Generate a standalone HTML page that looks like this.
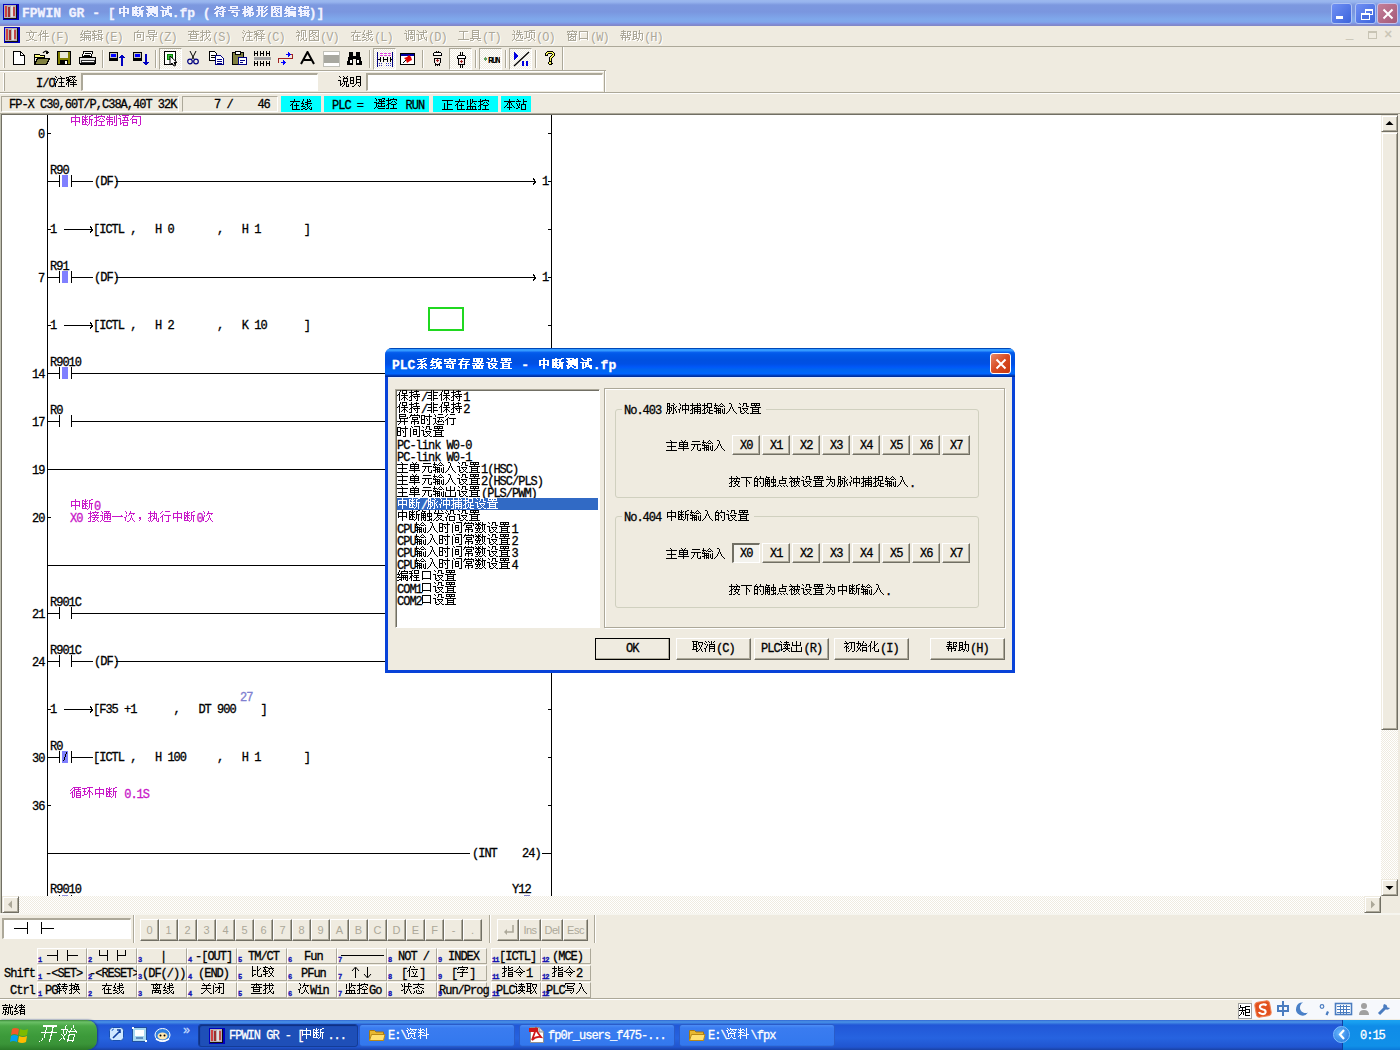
<!DOCTYPE html>
<html><head><meta charset="utf-8">
<style>
*{box-sizing:border-box;margin:0;padding:0}
html,body{width:1400px;height:1050px;overflow:hidden;background:#efebe0;color:#000}
.a{position:absolute}
.t{font-family:"Liberation Mono",monospace;font-size:12px;line-height:12px;white-space:pre;-webkit-text-stroke:0.3px currentColor}
.c{display:inline-block;overflow:hidden;white-space:pre;color:transparent;-webkit-text-stroke:0;vertical-align:top;height:12px}
.e{white-space:pre}
</style></head><body>

<div class="a" style="left:0px;top:0px;width:1400px;height:26px;background:linear-gradient(#9cb8ee 0,#97b4ee 2px,#7c98df 5px,#7a96df 12px,#7fa8eb 19px,#80a6ea 22px,#8090e0 24px,#8088c8 25px);"></div>
<svg class="a" style="left:3px;top:4px" width="16" height="16" viewBox="0 0 16 16">
<rect x="0" y="0" width="16" height="16" fill="#0000c0"/>
<rect x="1" y="1" width="13" height="14" fill="#101010"/>
<rect x="1" y="1" width="12" height="13" fill="#b8b0b0"/>
<rect x="2" y="2" width="2" height="11" fill="#d04040"/><rect x="5" y="3" width="2" height="10" fill="#a03030"/>
<rect x="8" y="2" width="2" height="11" fill="#e0e0e0"/><rect x="10" y="3" width="2" height="9" fill="#c04848"/>
</svg>
<div class="a t " style="left:22px;top:8px;color:#f0f2ff;font-size:13px;font-weight:bold;"><span class="e" style="letter-spacing:0.00px">FPWIN GR - [</span><span class="c" style="width:56px">中断测试</span><span class="e" style="letter-spacing:0.00px">.fp (</span><span class="c" style="width:98px">符号梯形图编辑</span><span class="e" style="letter-spacing:0.00px">)]</span><svg class="a" style="left:0;top:-2px;overflow:visible" width="306" height="16" fill="#f0f2ff" shape-rendering="crispEdges"><use href="#g0" x="96" y="0"/><use href="#g1" x="110" y="0"/><use href="#g2" x="124" y="0"/><use href="#g3" x="138" y="0"/><use href="#g4" x="192" y="0"/><use href="#g5" x="206" y="0"/><use href="#g6" x="220" y="0"/><use href="#g7" x="234" y="0"/><use href="#g8" x="248" y="0"/><use href="#g9" x="262" y="0"/><use href="#g10" x="276" y="0"/></svg></div>
<div class="a" style="left:1331px;top:3px;width:21px;height:21px;border:1px solid #b0c4f4;border-radius:3px;background:linear-gradient(135deg,#7090f4,#3c64dc)"></div>
<div class="a" style="left:1336px;top:16px;width:7px;height:3px;background:#fff;"></div>
<div class="a" style="left:1355px;top:3px;width:21px;height:21px;border:1px solid #b0c4f4;border-radius:3px;background:linear-gradient(135deg,#7090f4,#3c64dc)"></div>
<div class="a" style="left:1365px;top:9px;width:8px;height:6px;border:1px solid #fff;border-top-width:2px"></div>
<div class="a" style="left:1361px;top:13px;width:9px;height:7px;border:1px solid #fff;border-top-width:2px;background:#4a6ee0"></div>
<div class="a" style="left:1377px;top:3px;width:21px;height:21px;border:1px solid #c8c0e8;border-radius:3px;background:linear-gradient(135deg,#c47f98,#a45a78)"><svg class="a" style="left:4px;top:4px" width="12" height="12"><path d="M1.5 1.5L10.5 10.5M10.5 1.5L1.5 10.5" stroke="#fff" stroke-width="2"/></svg></div>
<div class="a" style="left:0px;top:26px;width:1400px;height:20px;background:#efebe0;"></div>
<svg class="a" style="left:4px;top:27px" width="16" height="16" viewBox="0 0 16 16">
<rect x="0" y="0" width="16" height="16" fill="#0000c0"/>
<rect x="1" y="1" width="13" height="14" fill="#101010"/>
<rect x="1" y="1" width="12" height="13" fill="#b8b0b0"/>
<rect x="2" y="2" width="2" height="11" fill="#d04040"/><rect x="5" y="3" width="2" height="10" fill="#a03030"/>
<rect x="8" y="2" width="2" height="11" fill="#e0e0e0"/><rect x="10" y="3" width="2" height="9" fill="#c04848"/>
</svg>
<div class="a t " style="left:27px;top:33px;color:#ffffff;font-size:12px;-webkit-text-stroke:0;"><span class="c" style="width:24px">文件</span><span class="e" style="letter-spacing:-1.00px">(F)</span><svg class="a" style="left:0;top:-2px;overflow:visible" width="42" height="16" fill="#ffffff" shape-rendering="crispEdges"><use href="#g11" x="0" y="0"/><use href="#g12" x="12" y="0"/></svg></div>
<div class="a t " style="left:26px;top:32px;color:#aca899;font-size:12px;-webkit-text-stroke:0;"><span class="c" style="width:24px">文件</span><span class="e" style="letter-spacing:-1.00px">(F)</span><svg class="a" style="left:0;top:-2px;overflow:visible" width="42" height="16" fill="#aca899" shape-rendering="crispEdges"><use href="#g11" x="0" y="0"/><use href="#g12" x="12" y="0"/></svg></div>
<div class="a t " style="left:81px;top:33px;color:#ffffff;font-size:12px;-webkit-text-stroke:0;"><span class="c" style="width:24px">编辑</span><span class="e" style="letter-spacing:-1.00px">(E)</span><svg class="a" style="left:0;top:-2px;overflow:visible" width="42" height="16" fill="#ffffff" shape-rendering="crispEdges"><use href="#g13" x="0" y="0"/><use href="#g14" x="12" y="0"/></svg></div>
<div class="a t " style="left:80px;top:32px;color:#aca899;font-size:12px;-webkit-text-stroke:0;"><span class="c" style="width:24px">编辑</span><span class="e" style="letter-spacing:-1.00px">(E)</span><svg class="a" style="left:0;top:-2px;overflow:visible" width="42" height="16" fill="#aca899" shape-rendering="crispEdges"><use href="#g13" x="0" y="0"/><use href="#g14" x="12" y="0"/></svg></div>
<div class="a t " style="left:135px;top:33px;color:#ffffff;font-size:12px;-webkit-text-stroke:0;"><span class="c" style="width:24px">向导</span><span class="e" style="letter-spacing:-1.00px">(Z)</span><svg class="a" style="left:0;top:-2px;overflow:visible" width="42" height="16" fill="#ffffff" shape-rendering="crispEdges"><use href="#g15" x="0" y="0"/><use href="#g16" x="12" y="0"/></svg></div>
<div class="a t " style="left:134px;top:32px;color:#aca899;font-size:12px;-webkit-text-stroke:0;"><span class="c" style="width:24px">向导</span><span class="e" style="letter-spacing:-1.00px">(Z)</span><svg class="a" style="left:0;top:-2px;overflow:visible" width="42" height="16" fill="#aca899" shape-rendering="crispEdges"><use href="#g15" x="0" y="0"/><use href="#g16" x="12" y="0"/></svg></div>
<div class="a t " style="left:189px;top:33px;color:#ffffff;font-size:12px;-webkit-text-stroke:0;"><span class="c" style="width:24px">查找</span><span class="e" style="letter-spacing:-1.00px">(S)</span><svg class="a" style="left:0;top:-2px;overflow:visible" width="42" height="16" fill="#ffffff" shape-rendering="crispEdges"><use href="#g17" x="0" y="0"/><use href="#g18" x="12" y="0"/></svg></div>
<div class="a t " style="left:188px;top:32px;color:#aca899;font-size:12px;-webkit-text-stroke:0;"><span class="c" style="width:24px">查找</span><span class="e" style="letter-spacing:-1.00px">(S)</span><svg class="a" style="left:0;top:-2px;overflow:visible" width="42" height="16" fill="#aca899" shape-rendering="crispEdges"><use href="#g17" x="0" y="0"/><use href="#g18" x="12" y="0"/></svg></div>
<div class="a t " style="left:243px;top:33px;color:#ffffff;font-size:12px;-webkit-text-stroke:0;"><span class="c" style="width:24px">注释</span><span class="e" style="letter-spacing:-1.00px">(C)</span><svg class="a" style="left:0;top:-2px;overflow:visible" width="42" height="16" fill="#ffffff" shape-rendering="crispEdges"><use href="#g19" x="0" y="0"/><use href="#g20" x="12" y="0"/></svg></div>
<div class="a t " style="left:242px;top:32px;color:#aca899;font-size:12px;-webkit-text-stroke:0;"><span class="c" style="width:24px">注释</span><span class="e" style="letter-spacing:-1.00px">(C)</span><svg class="a" style="left:0;top:-2px;overflow:visible" width="42" height="16" fill="#aca899" shape-rendering="crispEdges"><use href="#g19" x="0" y="0"/><use href="#g20" x="12" y="0"/></svg></div>
<div class="a t " style="left:297px;top:33px;color:#ffffff;font-size:12px;-webkit-text-stroke:0;"><span class="c" style="width:24px">视图</span><span class="e" style="letter-spacing:-1.00px">(V)</span><svg class="a" style="left:0;top:-2px;overflow:visible" width="42" height="16" fill="#ffffff" shape-rendering="crispEdges"><use href="#g21" x="0" y="0"/><use href="#g22" x="12" y="0"/></svg></div>
<div class="a t " style="left:296px;top:32px;color:#aca899;font-size:12px;-webkit-text-stroke:0;"><span class="c" style="width:24px">视图</span><span class="e" style="letter-spacing:-1.00px">(V)</span><svg class="a" style="left:0;top:-2px;overflow:visible" width="42" height="16" fill="#aca899" shape-rendering="crispEdges"><use href="#g21" x="0" y="0"/><use href="#g22" x="12" y="0"/></svg></div>
<div class="a t " style="left:351px;top:33px;color:#ffffff;font-size:12px;-webkit-text-stroke:0;"><span class="c" style="width:24px">在线</span><span class="e" style="letter-spacing:-1.00px">(L)</span><svg class="a" style="left:0;top:-2px;overflow:visible" width="42" height="16" fill="#ffffff" shape-rendering="crispEdges"><use href="#g23" x="0" y="0"/><use href="#g24" x="12" y="0"/></svg></div>
<div class="a t " style="left:350px;top:32px;color:#aca899;font-size:12px;-webkit-text-stroke:0;"><span class="c" style="width:24px">在线</span><span class="e" style="letter-spacing:-1.00px">(L)</span><svg class="a" style="left:0;top:-2px;overflow:visible" width="42" height="16" fill="#aca899" shape-rendering="crispEdges"><use href="#g23" x="0" y="0"/><use href="#g24" x="12" y="0"/></svg></div>
<div class="a t " style="left:405px;top:33px;color:#ffffff;font-size:12px;-webkit-text-stroke:0;"><span class="c" style="width:24px">调试</span><span class="e" style="letter-spacing:-1.00px">(D)</span><svg class="a" style="left:0;top:-2px;overflow:visible" width="42" height="16" fill="#ffffff" shape-rendering="crispEdges"><use href="#g25" x="0" y="0"/><use href="#g26" x="12" y="0"/></svg></div>
<div class="a t " style="left:404px;top:32px;color:#aca899;font-size:12px;-webkit-text-stroke:0;"><span class="c" style="width:24px">调试</span><span class="e" style="letter-spacing:-1.00px">(D)</span><svg class="a" style="left:0;top:-2px;overflow:visible" width="42" height="16" fill="#aca899" shape-rendering="crispEdges"><use href="#g25" x="0" y="0"/><use href="#g26" x="12" y="0"/></svg></div>
<div class="a t " style="left:459px;top:33px;color:#ffffff;font-size:12px;-webkit-text-stroke:0;"><span class="c" style="width:24px">工具</span><span class="e" style="letter-spacing:-1.00px">(T)</span><svg class="a" style="left:0;top:-2px;overflow:visible" width="42" height="16" fill="#ffffff" shape-rendering="crispEdges"><use href="#g27" x="0" y="0"/><use href="#g28" x="12" y="0"/></svg></div>
<div class="a t " style="left:458px;top:32px;color:#aca899;font-size:12px;-webkit-text-stroke:0;"><span class="c" style="width:24px">工具</span><span class="e" style="letter-spacing:-1.00px">(T)</span><svg class="a" style="left:0;top:-2px;overflow:visible" width="42" height="16" fill="#aca899" shape-rendering="crispEdges"><use href="#g27" x="0" y="0"/><use href="#g28" x="12" y="0"/></svg></div>
<div class="a t " style="left:513px;top:33px;color:#ffffff;font-size:12px;-webkit-text-stroke:0;"><span class="c" style="width:24px">选项</span><span class="e" style="letter-spacing:-1.00px">(O)</span><svg class="a" style="left:0;top:-2px;overflow:visible" width="42" height="16" fill="#ffffff" shape-rendering="crispEdges"><use href="#g29" x="0" y="0"/><use href="#g30" x="12" y="0"/></svg></div>
<div class="a t " style="left:512px;top:32px;color:#aca899;font-size:12px;-webkit-text-stroke:0;"><span class="c" style="width:24px">选项</span><span class="e" style="letter-spacing:-1.00px">(O)</span><svg class="a" style="left:0;top:-2px;overflow:visible" width="42" height="16" fill="#aca899" shape-rendering="crispEdges"><use href="#g29" x="0" y="0"/><use href="#g30" x="12" y="0"/></svg></div>
<div class="a t " style="left:567px;top:33px;color:#ffffff;font-size:12px;-webkit-text-stroke:0;"><span class="c" style="width:24px">窗口</span><span class="e" style="letter-spacing:-1.00px">(W)</span><svg class="a" style="left:0;top:-2px;overflow:visible" width="42" height="16" fill="#ffffff" shape-rendering="crispEdges"><use href="#g31" x="0" y="0"/><use href="#g32" x="12" y="0"/></svg></div>
<div class="a t " style="left:566px;top:32px;color:#aca899;font-size:12px;-webkit-text-stroke:0;"><span class="c" style="width:24px">窗口</span><span class="e" style="letter-spacing:-1.00px">(W)</span><svg class="a" style="left:0;top:-2px;overflow:visible" width="42" height="16" fill="#aca899" shape-rendering="crispEdges"><use href="#g31" x="0" y="0"/><use href="#g32" x="12" y="0"/></svg></div>
<div class="a t " style="left:621px;top:33px;color:#ffffff;font-size:12px;-webkit-text-stroke:0;"><span class="c" style="width:24px">帮助</span><span class="e" style="letter-spacing:-1.00px">(H)</span><svg class="a" style="left:0;top:-2px;overflow:visible" width="42" height="16" fill="#ffffff" shape-rendering="crispEdges"><use href="#g33" x="0" y="0"/><use href="#g34" x="12" y="0"/></svg></div>
<div class="a t " style="left:620px;top:32px;color:#aca899;font-size:12px;-webkit-text-stroke:0;"><span class="c" style="width:24px">帮助</span><span class="e" style="letter-spacing:-1.00px">(H)</span><svg class="a" style="left:0;top:-2px;overflow:visible" width="42" height="16" fill="#aca899" shape-rendering="crispEdges"><use href="#g33" x="0" y="0"/><use href="#g34" x="12" y="0"/></svg></div>
<div class="a t " style="left:1346px;top:29px;color:#c8c4b4;font-size:12px;"><span class="e" style="letter-spacing:-1.00px">_</span></div>
<div class="a" style="left:1368px;top:31px;width:9px;height:8px;border:1px solid #c8c4b4;border-top-width:2px"></div>
<div class="a t " style="left:1384px;top:29px;color:#c8c4b4;font-size:14px;"><span class="e" style="letter-spacing:0.00px">×</span></div>
<div class="a" style="left:0px;top:46px;width:1400px;height:1px;background:#aca899;"></div>
<div class="a" style="left:0px;top:47px;width:1400px;height:1px;background:#fcfcf8;"></div>
<div class="a" style="left:0px;top:47px;width:1400px;height:23px;background:#efebe0;"></div>
<div class="a" style="left:3px;top:49px;width:1px;height:19px;background:#fff;"></div>
<div class="a" style="left:4px;top:49px;width:1px;height:19px;background:#aca899;"></div>
<div class="a" style="left:102px;top:50px;width:1px;height:18px;background:#aca899;"></div>
<div class="a" style="left:103px;top:50px;width:1px;height:18px;background:#fff;"></div>
<div class="a" style="left:155px;top:50px;width:1px;height:18px;background:#aca899;"></div>
<div class="a" style="left:156px;top:50px;width:1px;height:18px;background:#fff;"></div>
<div class="a" style="left:369px;top:50px;width:1px;height:18px;background:#aca899;"></div>
<div class="a" style="left:370px;top:50px;width:1px;height:18px;background:#fff;"></div>
<div class="a" style="left:422px;top:50px;width:1px;height:18px;background:#aca899;"></div>
<div class="a" style="left:423px;top:50px;width:1px;height:18px;background:#fff;"></div>
<div class="a" style="left:475px;top:50px;width:1px;height:18px;background:#aca899;"></div>
<div class="a" style="left:476px;top:50px;width:1px;height:18px;background:#fff;"></div>
<div class="a" style="left:505px;top:50px;width:1px;height:18px;background:#aca899;"></div>
<div class="a" style="left:506px;top:50px;width:1px;height:18px;background:#fff;"></div>
<div class="a" style="left:535px;top:50px;width:1px;height:18px;background:#aca899;"></div>
<div class="a" style="left:536px;top:50px;width:1px;height:18px;background:#fff;"></div>
<div class="a" style="left:562px;top:47px;width:1px;height:23px;background:#aca899;"></div>
<div class="a" style="left:563px;top:47px;width:1px;height:23px;background:#fff;"></div>
<div class="a" style="left:159px;top:48px;width:23px;height:22px;background:repeating-conic-gradient(#fff 0 25%,#efebe0 0 50%) 0 0/2px 2px;border-top:1px solid #aca899;border-left:1px solid #aca899;border-right:1px solid #fff;border-bottom:1px solid #fff"></div>
<div class="a" style="left:373px;top:48px;width:23px;height:22px;background:repeating-conic-gradient(#fff 0 25%,#efebe0 0 50%) 0 0/2px 2px;border-top:1px solid #aca899;border-left:1px solid #aca899;border-right:1px solid #fff;border-bottom:1px solid #fff"></div>
<div class="a" style="left:449px;top:48px;width:23px;height:22px;background:repeating-conic-gradient(#fff 0 25%,#efebe0 0 50%) 0 0/2px 2px;border-top:1px solid #aca899;border-left:1px solid #aca899;border-right:1px solid #fff;border-bottom:1px solid #fff"></div>
<div class="a" style="left:479px;top:48px;width:23px;height:22px;background:repeating-conic-gradient(#fff 0 25%,#efebe0 0 50%) 0 0/2px 2px;border-top:1px solid #aca899;border-left:1px solid #aca899;border-right:1px solid #fff;border-bottom:1px solid #fff"></div>
<div class="a" style="left:509px;top:48px;width:23px;height:22px;background:repeating-conic-gradient(#fff 0 25%,#efebe0 0 50%) 0 0/2px 2px;border-top:1px solid #aca899;border-left:1px solid #aca899;border-right:1px solid #fff;border-bottom:1px solid #fff"></div>
<svg class="a" style="left:13px;top:51px" width="12" height="14" viewBox="0 0 12 14" shape-rendering="crispEdges"><path d="M0.5 0.5H7.5L11.5 4.5V13.5H0.5Z" fill="#fff" stroke="#000"/><path d="M7.5 0.5V4.5H11.5" fill="none" stroke="#000"/></svg>
<svg class="a" style="left:34px;top:50px" width="16" height="15" viewBox="0 0 16 15" shape-rendering="crispEdges"><path d="M9 3Q11 0 14 2" stroke="#000" fill="none" stroke-width="1.2" shape-rendering="auto"/><path d="M13 1L15 3L12 4Z" fill="#000"/><path d="M0.5 4.5H5.5L6.5 5.5H10.5V7.5H0.5Z" fill="#ffff80" stroke="#000"/><path d="M0.5 5V14.5H12.5L15.5 8.5H3.5L0.5 14.5" fill="#ffff80" stroke="#000"/><path d="M3.5 8.5H15.5L12.5 14.5H0.5Z" fill="#808040" stroke="#000"/></svg>
<svg class="a" style="left:57px;top:51px" width="14" height="14" viewBox="0 0 14 14" shape-rendering="crispEdges"><rect x="0.5" y="0.5" width="13" height="13" fill="#808000" stroke="#000"/><rect x="3" y="1" width="8" height="6" fill="#e8e8d8"/><rect x="3" y="9" width="8" height="5" fill="#000"/><rect x="8" y="10" width="2" height="3" fill="#fff"/></svg>
<svg class="a" style="left:79px;top:51px" width="17" height="15" viewBox="0 0 17 15" shape-rendering="crispEdges"><path d="M4.5 0.5H13.5L12.5 5.5H3.5Z" fill="#fff" stroke="#000"/><path d="M6 2H12M5 4H11" stroke="#000"/><path d="M0.5 6.5H16.5V12.5H0.5Z" fill="#e0e0e0" stroke="#000"/><rect x="2" y="9" width="13" height="2" fill="#fff" stroke="#000" stroke-width="0.8"/><rect x="1" y="13" width="15" height="1" fill="#000"/></svg>
<svg class="a" style="left:109px;top:52px" width="17" height="15" viewBox="0 0 17 15" shape-rendering="crispEdges"><rect x="0.5" y="0.5" width="8" height="6" fill="#c0c0c0" stroke="#000"/><rect x="2" y="2" width="5" height="3" fill="#0000ff"/><rect x="0" y="7" width="9" height="2" fill="#000"/><path d="M13 14V4" stroke="#0000c0" stroke-width="2"/><path d="M10 6L13 2L16 6Z" fill="#0000c0"/></svg>
<svg class="a" style="left:133px;top:52px" width="17" height="15" viewBox="0 0 17 15" shape-rendering="crispEdges"><rect x="0.5" y="0.5" width="8" height="6" fill="#c0c0c0" stroke="#000"/><rect x="2" y="2" width="5" height="3" fill="#0000ff"/><rect x="0" y="7" width="9" height="2" fill="#000"/><path d="M13 2V12" stroke="#0000c0" stroke-width="2"/><path d="M10 10L13 14L16 10Z" fill="#0000c0"/></svg>
<svg class="a" style="left:164px;top:51px" width="16" height="16" viewBox="0 0 16 16" shape-rendering="crispEdges"><rect x="0.5" y="0.5" width="11" height="13" fill="#fff" stroke="#000"/><rect x="3" y="3" width="5" height="5" fill="#40c040" stroke="#008000" stroke-width="1"/><path d="M6 5V14L8 12L10 15L11.5 14.5L10 11.5H13Z" fill="#fff" stroke="#000" shape-rendering="auto"/></svg>
<svg class="a" style="left:187px;top:50px" width="12" height="15" viewBox="0 0 12 15" shape-rendering="crispEdges"><path d="M3 1L7 9M9 1L5 9" stroke="#000" stroke-width="1" shape-rendering="auto"/><circle cx="3" cy="11.5" r="2.3" fill="none" stroke="#000080" stroke-width="1.2" shape-rendering="auto"/><circle cx="9" cy="11.5" r="2.3" fill="none" stroke="#000080" stroke-width="1.2" shape-rendering="auto"/></svg>
<svg class="a" style="left:209px;top:51px" width="16" height="14" viewBox="0 0 16 14" shape-rendering="crispEdges"><path d="M0.5 0.5H5.5L7.5 2.5V9.5H0.5Z" fill="#fff" stroke="#000"/><path d="M2 4H6M2 6H6" stroke="#000"/><path d="M6.5 4.5H11.5L14.5 7.5V13.5H6.5Z" fill="#fff" stroke="#000080"/><path d="M8 8H13M8 10H13M8 12H13" stroke="#000080"/></svg>
<svg class="a" style="left:232px;top:50px" width="16" height="16" viewBox="0 0 16 16" shape-rendering="crispEdges"><rect x="0.5" y="2.5" width="11" height="12" fill="#808040" stroke="#000"/><path d="M3.5 1.5H8.5V4.5H3.5Z" fill="#fff" stroke="#000"/><path d="M6.5 7.5H14.5V14.5H6.5Z" fill="#fff" stroke="#000080"/><path d="M8 10H13M8 12H11" stroke="#000080"/></svg>
<svg class="a" style="left:254px;top:51px" width="17" height="16" viewBox="0 0 17 16" shape-rendering="crispEdges"><g fill="#000"><rect x="0" y="0" width="1" height="5"/><rect x="0" y="2" width="3" height="1"/><rect x="3" y="0" width="1" height="5"/><rect x="6" y="0" width="1" height="5"/><rect x="6" y="2" width="4" height="1"/><rect x="9" y="0" width="1" height="5"/><rect x="12" y="0" width="1" height="5"/><rect x="12" y="2" width="3" height="1"/><rect x="15" y="0" width="1" height="5"/></g><rect x="0" y="6" width="17" height="3" fill="#a0a0a0"/><g fill="#000" transform="translate(0,10)"><rect x="0" y="0" width="1" height="5"/><rect x="0" y="2" width="3" height="1"/><rect x="3" y="0" width="1" height="5"/><rect x="6" y="0" width="1" height="5"/><rect x="6" y="2" width="4" height="1"/><rect x="9" y="0" width="1" height="5"/><rect x="12" y="0" width="1" height="5"/><rect x="12" y="2" width="3" height="1"/><rect x="15" y="0" width="1" height="5"/></g></svg>
<svg class="a" style="left:277px;top:51px" width="17" height="15" viewBox="0 0 17 15" shape-rendering="crispEdges"><path d="M1.5 12V7.5H15.5V3.5H12" stroke="#a02020" fill="none"/><path d="M9 3.5H13" stroke="#0000ff"/><path d="M11 1L14 3.5L11 6Z" fill="#0000ff"/><path d="M4 11.5H8" stroke="#0000ff"/><path d="M6 9L9 11.5L6 14Z" fill="#0000ff"/></svg>
<svg class="a" style="left:300px;top:51px" width="15" height="14" viewBox="0 0 15 14" shape-rendering="crispEdges"><path d="M1 13L7.5 1L14 13M4 9H11" stroke="#000" stroke-width="2" fill="none" shape-rendering="auto"/></svg>
<svg class="a" style="left:323px;top:51px" width="17" height="16" viewBox="0 0 17 16" shape-rendering="crispEdges"><rect x="0.5" y="0.5" width="16" height="15" fill="#fff" stroke="#c0c0b8"/><rect x="1" y="4" width="15" height="8" fill="#a8a8a0"/></svg>
<svg class="a" style="left:347px;top:51px" width="15" height="14" viewBox="0 0 15 14" shape-rendering="crispEdges"><path d="M2 1H6V5H9V1H13V4L15 12V14H9V8H6V14H0V12L2 4Z" fill="#000"/><rect x="3" y="9" width="2" height="3" fill="#fff"/><rect x="10" y="9" width="2" height="3" fill="#fff"/></svg>
<svg class="a" style="left:377px;top:51px" width="17" height="17" viewBox="0 0 17 17" shape-rendering="crispEdges"><rect x="0" y="1" width="1" height="15" fill="#000080"/><rect x="15" y="1" width="1" height="15" fill="#000080"/><g fill="#e040e0"><rect x="3" y="2" width="3" height="1"/><rect x="7" y="2" width="3" height="1"/><rect x="11" y="2" width="3" height="1"/><rect x="3" y="4" width="3" height="1"/><rect x="7" y="4" width="3" height="1"/><rect x="11" y="4" width="3" height="1"/></g><g fill="#000"><rect x="1" y="8" width="3" height="1"/><rect x="3" y="6" width="1" height="5"/><rect x="6" y="6" width="1" height="5"/><rect x="6" y="8" width="4" height="1"/><rect x="10" y="6" width="1" height="5"/><rect x="13" y="6" width="1" height="5"/><rect x="13" y="8" width="2" height="1"/></g><g fill="#4040c0"><rect x="2" y="12" width="1" height="1"/><rect x="4" y="12" width="1" height="1"/><rect x="9" y="12" width="1" height="1"/><rect x="11" y="12" width="1" height="1"/><rect x="13" y="12" width="1" height="1"/><rect x="2" y="14" width="1" height="1"/><rect x="4" y="14" width="1" height="1"/><rect x="9" y="14" width="1" height="1"/><rect x="11" y="14" width="1" height="1"/><rect x="13" y="14" width="1" height="1"/></g></svg>
<svg class="a" style="left:400px;top:53px" width="15" height="12" viewBox="0 0 15 12" shape-rendering="crispEdges"><rect x="0.5" y="0.5" width="14" height="11" fill="#fff" stroke="#000"/><rect x="1" y="1" width="13" height="2" fill="#0000a0"/><path d="M3 10L6 7" stroke="#000"/><path d="M4 5L7 4L9 2L11 4L12 7L10 8L7 10L6 7Z" fill="#e00000" shape-rendering="auto"/></svg>
<svg class="a" style="left:433px;top:51px" width="9" height="15" viewBox="0 0 9 15" shape-rendering="crispEdges"><rect x="3" y="0" width="1" height="1" fill="#000"/><rect x="5" y="0" width="1" height="1" fill="#000"/><rect x="1" y="1" width="1" height="1" fill="#000"/><rect x="2" y="1" width="1" height="1" fill="#000"/><rect x="3" y="1" width="1" height="1" fill="#000"/><rect x="4" y="1" width="1" height="1" fill="#000"/><rect x="5" y="1" width="1" height="1" fill="#000"/><rect x="6" y="1" width="1" height="1" fill="#000"/><rect x="7" y="1" width="1" height="1" fill="#000"/><rect x="0" y="2" width="1" height="1" fill="#000"/><rect x="1" y="2" width="1" height="1" fill="#fff"/><rect x="2" y="2" width="1" height="1" fill="#fff"/><rect x="3" y="2" width="1" height="1" fill="#fff"/><rect x="4" y="2" width="1" height="1" fill="#fff"/><rect x="5" y="2" width="1" height="1" fill="#fff"/><rect x="6" y="2" width="1" height="1" fill="#fff"/><rect x="7" y="2" width="1" height="1" fill="#fff"/><rect x="8" y="2" width="1" height="1" fill="#000"/><rect x="0" y="3" width="1" height="1" fill="#000"/><rect x="1" y="3" width="1" height="1" fill="#fff"/><rect x="2" y="3" width="1" height="1" fill="#fff"/><rect x="3" y="3" width="1" height="1" fill="#fff"/><rect x="4" y="3" width="1" height="1" fill="#fff"/><rect x="5" y="3" width="1" height="1" fill="#fff"/><rect x="6" y="3" width="1" height="1" fill="#fff"/><rect x="7" y="3" width="1" height="1" fill="#fff"/><rect x="8" y="3" width="1" height="1" fill="#000"/><rect x="0" y="4" width="1" height="1" fill="#000"/><rect x="1" y="4" width="1" height="1" fill="#000"/><rect x="2" y="4" width="1" height="1" fill="#000"/><rect x="3" y="4" width="1" height="1" fill="#000"/><rect x="4" y="4" width="1" height="1" fill="#000"/><rect x="5" y="4" width="1" height="1" fill="#000"/><rect x="6" y="4" width="1" height="1" fill="#000"/><rect x="7" y="4" width="1" height="1" fill="#000"/><rect x="8" y="4" width="1" height="1" fill="#000"/><rect x="1" y="7" width="1" height="1" fill="#000"/><rect x="2" y="7" width="1" height="1" fill="#000"/><rect x="3" y="7" width="1" height="1" fill="#000"/><rect x="4" y="7" width="1" height="1" fill="#000"/><rect x="5" y="7" width="1" height="1" fill="#000"/><rect x="6" y="7" width="1" height="1" fill="#000"/><rect x="7" y="7" width="1" height="1" fill="#000"/><rect x="1" y="8" width="1" height="1" fill="#000"/><rect x="2" y="8" width="1" height="1" fill="#f4e8e8"/><rect x="3" y="8" width="1" height="1" fill="#f4e8e8"/><rect x="4" y="8" width="1" height="1" fill="#a02020"/><rect x="5" y="8" width="1" height="1" fill="#f4e8e8"/><rect x="6" y="8" width="1" height="1" fill="#f4e8e8"/><rect x="7" y="8" width="1" height="1" fill="#000"/><rect x="1" y="9" width="1" height="1" fill="#000"/><rect x="2" y="9" width="1" height="1" fill="#f4e8e8"/><rect x="3" y="9" width="1" height="1" fill="#a02020"/><rect x="4" y="9" width="1" height="1" fill="#a02020"/><rect x="5" y="9" width="1" height="1" fill="#a02020"/><rect x="6" y="9" width="1" height="1" fill="#f4e8e8"/><rect x="7" y="9" width="1" height="1" fill="#000"/><rect x="1" y="10" width="1" height="1" fill="#000"/><rect x="2" y="10" width="1" height="1" fill="#f4e8e8"/><rect x="3" y="10" width="1" height="1" fill="#f4e8e8"/><rect x="4" y="10" width="1" height="1" fill="#a02020"/><rect x="5" y="10" width="1" height="1" fill="#f4e8e8"/><rect x="6" y="10" width="1" height="1" fill="#f4e8e8"/><rect x="7" y="10" width="1" height="1" fill="#000"/><rect x="1" y="11" width="1" height="1" fill="#000"/><rect x="2" y="11" width="1" height="1" fill="#f4e8e8"/><rect x="3" y="11" width="1" height="1" fill="#f4e8e8"/><rect x="4" y="11" width="1" height="1" fill="#f4e8e8"/><rect x="5" y="11" width="1" height="1" fill="#f4e8e8"/><rect x="6" y="11" width="1" height="1" fill="#f4e8e8"/><rect x="7" y="11" width="1" height="1" fill="#000"/><rect x="2" y="12" width="1" height="1" fill="#000"/><rect x="3" y="12" width="1" height="1" fill="#f4e8e8"/><rect x="4" y="12" width="1" height="1" fill="#f4e8e8"/><rect x="5" y="12" width="1" height="1" fill="#f4e8e8"/><rect x="6" y="12" width="1" height="1" fill="#000"/><rect x="2" y="13" width="1" height="1" fill="#000"/><rect x="3" y="13" width="1" height="1" fill="#000"/><rect x="4" y="13" width="1" height="1" fill="#000"/><rect x="5" y="13" width="1" height="1" fill="#000"/><rect x="6" y="13" width="1" height="1" fill="#000"/><rect x="2" y="14" width="1" height="1" fill="#000"/><rect x="4" y="14" width="1" height="1" fill="#000"/><rect x="6" y="14" width="1" height="1" fill="#000"/></svg>
<svg class="a" style="left:457px;top:52px" width="9" height="16" viewBox="0 0 9 16" shape-rendering="crispEdges"><rect x="3" y="0" width="1" height="1" fill="#000"/><rect x="5" y="0" width="1" height="1" fill="#000"/><rect x="3" y="1" width="1" height="1" fill="#000"/><rect x="5" y="1" width="1" height="1" fill="#000"/><rect x="3" y="2" width="1" height="1" fill="#000"/><rect x="5" y="2" width="1" height="1" fill="#000"/><rect x="1" y="3" width="1" height="1" fill="#000"/><rect x="2" y="3" width="1" height="1" fill="#000"/><rect x="3" y="3" width="1" height="1" fill="#000"/><rect x="4" y="3" width="1" height="1" fill="#000"/><rect x="5" y="3" width="1" height="1" fill="#000"/><rect x="6" y="3" width="1" height="1" fill="#000"/><rect x="7" y="3" width="1" height="1" fill="#000"/><rect x="0" y="4" width="1" height="1" fill="#000"/><rect x="1" y="4" width="1" height="1" fill="#fff"/><rect x="2" y="4" width="1" height="1" fill="#fff"/><rect x="3" y="4" width="1" height="1" fill="#fff"/><rect x="4" y="4" width="1" height="1" fill="#fff"/><rect x="5" y="4" width="1" height="1" fill="#fff"/><rect x="6" y="4" width="1" height="1" fill="#fff"/><rect x="7" y="4" width="1" height="1" fill="#fff"/><rect x="8" y="4" width="1" height="1" fill="#000"/><rect x="0" y="5" width="1" height="1" fill="#000"/><rect x="1" y="5" width="1" height="1" fill="#fff"/><rect x="2" y="5" width="1" height="1" fill="#fff"/><rect x="3" y="5" width="1" height="1" fill="#fff"/><rect x="4" y="5" width="1" height="1" fill="#fff"/><rect x="5" y="5" width="1" height="1" fill="#fff"/><rect x="6" y="5" width="1" height="1" fill="#fff"/><rect x="7" y="5" width="1" height="1" fill="#fff"/><rect x="8" y="5" width="1" height="1" fill="#000"/><rect x="0" y="6" width="1" height="1" fill="#000"/><rect x="1" y="6" width="1" height="1" fill="#000"/><rect x="2" y="6" width="1" height="1" fill="#000"/><rect x="3" y="6" width="1" height="1" fill="#000"/><rect x="4" y="6" width="1" height="1" fill="#000"/><rect x="5" y="6" width="1" height="1" fill="#000"/><rect x="6" y="6" width="1" height="1" fill="#000"/><rect x="7" y="6" width="1" height="1" fill="#000"/><rect x="8" y="6" width="1" height="1" fill="#000"/><rect x="1" y="7" width="1" height="1" fill="#000"/><rect x="2" y="7" width="1" height="1" fill="#f4e8e8"/><rect x="3" y="7" width="1" height="1" fill="#f4e8e8"/><rect x="4" y="7" width="1" height="1" fill="#f4e8e8"/><rect x="5" y="7" width="1" height="1" fill="#f4e8e8"/><rect x="6" y="7" width="1" height="1" fill="#f4e8e8"/><rect x="7" y="7" width="1" height="1" fill="#000"/><rect x="1" y="8" width="1" height="1" fill="#000"/><rect x="2" y="8" width="1" height="1" fill="#f4e8e8"/><rect x="3" y="8" width="1" height="1" fill="#f4e8e8"/><rect x="4" y="8" width="1" height="1" fill="#a02020"/><rect x="5" y="8" width="1" height="1" fill="#f4e8e8"/><rect x="6" y="8" width="1" height="1" fill="#f4e8e8"/><rect x="7" y="8" width="1" height="1" fill="#000"/><rect x="1" y="9" width="1" height="1" fill="#000"/><rect x="2" y="9" width="1" height="1" fill="#f4e8e8"/><rect x="3" y="9" width="1" height="1" fill="#a02020"/><rect x="4" y="9" width="1" height="1" fill="#a02020"/><rect x="5" y="9" width="1" height="1" fill="#a02020"/><rect x="6" y="9" width="1" height="1" fill="#f4e8e8"/><rect x="7" y="9" width="1" height="1" fill="#000"/><rect x="1" y="10" width="1" height="1" fill="#000"/><rect x="2" y="10" width="1" height="1" fill="#f4e8e8"/><rect x="3" y="10" width="1" height="1" fill="#f4e8e8"/><rect x="4" y="10" width="1" height="1" fill="#a02020"/><rect x="5" y="10" width="1" height="1" fill="#f4e8e8"/><rect x="6" y="10" width="1" height="1" fill="#f4e8e8"/><rect x="7" y="10" width="1" height="1" fill="#000"/><rect x="1" y="11" width="1" height="1" fill="#000"/><rect x="2" y="11" width="1" height="1" fill="#f4e8e8"/><rect x="3" y="11" width="1" height="1" fill="#f4e8e8"/><rect x="4" y="11" width="1" height="1" fill="#f4e8e8"/><rect x="5" y="11" width="1" height="1" fill="#f4e8e8"/><rect x="6" y="11" width="1" height="1" fill="#f4e8e8"/><rect x="7" y="11" width="1" height="1" fill="#000"/><rect x="1" y="12" width="1" height="1" fill="#000"/><rect x="2" y="12" width="1" height="1" fill="#000"/><rect x="3" y="12" width="1" height="1" fill="#000"/><rect x="4" y="12" width="1" height="1" fill="#000"/><rect x="5" y="12" width="1" height="1" fill="#000"/><rect x="6" y="12" width="1" height="1" fill="#000"/><rect x="7" y="12" width="1" height="1" fill="#000"/><rect x="3" y="13" width="1" height="1" fill="#000"/><rect x="5" y="13" width="1" height="1" fill="#000"/><rect x="3" y="14" width="1" height="1" fill="#000"/><rect x="5" y="14" width="1" height="1" fill="#000"/><rect x="3" y="15" width="1" height="1" fill="#000"/><rect x="5" y="15" width="1" height="1" fill="#000"/></svg>
<svg class="a" style="left:482px;top:55px" width="18" height="10" viewBox="0 0 18 10" shape-rendering="crispEdges"><path d="M3 2L5 4L3 6L1 4Z" fill="#60a060"/><text x="6" y="8" font-family="Liberation Mono" font-size="9" font-weight="bold" fill="#000" letter-spacing="-1.6">RUN</text></svg>
<svg class="a" style="left:513px;top:51px" width="17" height="16" viewBox="0 0 17 16" shape-rendering="crispEdges"><path d="M1 1L6 5L1 9Z" fill="#0000e0"/><path d="M1 15L16 1" stroke="#000" stroke-width="1.3" shape-rendering="auto"/><rect x="9" y="10" width="2" height="5" fill="#0000e0"/><rect x="13" y="10" width="2" height="5" fill="#0000e0"/></svg>
<svg class="a" style="left:545px;top:51px" width="11" height="14" viewBox="0 0 11 14" shape-rendering="crispEdges"><rect x="2" y="0" width="1" height="1" fill="#000"/><rect x="3" y="0" width="1" height="1" fill="#000"/><rect x="4" y="0" width="1" height="1" fill="#000"/><rect x="5" y="0" width="1" height="1" fill="#000"/><rect x="6" y="0" width="1" height="1" fill="#000"/><rect x="7" y="0" width="1" height="1" fill="#000"/><rect x="1" y="1" width="1" height="1" fill="#000"/><rect x="2" y="1" width="1" height="1" fill="#f8f860"/><rect x="3" y="1" width="1" height="1" fill="#f8f860"/><rect x="4" y="1" width="1" height="1" fill="#f8f860"/><rect x="5" y="1" width="1" height="1" fill="#f8f860"/><rect x="6" y="1" width="1" height="1" fill="#f8f860"/><rect x="7" y="1" width="1" height="1" fill="#f8f860"/><rect x="8" y="1" width="1" height="1" fill="#000"/><rect x="0" y="2" width="1" height="1" fill="#000"/><rect x="1" y="2" width="1" height="1" fill="#f8f860"/><rect x="2" y="2" width="1" height="1" fill="#f8f860"/><rect x="3" y="2" width="1" height="1" fill="#000"/><rect x="4" y="2" width="1" height="1" fill="#000"/><rect x="5" y="2" width="1" height="1" fill="#000"/><rect x="6" y="2" width="1" height="1" fill="#000"/><rect x="7" y="2" width="1" height="1" fill="#f8f860"/><rect x="8" y="2" width="1" height="1" fill="#f8f860"/><rect x="9" y="2" width="1" height="1" fill="#000"/><rect x="0" y="3" width="1" height="1" fill="#000"/><rect x="1" y="3" width="1" height="1" fill="#f8f860"/><rect x="2" y="3" width="1" height="1" fill="#000"/><rect x="7" y="3" width="1" height="1" fill="#000"/><rect x="8" y="3" width="1" height="1" fill="#f8f860"/><rect x="9" y="3" width="1" height="1" fill="#000"/><rect x="0" y="4" width="1" height="1" fill="#000"/><rect x="1" y="4" width="1" height="1" fill="#000"/><rect x="2" y="4" width="1" height="1" fill="#000"/><rect x="6" y="4" width="1" height="1" fill="#000"/><rect x="7" y="4" width="1" height="1" fill="#f8f860"/><rect x="8" y="4" width="1" height="1" fill="#f8f860"/><rect x="9" y="4" width="1" height="1" fill="#000"/><rect x="5" y="5" width="1" height="1" fill="#000"/><rect x="6" y="5" width="1" height="1" fill="#f8f860"/><rect x="7" y="5" width="1" height="1" fill="#f8f860"/><rect x="8" y="5" width="1" height="1" fill="#000"/><rect x="4" y="6" width="1" height="1" fill="#000"/><rect x="5" y="6" width="1" height="1" fill="#f8f860"/><rect x="6" y="6" width="1" height="1" fill="#f8f860"/><rect x="7" y="6" width="1" height="1" fill="#000"/><rect x="4" y="7" width="1" height="1" fill="#000"/><rect x="5" y="7" width="1" height="1" fill="#f8f860"/><rect x="6" y="7" width="1" height="1" fill="#000"/><rect x="4" y="8" width="1" height="1" fill="#000"/><rect x="5" y="8" width="1" height="1" fill="#f8f860"/><rect x="6" y="8" width="1" height="1" fill="#000"/><rect x="4" y="9" width="1" height="1" fill="#000"/><rect x="5" y="9" width="1" height="1" fill="#f8f860"/><rect x="6" y="9" width="1" height="1" fill="#000"/><rect x="4" y="10" width="1" height="1" fill="#000"/><rect x="5" y="10" width="1" height="1" fill="#000"/><rect x="6" y="10" width="1" height="1" fill="#000"/><rect x="3" y="11" width="1" height="1" fill="#000"/><rect x="4" y="11" width="1" height="1" fill="#f8f860"/><rect x="5" y="11" width="1" height="1" fill="#f8f860"/><rect x="6" y="11" width="1" height="1" fill="#000"/><rect x="3" y="12" width="1" height="1" fill="#000"/><rect x="4" y="12" width="1" height="1" fill="#f8f860"/><rect x="5" y="12" width="1" height="1" fill="#f8f860"/><rect x="6" y="12" width="1" height="1" fill="#000"/><rect x="7" y="12" width="1" height="1" fill="#000"/><rect x="4" y="13" width="1" height="1" fill="#000"/><rect x="5" y="13" width="1" height="1" fill="#000"/><rect x="6" y="13" width="1" height="1" fill="#000"/></svg>
<div class="a" style="left:0px;top:70px;width:606px;height:1px;background:#aca899;"></div>
<div class="a" style="left:0px;top:71px;width:606px;height:1px;background:#fff;"></div>
<div class="a" style="left:604px;top:71px;width:1px;height:22px;background:#aca899;"></div>
<div class="a" style="left:605px;top:71px;width:1px;height:22px;background:#fff;"></div>
<div class="a" style="left:3px;top:73px;width:1px;height:18px;background:#fff;"></div>
<div class="a" style="left:4px;top:73px;width:1px;height:18px;background:#aca899;"></div>
<div class="a t " style="left:36px;top:78px;color:#000;font-size:12px;"><span class="e" style="letter-spacing:-1.00px">I/O</span><span class="c" style="width:24px">注释</span><svg class="a" style="left:0;top:-2px;overflow:visible" width="42" height="16" fill="#000" shape-rendering="crispEdges"><use href="#g19" x="18" y="0"/><use href="#g20" x="30" y="0"/></svg></div>
<div class="a" style="left:81px;top:73px;width:237px;height:18px;background:#fff;border-top:2px solid #aca899;border-left:2px solid #aca899;border-right:1px solid #fff;border-bottom:1px solid #fff"></div>
<div class="a t " style="left:338px;top:78px;color:#000;font-size:12px;"><span class="c" style="width:24px">说明</span><svg class="a" style="left:0;top:-2px;overflow:visible" width="24" height="16" fill="#000" shape-rendering="crispEdges"><use href="#g35" x="0" y="0"/><use href="#g36" x="12" y="0"/></svg></div>
<div class="a" style="left:366px;top:73px;width:237px;height:18px;background:#fff;border-top:2px solid #aca899;border-left:2px solid #aca899;border-right:1px solid #fff;border-bottom:1px solid #fff"></div>
<div class="a" style="left:0px;top:92px;width:1400px;height:1px;background:#aca899;"></div>
<div class="a" style="left:0px;top:93px;width:1400px;height:1px;background:#fff;"></div>
<div class="a" style="left:1px;top:96px;width:178px;height:16px;background:#efebe0;border-top:1px solid #aca899;border-left:1px solid #aca899;border-right:1px solid #fff;border-bottom:1px solid #fff;"></div>
<div class="a t " style="left:9px;top:99px;color:#000;font-size:12px;"><span class="e" style="letter-spacing:-1.00px">FP-X C30,60T/P,C38A,40T 32K</span></div>
<div class="a" style="left:182px;top:96px;width:96px;height:16px;background:#efebe0;border-top:1px solid #aca899;border-left:1px solid #aca899;border-right:1px solid #fff;border-bottom:1px solid #fff;"></div>
<div class="a t " style="left:214px;top:99px;color:#000;font-size:12px;"><span class="e" style="letter-spacing:-1.00px">7 /    46</span></div>
<div class="a" style="left:281px;top:96px;width:40px;height:16px;background:#00ffff;"></div>
<div class="a t " style="left:289px;top:101px;color:#000;font-size:12px;"><span class="c" style="width:24px">在线</span><svg class="a" style="left:0;top:-2px;overflow:visible" width="24" height="16" fill="#000" shape-rendering="crispEdges"><use href="#g23" x="0" y="0"/><use href="#g24" x="12" y="0"/></svg></div>
<div class="a" style="left:324px;top:96px;width:105px;height:16px;background:#00ffff;"></div>
<div class="a t " style="left:332px;top:100px;color:#000;font-size:12px;"><span class="e" style="letter-spacing:-1.00px">PLC =  </span><span class="c" style="width:24px">遥控</span><span class="e" style="letter-spacing:-1.00px"> RUN</span><svg class="a" style="left:0;top:-2px;overflow:visible" width="90" height="16" fill="#000" shape-rendering="crispEdges"><use href="#g37" x="42" y="0"/><use href="#g38" x="54" y="0"/></svg></div>
<div class="a" style="left:433px;top:96px;width:65px;height:16px;background:#00ffff;"></div>
<div class="a t " style="left:442px;top:101px;color:#000;font-size:12px;"><span class="c" style="width:48px">正在监控</span><svg class="a" style="left:0;top:-2px;overflow:visible" width="48" height="16" fill="#000" shape-rendering="crispEdges"><use href="#g39" x="0" y="0"/><use href="#g23" x="12" y="0"/><use href="#g40" x="24" y="0"/><use href="#g38" x="36" y="0"/></svg></div>
<div class="a" style="left:501px;top:96px;width:30px;height:16px;background:#00ffff;"></div>
<div class="a t " style="left:504px;top:101px;color:#000;font-size:12px;"><span class="c" style="width:24px">本站</span><svg class="a" style="left:0;top:-2px;overflow:visible" width="24" height="16" fill="#000" shape-rendering="crispEdges"><use href="#g41" x="0" y="0"/><use href="#g42" x="12" y="0"/></svg></div>
<div class="a" style="left:0px;top:113px;width:1400px;height:1px;background:#aca899;"></div>
<div class="a" style="left:0px;top:114px;width:1398px;height:1px;background:#716f64;"></div>
<div class="a" style="left:0px;top:114px;width:1px;height:800px;background:#c0c0b0;"></div>
<div class="a" style="left:1px;top:114px;width:1px;height:800px;background:#716f64;"></div>
<div class="a" style="left:2px;top:115px;width:1379px;height:781px;background:#fff;"></div>
<svg class="a" style="left:0;top:0" width="1400" height="1050" shape-rendering="crispEdges"><rect x="47" y="115" width="1" height="781" fill="#000"/><rect x="551" y="115" width="1" height="781" fill="#000"/><rect x="48" y="133" width="3" height="1" fill="#000"/><rect x="548" y="133" width="3" height="1" fill="#000"/><rect x="48" y="181" width="11" height="1" fill="#000"/><rect x="59" y="175" width="1" height="12" fill="#000"/><rect x="71" y="175" width="1" height="12" fill="#000"/><rect x="62" y="175" width="6" height="12" fill="#8080ff"/><rect x="72" y="181" width="21" height="1" fill="#000"/><rect x="116" y="181" width="420" height="1" fill="#000"/><path d="M533 178.5L535.5 181.5L533 184.5" stroke="#000" stroke-width="1.3" fill="none"/><rect x="548" y="181" width="3" height="1" fill="#000"/><rect x="48" y="229" width="3" height="1" fill="#000"/><rect x="64" y="229" width="29" height="1" fill="#000"/><path d="M90 226.5L92.5 229.5L90 232.5" stroke="#000" stroke-width="1.3" fill="none"/><rect x="548" y="229" width="3" height="1" fill="#000"/><rect x="48" y="277" width="11" height="1" fill="#000"/><rect x="59" y="271" width="1" height="12" fill="#000"/><rect x="71" y="271" width="1" height="12" fill="#000"/><rect x="62" y="271" width="6" height="12" fill="#8080ff"/><rect x="72" y="277" width="21" height="1" fill="#000"/><rect x="116" y="277" width="420" height="1" fill="#000"/><path d="M533 274.5L535.5 277.5L533 280.5" stroke="#000" stroke-width="1.3" fill="none"/><rect x="548" y="277" width="3" height="1" fill="#000"/><rect x="48" y="325" width="3" height="1" fill="#000"/><rect x="64" y="325" width="29" height="1" fill="#000"/><path d="M90 322.5L92.5 325.5L90 328.5" stroke="#000" stroke-width="1.3" fill="none"/><rect x="548" y="325" width="3" height="1" fill="#000"/><rect x="48" y="373" width="11" height="1" fill="#000"/><rect x="59" y="367" width="1" height="12" fill="#000"/><rect x="71" y="367" width="1" height="12" fill="#000"/><rect x="62" y="367" width="6" height="12" fill="#8080ff"/><rect x="72" y="373" width="479" height="1" fill="#000"/><rect x="48" y="421" width="11" height="1" fill="#000"/><rect x="59" y="415" width="1" height="12" fill="#000"/><rect x="71" y="415" width="1" height="12" fill="#000"/><rect x="72" y="421" width="479" height="1" fill="#000"/><rect x="48" y="469" width="503" height="1" fill="#000"/><rect x="48" y="517" width="3" height="1" fill="#000"/><rect x="548" y="517" width="3" height="1" fill="#000"/><rect x="48" y="565" width="503" height="1" fill="#000"/><rect x="48" y="613" width="11" height="1" fill="#000"/><rect x="59" y="607" width="1" height="12" fill="#000"/><rect x="71" y="607" width="1" height="12" fill="#000"/><rect x="72" y="613" width="479" height="1" fill="#000"/><rect x="48" y="661" width="11" height="1" fill="#000"/><rect x="59" y="655" width="1" height="12" fill="#000"/><rect x="71" y="655" width="1" height="12" fill="#000"/><rect x="72" y="661" width="21" height="1" fill="#000"/><rect x="116" y="661" width="435" height="1" fill="#000"/><rect x="48" y="709" width="3" height="1" fill="#000"/><rect x="64" y="709" width="29" height="1" fill="#000"/><path d="M90 706.5L92.5 709.5L90 712.5" stroke="#000" stroke-width="1.3" fill="none"/><rect x="548" y="709" width="3" height="1" fill="#000"/><rect x="48" y="757" width="11" height="1" fill="#000"/><rect x="59" y="751" width="1" height="12" fill="#000"/><rect x="71" y="751" width="1" height="12" fill="#000"/><rect x="62" y="751" width="6" height="12" fill="#8080ff"/><path d="M63.5 761.5L66.5 752.5" stroke="#000" stroke-width="1.2"/><rect x="72" y="757" width="21" height="1" fill="#000"/><rect x="548" y="757" width="3" height="1" fill="#000"/><rect x="48" y="805" width="3" height="1" fill="#000"/><rect x="548" y="805" width="3" height="1" fill="#000"/><rect x="48" y="853" width="422" height="1" fill="#000"/><rect x="542" y="853" width="9" height="1" fill="#000"/><rect x="59" y="895" width="1" height="1" fill="#000"/><rect x="71" y="895" width="1" height="1" fill="#000"/><rect x="62" y="895" width="6" height="1" fill="#9090e0"/><rect x="524" y="895" width="6" height="1" fill="#8080c8"/><rect x="429" y="308" width="34" height="22" fill="none" stroke="#20d820" stroke-width="2"/></svg>
<div class="a t " style="left:38px;top:129px;color:#000;font-size:12px;"><span class="e" style="letter-spacing:-1.00px">0</span></div>
<div class="a t " style="left:38px;top:273px;color:#000;font-size:12px;"><span class="e" style="letter-spacing:-1.00px">7</span></div>
<div class="a t " style="left:32px;top:369px;color:#000;font-size:12px;"><span class="e" style="letter-spacing:-1.00px">14</span></div>
<div class="a t " style="left:32px;top:417px;color:#000;font-size:12px;"><span class="e" style="letter-spacing:-1.00px">17</span></div>
<div class="a t " style="left:32px;top:465px;color:#000;font-size:12px;"><span class="e" style="letter-spacing:-1.00px">19</span></div>
<div class="a t " style="left:32px;top:513px;color:#000;font-size:12px;"><span class="e" style="letter-spacing:-1.00px">20</span></div>
<div class="a t " style="left:32px;top:609px;color:#000;font-size:12px;"><span class="e" style="letter-spacing:-1.00px">21</span></div>
<div class="a t " style="left:32px;top:657px;color:#000;font-size:12px;"><span class="e" style="letter-spacing:-1.00px">24</span></div>
<div class="a t " style="left:32px;top:753px;color:#000;font-size:12px;"><span class="e" style="letter-spacing:-1.00px">30</span></div>
<div class="a t " style="left:32px;top:801px;color:#000;font-size:12px;"><span class="e" style="letter-spacing:-1.00px">36</span></div>
<div class="a t " style="left:70px;top:117px;color:#c818c8;font-size:12px;"><span class="c" style="width:72px">中断控制语句</span><svg class="a" style="left:0;top:-2px;overflow:visible" width="72" height="16" fill="#c818c8" shape-rendering="crispEdges"><use href="#g43" x="0" y="0"/><use href="#g44" x="12" y="0"/><use href="#g38" x="24" y="0"/><use href="#g45" x="36" y="0"/><use href="#g46" x="48" y="0"/><use href="#g47" x="60" y="0"/></svg></div>
<div class="a t " style="left:50px;top:165px;color:#000;font-size:12px;"><span class="e" style="letter-spacing:-1.00px">R90</span></div>
<div class="a t " style="left:94px;top:176px;color:#000;font-size:12px;"><span class="e" style="letter-spacing:-1.00px">(DF)</span></div>
<div class="a t " style="left:542px;top:176px;color:#000;font-size:12px;"><span class="e" style="letter-spacing:-1.00px">1</span></div>
<div class="a t " style="left:50px;top:224px;color:#000;font-size:12px;"><span class="e" style="letter-spacing:-1.00px">1</span></div>
<div class="a t " style="left:93px;top:224px;color:#000;font-size:12px;"><span class="e" style="letter-spacing:-1.00px">[ICTL ,   H 0       ,   H 1       ]</span></div>
<div class="a t " style="left:50px;top:261px;color:#000;font-size:12px;"><span class="e" style="letter-spacing:-1.00px">R91</span></div>
<div class="a t " style="left:94px;top:272px;color:#000;font-size:12px;"><span class="e" style="letter-spacing:-1.00px">(DF)</span></div>
<div class="a t " style="left:542px;top:272px;color:#000;font-size:12px;"><span class="e" style="letter-spacing:-1.00px">1</span></div>
<div class="a t " style="left:50px;top:320px;color:#000;font-size:12px;"><span class="e" style="letter-spacing:-1.00px">1</span></div>
<div class="a t " style="left:93px;top:320px;color:#000;font-size:12px;"><span class="e" style="letter-spacing:-1.00px">[ICTL ,   H 2       ,   K 10      ]</span></div>
<div class="a t " style="left:50px;top:357px;color:#000;font-size:12px;"><span class="e" style="letter-spacing:-1.00px">R9010</span></div>
<div class="a t " style="left:50px;top:405px;color:#000;font-size:12px;"><span class="e" style="letter-spacing:-1.00px">R0</span></div>
<div class="a t " style="left:70px;top:501px;color:#c818c8;font-size:12px;"><span class="c" style="width:24px">中断</span><span class="e" style="letter-spacing:-1.00px">0</span><svg class="a" style="left:0;top:-2px;overflow:visible" width="30" height="16" fill="#c818c8" shape-rendering="crispEdges"><use href="#g43" x="0" y="0"/><use href="#g44" x="12" y="0"/></svg></div>
<div class="a t " style="left:70px;top:513px;color:#c818c8;font-size:12px;"><span class="e" style="letter-spacing:-1.00px">X0 </span><span class="c" style="width:108px">接通一次，执行中断</span><span class="e" style="letter-spacing:-1.00px">0</span><span class="c" style="width:12px">次</span><svg class="a" style="left:0;top:-2px;overflow:visible" width="144" height="16" fill="#c818c8" shape-rendering="crispEdges"><use href="#g48" x="18" y="0"/><use href="#g49" x="30" y="0"/><use href="#g50" x="42" y="0"/><use href="#g51" x="54" y="0"/><use href="#g52" x="66" y="0"/><use href="#g53" x="78" y="0"/><use href="#g54" x="90" y="0"/><use href="#g43" x="102" y="0"/><use href="#g44" x="114" y="0"/><use href="#g51" x="132" y="0"/></svg></div>
<div class="a t " style="left:50px;top:597px;color:#000;font-size:12px;"><span class="e" style="letter-spacing:-1.00px">R901C</span></div>
<div class="a t " style="left:50px;top:645px;color:#000;font-size:12px;"><span class="e" style="letter-spacing:-1.00px">R901C</span></div>
<div class="a t " style="left:94px;top:656px;color:#000;font-size:12px;"><span class="e" style="letter-spacing:-1.00px">(DF)</span></div>
<div class="a t " style="left:50px;top:704px;color:#000;font-size:12px;"><span class="e" style="letter-spacing:-1.00px">1</span></div>
<div class="a t " style="left:93px;top:704px;color:#000;font-size:12px;"><span class="e" style="letter-spacing:-1.00px">[F35 +1      ,   DT 900    ]</span></div>
<div class="a t " style="left:240px;top:692px;color:#8080d0;font-size:12px;"><span class="e" style="letter-spacing:-1.00px">27</span></div>
<div class="a t " style="left:50px;top:741px;color:#000;font-size:12px;"><span class="e" style="letter-spacing:-1.00px">R0</span></div>
<div class="a t " style="left:93px;top:752px;color:#000;font-size:12px;"><span class="e" style="letter-spacing:-1.00px">[ICTL ,   H 100     ,   H 1       ]</span></div>
<div class="a t " style="left:70px;top:789px;color:#c818c8;font-size:12px;"><span class="c" style="width:48px">循环中断</span><span class="e" style="letter-spacing:-1.00px"> 0.1S</span><svg class="a" style="left:0;top:-2px;overflow:visible" width="78" height="16" fill="#c818c8" shape-rendering="crispEdges"><use href="#g55" x="0" y="0"/><use href="#g56" x="12" y="0"/><use href="#g43" x="24" y="0"/><use href="#g44" x="36" y="0"/></svg></div>
<div class="a t " style="left:472px;top:848px;color:#000;font-size:12px;"><span class="e" style="letter-spacing:-1.00px">(INT</span></div>
<div class="a t " style="left:522px;top:848px;color:#000;font-size:12px;"><span class="e" style="letter-spacing:-1.00px">24)</span></div>
<div class="a t " style="left:50px;top:884px;color:#000;font-size:12px;"><span class="e" style="letter-spacing:-1.00px">R9010</span></div>
<div class="a t " style="left:512px;top:884px;color:#000;font-size:12px;"><span class="e" style="letter-spacing:-1.00px">Y12</span></div>
<div class="a" style="left:1381px;top:115px;width:17px;height:781px;background:repeating-conic-gradient(#fff 0 25%,#efebe0 0 50%) 0 0/2px 2px;"></div>
<div class="a" style="left:1381px;top:115px;width:17px;height:17px;background:#efebe0;border-top:1px solid #efebe0;border-left:1px solid #efebe0;border-right:1px solid #716f64;border-bottom:1px solid #716f64;box-shadow:inset 1px 1px 0 #fff,inset -1px -1px 0 #aca899"></div>
<svg class="a" style="left:1385px;top:120px" width="9" height="6"><path d="M0.5 5L4.5 1L8.5 5Z" fill="#000"/></svg>
<div class="a" style="left:1381px;top:132px;width:17px;height:598px;background:#efebe0;border-top:1px solid #efebe0;border-left:1px solid #efebe0;border-right:1px solid #716f64;border-bottom:1px solid #716f64;box-shadow:inset 1px 1px 0 #fff,inset -1px -1px 0 #aca899"></div>
<div class="a" style="left:1381px;top:879px;width:17px;height:17px;background:#efebe0;border-top:1px solid #efebe0;border-left:1px solid #efebe0;border-right:1px solid #716f64;border-bottom:1px solid #716f64;box-shadow:inset 1px 1px 0 #fff,inset -1px -1px 0 #aca899"></div>
<svg class="a" style="left:1385px;top:885px" width="9" height="6"><path d="M0.5 1L4.5 5L8.5 1Z" fill="#000"/></svg>
<div class="a" style="left:2px;top:896px;width:1379px;height:17px;background:repeating-conic-gradient(#fff 0 25%,#efebe0 0 50%) 0 0/2px 2px;"></div>
<div class="a" style="left:2px;top:896px;width:17px;height:17px;background:#efebe0;border-top:1px solid #efebe0;border-left:1px solid #efebe0;border-right:1px solid #716f64;border-bottom:1px solid #716f64;box-shadow:inset 1px 1px 0 #fff,inset -1px -1px 0 #aca899"></div>
<svg class="a" style="left:7px;top:900px" width="6" height="9"><path d="M5 0.5L1 4.5L5 8.5Z" fill="#aca899"/></svg>
<div class="a" style="left:1364px;top:896px;width:17px;height:17px;background:#efebe0;border-top:1px solid #efebe0;border-left:1px solid #efebe0;border-right:1px solid #716f64;border-bottom:1px solid #716f64;box-shadow:inset 1px 1px 0 #fff,inset -1px -1px 0 #aca899"></div>
<svg class="a" style="left:1370px;top:900px" width="6" height="9"><path d="M1 0.5L5 4.5L1 8.5Z" fill="#aca899"/></svg>
<div class="a" style="left:1381px;top:896px;width:17px;height:17px;background:#efebe0;"></div>
<div class="a" style="left:0px;top:913px;width:1400px;height:2px;background:#f6f5ef;"></div>
<div class="a" style="left:2px;top:918px;width:129px;height:21px;background:#fff;border-top:2px solid #aca899;border-left:2px solid #aca899;border-right:1px solid #fff;border-bottom:1px solid #fff"></div>
<svg class="a" style="left:0;top:915px" width="140" height="30" shape-rendering="crispEdges"><rect x="14" y="13" width="14" height="1" fill="#000"/><rect x="27" y="7" width="1" height="12" fill="#000"/><rect x="41" y="7" width="1" height="12" fill="#000"/><rect x="41" y="13" width="13" height="1" fill="#000"/></svg>
<div class="a" style="left:133px;top:915px;width:1px;height:28px;background:#aca899;"></div>
<div class="a" style="left:134px;top:915px;width:1px;height:28px;background:#fff;"></div>
<div class="a" style="left:140px;top:919px;width:19px;height:22px;background:#efebe0;border-top:1px solid #fff;border-left:1px solid #fff;border-right:1px solid #716f64;border-bottom:1px solid #716f64;box-shadow:inset -1px -1px 0 #aca899"></div>
<div class="a" style="left:140px;top:923px;width:19px;text-align:center;font:11px/14px Liberation Sans,sans-serif;color:#aca899">0</div>
<div class="a" style="left:159px;top:919px;width:19px;height:22px;background:#efebe0;border-top:1px solid #fff;border-left:1px solid #fff;border-right:1px solid #716f64;border-bottom:1px solid #716f64;box-shadow:inset -1px -1px 0 #aca899"></div>
<div class="a" style="left:159px;top:923px;width:19px;text-align:center;font:11px/14px Liberation Sans,sans-serif;color:#aca899">1</div>
<div class="a" style="left:178px;top:919px;width:19px;height:22px;background:#efebe0;border-top:1px solid #fff;border-left:1px solid #fff;border-right:1px solid #716f64;border-bottom:1px solid #716f64;box-shadow:inset -1px -1px 0 #aca899"></div>
<div class="a" style="left:178px;top:923px;width:19px;text-align:center;font:11px/14px Liberation Sans,sans-serif;color:#aca899">2</div>
<div class="a" style="left:197px;top:919px;width:19px;height:22px;background:#efebe0;border-top:1px solid #fff;border-left:1px solid #fff;border-right:1px solid #716f64;border-bottom:1px solid #716f64;box-shadow:inset -1px -1px 0 #aca899"></div>
<div class="a" style="left:197px;top:923px;width:19px;text-align:center;font:11px/14px Liberation Sans,sans-serif;color:#aca899">3</div>
<div class="a" style="left:216px;top:919px;width:19px;height:22px;background:#efebe0;border-top:1px solid #fff;border-left:1px solid #fff;border-right:1px solid #716f64;border-bottom:1px solid #716f64;box-shadow:inset -1px -1px 0 #aca899"></div>
<div class="a" style="left:216px;top:923px;width:19px;text-align:center;font:11px/14px Liberation Sans,sans-serif;color:#aca899">4</div>
<div class="a" style="left:235px;top:919px;width:19px;height:22px;background:#efebe0;border-top:1px solid #fff;border-left:1px solid #fff;border-right:1px solid #716f64;border-bottom:1px solid #716f64;box-shadow:inset -1px -1px 0 #aca899"></div>
<div class="a" style="left:235px;top:923px;width:19px;text-align:center;font:11px/14px Liberation Sans,sans-serif;color:#aca899">5</div>
<div class="a" style="left:254px;top:919px;width:19px;height:22px;background:#efebe0;border-top:1px solid #fff;border-left:1px solid #fff;border-right:1px solid #716f64;border-bottom:1px solid #716f64;box-shadow:inset -1px -1px 0 #aca899"></div>
<div class="a" style="left:254px;top:923px;width:19px;text-align:center;font:11px/14px Liberation Sans,sans-serif;color:#aca899">6</div>
<div class="a" style="left:273px;top:919px;width:19px;height:22px;background:#efebe0;border-top:1px solid #fff;border-left:1px solid #fff;border-right:1px solid #716f64;border-bottom:1px solid #716f64;box-shadow:inset -1px -1px 0 #aca899"></div>
<div class="a" style="left:273px;top:923px;width:19px;text-align:center;font:11px/14px Liberation Sans,sans-serif;color:#aca899">7</div>
<div class="a" style="left:292px;top:919px;width:19px;height:22px;background:#efebe0;border-top:1px solid #fff;border-left:1px solid #fff;border-right:1px solid #716f64;border-bottom:1px solid #716f64;box-shadow:inset -1px -1px 0 #aca899"></div>
<div class="a" style="left:292px;top:923px;width:19px;text-align:center;font:11px/14px Liberation Sans,sans-serif;color:#aca899">8</div>
<div class="a" style="left:311px;top:919px;width:19px;height:22px;background:#efebe0;border-top:1px solid #fff;border-left:1px solid #fff;border-right:1px solid #716f64;border-bottom:1px solid #716f64;box-shadow:inset -1px -1px 0 #aca899"></div>
<div class="a" style="left:311px;top:923px;width:19px;text-align:center;font:11px/14px Liberation Sans,sans-serif;color:#aca899">9</div>
<div class="a" style="left:330px;top:919px;width:19px;height:22px;background:#efebe0;border-top:1px solid #fff;border-left:1px solid #fff;border-right:1px solid #716f64;border-bottom:1px solid #716f64;box-shadow:inset -1px -1px 0 #aca899"></div>
<div class="a" style="left:330px;top:923px;width:19px;text-align:center;font:11px/14px Liberation Sans,sans-serif;color:#aca899">A</div>
<div class="a" style="left:349px;top:919px;width:19px;height:22px;background:#efebe0;border-top:1px solid #fff;border-left:1px solid #fff;border-right:1px solid #716f64;border-bottom:1px solid #716f64;box-shadow:inset -1px -1px 0 #aca899"></div>
<div class="a" style="left:349px;top:923px;width:19px;text-align:center;font:11px/14px Liberation Sans,sans-serif;color:#aca899">B</div>
<div class="a" style="left:368px;top:919px;width:19px;height:22px;background:#efebe0;border-top:1px solid #fff;border-left:1px solid #fff;border-right:1px solid #716f64;border-bottom:1px solid #716f64;box-shadow:inset -1px -1px 0 #aca899"></div>
<div class="a" style="left:368px;top:923px;width:19px;text-align:center;font:11px/14px Liberation Sans,sans-serif;color:#aca899">C</div>
<div class="a" style="left:387px;top:919px;width:19px;height:22px;background:#efebe0;border-top:1px solid #fff;border-left:1px solid #fff;border-right:1px solid #716f64;border-bottom:1px solid #716f64;box-shadow:inset -1px -1px 0 #aca899"></div>
<div class="a" style="left:387px;top:923px;width:19px;text-align:center;font:11px/14px Liberation Sans,sans-serif;color:#aca899">D</div>
<div class="a" style="left:406px;top:919px;width:19px;height:22px;background:#efebe0;border-top:1px solid #fff;border-left:1px solid #fff;border-right:1px solid #716f64;border-bottom:1px solid #716f64;box-shadow:inset -1px -1px 0 #aca899"></div>
<div class="a" style="left:406px;top:923px;width:19px;text-align:center;font:11px/14px Liberation Sans,sans-serif;color:#aca899">E</div>
<div class="a" style="left:425px;top:919px;width:19px;height:22px;background:#efebe0;border-top:1px solid #fff;border-left:1px solid #fff;border-right:1px solid #716f64;border-bottom:1px solid #716f64;box-shadow:inset -1px -1px 0 #aca899"></div>
<div class="a" style="left:425px;top:923px;width:19px;text-align:center;font:11px/14px Liberation Sans,sans-serif;color:#aca899">F</div>
<div class="a" style="left:444px;top:919px;width:19px;height:22px;background:#efebe0;border-top:1px solid #fff;border-left:1px solid #fff;border-right:1px solid #716f64;border-bottom:1px solid #716f64;box-shadow:inset -1px -1px 0 #aca899"></div>
<div class="a" style="left:444px;top:923px;width:19px;text-align:center;font:11px/14px Liberation Sans,sans-serif;color:#aca899">-</div>
<div class="a" style="left:463px;top:919px;width:19px;height:22px;background:#efebe0;border-top:1px solid #fff;border-left:1px solid #fff;border-right:1px solid #716f64;border-bottom:1px solid #716f64;box-shadow:inset -1px -1px 0 #aca899"></div>
<div class="a" style="left:463px;top:923px;width:19px;text-align:center;font:11px/14px Liberation Sans,sans-serif;color:#aca899">.</div>
<div class="a" style="left:489px;top:915px;width:1px;height:28px;background:#aca899;"></div>
<div class="a" style="left:490px;top:915px;width:1px;height:28px;background:#fff;"></div>
<div class="a" style="left:497px;top:919px;width:22px;height:22px;background:#efebe0;border-top:1px solid #fff;border-left:1px solid #fff;border-right:1px solid #716f64;border-bottom:1px solid #716f64;box-shadow:inset -1px -1px 0 #aca899"></div>
<div class="a" style="left:519px;top:919px;width:22px;height:22px;background:#efebe0;border-top:1px solid #fff;border-left:1px solid #fff;border-right:1px solid #716f64;border-bottom:1px solid #716f64;box-shadow:inset -1px -1px 0 #aca899"></div>
<div class="a" style="left:541px;top:919px;width:22px;height:22px;background:#efebe0;border-top:1px solid #fff;border-left:1px solid #fff;border-right:1px solid #716f64;border-bottom:1px solid #716f64;box-shadow:inset -1px -1px 0 #aca899"></div>
<div class="a" style="left:563px;top:919px;width:25px;height:22px;background:#efebe0;border-top:1px solid #fff;border-left:1px solid #fff;border-right:1px solid #716f64;border-bottom:1px solid #716f64;box-shadow:inset -1px -1px 0 #aca899"></div>
<svg class="a" style="left:502px;top:923px" width="14" height="14"><path d="M11 2V9H3" stroke="#aca899" stroke-width="1.6" fill="none"/><path d="M5 6L2 9L5 12Z" fill="#aca899"/></svg>
<div class="a" style="left:519px;top:923px;width:22px;text-align:center;font:11px/14px Liberation Sans,sans-serif;color:#aca899;letter-spacing:-0.5px">Ins</div>
<div class="a" style="left:541px;top:923px;width:22px;text-align:center;font:11px/14px Liberation Sans,sans-serif;color:#aca899;letter-spacing:-0.5px">Del</div>
<div class="a" style="left:563px;top:923px;width:25px;text-align:center;font:11px/14px Liberation Sans,sans-serif;color:#aca899;letter-spacing:-0.5px">Esc</div>
<div class="a" style="left:594px;top:915px;width:1px;height:28px;background:#aca899;"></div>
<div class="a" style="left:595px;top:915px;width:1px;height:28px;background:#fff;"></div>
<div class="a" style="left:37px;top:948px;width:50px;height:16px;background:#efebe0;border-top:1px solid #fff;border-left:1px solid #fff;border-right:1px solid #aca899;border-bottom:1px solid #aca899;"></div>
<div class="a t " style="left:63px;top:951px;color:#000;font-size:12px;"></div>
<div class="a t " style="left:38px;top:954px;color:#1010b0;font-size:7px;font-weight:bold;"><span class="e" style="letter-spacing:0.00px">1</span></div>
<div class="a" style="left:87px;top:948px;width:50px;height:16px;background:#efebe0;border-top:1px solid #fff;border-left:1px solid #fff;border-right:1px solid #aca899;border-bottom:1px solid #aca899;"></div>
<div class="a t " style="left:113px;top:951px;color:#000;font-size:12px;"></div>
<div class="a t " style="left:88px;top:954px;color:#1010b0;font-size:7px;font-weight:bold;"><span class="e" style="letter-spacing:0.00px">2</span></div>
<div class="a" style="left:137px;top:948px;width:50px;height:16px;background:#efebe0;border-top:1px solid #fff;border-left:1px solid #fff;border-right:1px solid #aca899;border-bottom:1px solid #aca899;"></div>
<div class="a t " style="left:160px;top:951px;color:#000;font-size:12px;"><span class="e" style="letter-spacing:-1.00px">|</span></div>
<div class="a t " style="left:138px;top:954px;color:#1010b0;font-size:7px;font-weight:bold;"><span class="e" style="letter-spacing:0.00px">3</span></div>
<div class="a" style="left:187px;top:948px;width:50px;height:16px;background:#efebe0;border-top:1px solid #fff;border-left:1px solid #fff;border-right:1px solid #aca899;border-bottom:1px solid #aca899;"></div>
<div class="a t " style="left:195px;top:951px;color:#000;font-size:12px;"><span class="e" style="letter-spacing:-1.00px">-[OUT]</span></div>
<div class="a t " style="left:188px;top:954px;color:#1010b0;font-size:7px;font-weight:bold;"><span class="e" style="letter-spacing:0.00px">4</span></div>
<div class="a" style="left:237px;top:948px;width:50px;height:16px;background:#efebe0;border-top:1px solid #fff;border-left:1px solid #fff;border-right:1px solid #aca899;border-bottom:1px solid #aca899;"></div>
<div class="a t " style="left:248px;top:951px;color:#000;font-size:12px;"><span class="e" style="letter-spacing:-1.00px">TM/CT</span></div>
<div class="a t " style="left:238px;top:954px;color:#1010b0;font-size:7px;font-weight:bold;"><span class="e" style="letter-spacing:0.00px">5</span></div>
<div class="a" style="left:287px;top:948px;width:50px;height:16px;background:#efebe0;border-top:1px solid #fff;border-left:1px solid #fff;border-right:1px solid #aca899;border-bottom:1px solid #aca899;"></div>
<div class="a t " style="left:304px;top:951px;color:#000;font-size:12px;"><span class="e" style="letter-spacing:-1.00px">Fun</span></div>
<div class="a t " style="left:288px;top:954px;color:#1010b0;font-size:7px;font-weight:bold;"><span class="e" style="letter-spacing:0.00px">6</span></div>
<div class="a" style="left:337px;top:948px;width:50px;height:16px;background:#efebe0;border-top:1px solid #fff;border-left:1px solid #fff;border-right:1px solid #aca899;border-bottom:1px solid #aca899;"></div>
<div class="a t " style="left:363px;top:951px;color:#000;font-size:12px;"></div>
<div class="a t " style="left:338px;top:954px;color:#1010b0;font-size:7px;font-weight:bold;"><span class="e" style="letter-spacing:0.00px">7</span></div>
<div class="a" style="left:387px;top:948px;width:50px;height:16px;background:#efebe0;border-top:1px solid #fff;border-left:1px solid #fff;border-right:1px solid #aca899;border-bottom:1px solid #aca899;"></div>
<div class="a t " style="left:398px;top:951px;color:#000;font-size:12px;"><span class="e" style="letter-spacing:-1.00px">NOT /</span></div>
<div class="a t " style="left:388px;top:954px;color:#1010b0;font-size:7px;font-weight:bold;"><span class="e" style="letter-spacing:0.00px">8</span></div>
<div class="a" style="left:437px;top:948px;width:50px;height:16px;background:#efebe0;border-top:1px solid #fff;border-left:1px solid #fff;border-right:1px solid #aca899;border-bottom:1px solid #aca899;"></div>
<div class="a t " style="left:448px;top:951px;color:#000;font-size:12px;"><span class="e" style="letter-spacing:-1.00px">INDEX</span></div>
<div class="a t " style="left:438px;top:954px;color:#1010b0;font-size:7px;font-weight:bold;"><span class="e" style="letter-spacing:0.00px">9</span></div>
<div class="a" style="left:491px;top:948px;width:50px;height:16px;background:#efebe0;border-top:1px solid #fff;border-left:1px solid #fff;border-right:1px solid #aca899;border-bottom:1px solid #aca899;"></div>
<div class="a t " style="left:499px;top:951px;color:#000;font-size:12px;"><span class="e" style="letter-spacing:-1.00px">[ICTL]</span></div>
<div class="a t " style="left:492px;top:954px;color:#1010b0;font-size:7px;font-weight:bold;"><span class="e" style="letter-spacing:-1.00px">11</span></div>
<div class="a" style="left:541px;top:948px;width:50px;height:16px;background:#efebe0;border-top:1px solid #fff;border-left:1px solid #fff;border-right:1px solid #aca899;border-bottom:1px solid #aca899;"></div>
<div class="a t " style="left:552px;top:951px;color:#000;font-size:12px;"><span class="e" style="letter-spacing:-1.00px">(MCE)</span></div>
<div class="a t " style="left:542px;top:954px;color:#1010b0;font-size:7px;font-weight:bold;"><span class="e" style="letter-spacing:-1.00px">12</span></div>
<div class="a" style="left:37px;top:965px;width:50px;height:16px;background:#efebe0;border-top:1px solid #fff;border-left:1px solid #fff;border-right:1px solid #aca899;border-bottom:1px solid #aca899;"></div>
<div class="a t " style="left:45px;top:968px;color:#000;font-size:12px;"><span class="e" style="letter-spacing:-1.00px">-&lt;SET&gt;</span></div>
<div class="a t " style="left:38px;top:971px;color:#1010b0;font-size:7px;font-weight:bold;"><span class="e" style="letter-spacing:0.00px">1</span></div>
<div class="a" style="left:87px;top:965px;width:50px;height:16px;background:#efebe0;border-top:1px solid #fff;border-left:1px solid #fff;border-right:1px solid #aca899;border-bottom:1px solid #aca899;"></div>
<div class="a t " style="left:89px;top:968px;color:#000;font-size:12px;"><span class="e" style="letter-spacing:-1.00px">-&lt;RESET&gt;</span></div>
<div class="a t " style="left:88px;top:971px;color:#1010b0;font-size:7px;font-weight:bold;"><span class="e" style="letter-spacing:0.00px">2</span></div>
<div class="a" style="left:137px;top:965px;width:50px;height:16px;background:#efebe0;border-top:1px solid #fff;border-left:1px solid #fff;border-right:1px solid #aca899;border-bottom:1px solid #aca899;"></div>
<div class="a t " style="left:142px;top:968px;color:#000;font-size:12px;"><span class="e" style="letter-spacing:-1.00px">(DF(/))</span></div>
<div class="a t " style="left:138px;top:971px;color:#1010b0;font-size:7px;font-weight:bold;"><span class="e" style="letter-spacing:0.00px">3</span></div>
<div class="a" style="left:187px;top:965px;width:50px;height:16px;background:#efebe0;border-top:1px solid #fff;border-left:1px solid #fff;border-right:1px solid #aca899;border-bottom:1px solid #aca899;"></div>
<div class="a t " style="left:198px;top:968px;color:#000;font-size:12px;"><span class="e" style="letter-spacing:-1.00px">(END)</span></div>
<div class="a t " style="left:188px;top:971px;color:#1010b0;font-size:7px;font-weight:bold;"><span class="e" style="letter-spacing:0.00px">4</span></div>
<div class="a" style="left:237px;top:965px;width:50px;height:16px;background:#efebe0;border-top:1px solid #fff;border-left:1px solid #fff;border-right:1px solid #aca899;border-bottom:1px solid #aca899;"></div>
<div class="a t " style="left:251px;top:968px;color:#000;font-size:12px;"><span class="c" style="width:24px">比较</span><svg class="a" style="left:0;top:-2px;overflow:visible" width="24" height="16" fill="#000" shape-rendering="crispEdges"><use href="#g57" x="0" y="0"/><use href="#g58" x="12" y="0"/></svg></div>
<div class="a t " style="left:238px;top:971px;color:#1010b0;font-size:7px;font-weight:bold;"><span class="e" style="letter-spacing:0.00px">5</span></div>
<div class="a" style="left:287px;top:965px;width:50px;height:16px;background:#efebe0;border-top:1px solid #fff;border-left:1px solid #fff;border-right:1px solid #aca899;border-bottom:1px solid #aca899;"></div>
<div class="a t " style="left:301px;top:968px;color:#000;font-size:12px;"><span class="e" style="letter-spacing:-1.00px">PFun</span></div>
<div class="a t " style="left:288px;top:971px;color:#1010b0;font-size:7px;font-weight:bold;"><span class="e" style="letter-spacing:0.00px">6</span></div>
<div class="a" style="left:337px;top:965px;width:50px;height:16px;background:#efebe0;border-top:1px solid #fff;border-left:1px solid #fff;border-right:1px solid #aca899;border-bottom:1px solid #aca899;"></div>
<div class="a t " style="left:363px;top:968px;color:#000;font-size:12px;"></div>
<div class="a t " style="left:338px;top:971px;color:#1010b0;font-size:7px;font-weight:bold;"><span class="e" style="letter-spacing:0.00px">7</span></div>
<div class="a" style="left:387px;top:965px;width:50px;height:16px;background:#efebe0;border-top:1px solid #fff;border-left:1px solid #fff;border-right:1px solid #aca899;border-bottom:1px solid #aca899;"></div>
<div class="a t " style="left:401px;top:968px;color:#000;font-size:12px;"><span class="e" style="letter-spacing:-1.00px">[</span><span class="c" style="width:12px">位</span><span class="e" style="letter-spacing:-1.00px">]</span><svg class="a" style="left:0;top:-2px;overflow:visible" width="24" height="16" fill="#000" shape-rendering="crispEdges"><use href="#g59" x="6" y="0"/></svg></div>
<div class="a t " style="left:388px;top:971px;color:#1010b0;font-size:7px;font-weight:bold;"><span class="e" style="letter-spacing:0.00px">8</span></div>
<div class="a" style="left:437px;top:965px;width:50px;height:16px;background:#efebe0;border-top:1px solid #fff;border-left:1px solid #fff;border-right:1px solid #aca899;border-bottom:1px solid #aca899;"></div>
<div class="a t " style="left:451px;top:968px;color:#000;font-size:12px;"><span class="e" style="letter-spacing:-1.00px">[</span><span class="c" style="width:12px">字</span><span class="e" style="letter-spacing:-1.00px">]</span><svg class="a" style="left:0;top:-2px;overflow:visible" width="24" height="16" fill="#000" shape-rendering="crispEdges"><use href="#g60" x="6" y="0"/></svg></div>
<div class="a t " style="left:438px;top:971px;color:#1010b0;font-size:7px;font-weight:bold;"><span class="e" style="letter-spacing:0.00px">9</span></div>
<div class="a" style="left:491px;top:965px;width:50px;height:16px;background:#efebe0;border-top:1px solid #fff;border-left:1px solid #fff;border-right:1px solid #aca899;border-bottom:1px solid #aca899;"></div>
<div class="a t " style="left:502px;top:968px;color:#000;font-size:12px;"><span class="c" style="width:24px">指令</span><span class="e" style="letter-spacing:-1.00px">1</span><svg class="a" style="left:0;top:-2px;overflow:visible" width="30" height="16" fill="#000" shape-rendering="crispEdges"><use href="#g61" x="0" y="0"/><use href="#g62" x="12" y="0"/></svg></div>
<div class="a t " style="left:492px;top:971px;color:#1010b0;font-size:7px;font-weight:bold;"><span class="e" style="letter-spacing:-1.00px">11</span></div>
<div class="a" style="left:541px;top:965px;width:50px;height:16px;background:#efebe0;border-top:1px solid #fff;border-left:1px solid #fff;border-right:1px solid #aca899;border-bottom:1px solid #aca899;"></div>
<div class="a t " style="left:552px;top:968px;color:#000;font-size:12px;"><span class="c" style="width:24px">指令</span><span class="e" style="letter-spacing:-1.00px">2</span><svg class="a" style="left:0;top:-2px;overflow:visible" width="30" height="16" fill="#000" shape-rendering="crispEdges"><use href="#g61" x="0" y="0"/><use href="#g62" x="12" y="0"/></svg></div>
<div class="a t " style="left:542px;top:971px;color:#1010b0;font-size:7px;font-weight:bold;"><span class="e" style="letter-spacing:-1.00px">12</span></div>
<div class="a" style="left:37px;top:982px;width:50px;height:16px;background:#efebe0;border-top:1px solid #fff;border-left:1px solid #fff;border-right:1px solid #aca899;border-bottom:1px solid #aca899;"></div>
<div class="a t " style="left:45px;top:985px;color:#000;font-size:12px;"><span class="e" style="letter-spacing:-1.00px">PG</span><span class="c" style="width:24px">转换</span><svg class="a" style="left:0;top:-2px;overflow:visible" width="36" height="16" fill="#000" shape-rendering="crispEdges"><use href="#g63" x="12" y="0"/><use href="#g64" x="24" y="0"/></svg></div>
<div class="a t " style="left:38px;top:988px;color:#1010b0;font-size:7px;font-weight:bold;"><span class="e" style="letter-spacing:0.00px">1</span></div>
<div class="a" style="left:87px;top:982px;width:50px;height:16px;background:#efebe0;border-top:1px solid #fff;border-left:1px solid #fff;border-right:1px solid #aca899;border-bottom:1px solid #aca899;"></div>
<div class="a t " style="left:101px;top:985px;color:#000;font-size:12px;"><span class="c" style="width:24px">在线</span><svg class="a" style="left:0;top:-2px;overflow:visible" width="24" height="16" fill="#000" shape-rendering="crispEdges"><use href="#g23" x="0" y="0"/><use href="#g24" x="12" y="0"/></svg></div>
<div class="a t " style="left:88px;top:988px;color:#1010b0;font-size:7px;font-weight:bold;"><span class="e" style="letter-spacing:0.00px">2</span></div>
<div class="a" style="left:137px;top:982px;width:50px;height:16px;background:#efebe0;border-top:1px solid #fff;border-left:1px solid #fff;border-right:1px solid #aca899;border-bottom:1px solid #aca899;"></div>
<div class="a t " style="left:151px;top:985px;color:#000;font-size:12px;"><span class="c" style="width:24px">离线</span><svg class="a" style="left:0;top:-2px;overflow:visible" width="24" height="16" fill="#000" shape-rendering="crispEdges"><use href="#g65" x="0" y="0"/><use href="#g24" x="12" y="0"/></svg></div>
<div class="a t " style="left:138px;top:988px;color:#1010b0;font-size:7px;font-weight:bold;"><span class="e" style="letter-spacing:0.00px">3</span></div>
<div class="a" style="left:187px;top:982px;width:50px;height:16px;background:#efebe0;border-top:1px solid #fff;border-left:1px solid #fff;border-right:1px solid #aca899;border-bottom:1px solid #aca899;"></div>
<div class="a t " style="left:201px;top:985px;color:#000;font-size:12px;"><span class="c" style="width:24px">关闭</span><svg class="a" style="left:0;top:-2px;overflow:visible" width="24" height="16" fill="#000" shape-rendering="crispEdges"><use href="#g66" x="0" y="0"/><use href="#g67" x="12" y="0"/></svg></div>
<div class="a t " style="left:188px;top:988px;color:#1010b0;font-size:7px;font-weight:bold;"><span class="e" style="letter-spacing:0.00px">4</span></div>
<div class="a" style="left:237px;top:982px;width:50px;height:16px;background:#efebe0;border-top:1px solid #fff;border-left:1px solid #fff;border-right:1px solid #aca899;border-bottom:1px solid #aca899;"></div>
<div class="a t " style="left:251px;top:985px;color:#000;font-size:12px;"><span class="c" style="width:24px">查找</span><svg class="a" style="left:0;top:-2px;overflow:visible" width="24" height="16" fill="#000" shape-rendering="crispEdges"><use href="#g17" x="0" y="0"/><use href="#g18" x="12" y="0"/></svg></div>
<div class="a t " style="left:238px;top:988px;color:#1010b0;font-size:7px;font-weight:bold;"><span class="e" style="letter-spacing:0.00px">5</span></div>
<div class="a" style="left:287px;top:982px;width:50px;height:16px;background:#efebe0;border-top:1px solid #fff;border-left:1px solid #fff;border-right:1px solid #aca899;border-bottom:1px solid #aca899;"></div>
<div class="a t " style="left:298px;top:985px;color:#000;font-size:12px;"><span class="c" style="width:12px">次</span><span class="e" style="letter-spacing:-1.00px">Win</span><svg class="a" style="left:0;top:-2px;overflow:visible" width="30" height="16" fill="#000" shape-rendering="crispEdges"><use href="#g51" x="0" y="0"/></svg></div>
<div class="a t " style="left:288px;top:988px;color:#1010b0;font-size:7px;font-weight:bold;"><span class="e" style="letter-spacing:0.00px">6</span></div>
<div class="a" style="left:337px;top:982px;width:50px;height:16px;background:#efebe0;border-top:1px solid #fff;border-left:1px solid #fff;border-right:1px solid #aca899;border-bottom:1px solid #aca899;"></div>
<div class="a t " style="left:345px;top:985px;color:#000;font-size:12px;"><span class="c" style="width:24px">监控</span><span class="e" style="letter-spacing:-1.00px">Go</span><svg class="a" style="left:0;top:-2px;overflow:visible" width="36" height="16" fill="#000" shape-rendering="crispEdges"><use href="#g40" x="0" y="0"/><use href="#g38" x="12" y="0"/></svg></div>
<div class="a t " style="left:338px;top:988px;color:#1010b0;font-size:7px;font-weight:bold;"><span class="e" style="letter-spacing:0.00px">7</span></div>
<div class="a" style="left:387px;top:982px;width:50px;height:16px;background:#efebe0;border-top:1px solid #fff;border-left:1px solid #fff;border-right:1px solid #aca899;border-bottom:1px solid #aca899;"></div>
<div class="a t " style="left:401px;top:985px;color:#000;font-size:12px;"><span class="c" style="width:24px">状态</span><svg class="a" style="left:0;top:-2px;overflow:visible" width="24" height="16" fill="#000" shape-rendering="crispEdges"><use href="#g68" x="0" y="0"/><use href="#g69" x="12" y="0"/></svg></div>
<div class="a t " style="left:388px;top:988px;color:#1010b0;font-size:7px;font-weight:bold;"><span class="e" style="letter-spacing:0.00px">8</span></div>
<div class="a" style="left:437px;top:982px;width:50px;height:16px;background:#efebe0;border-top:1px solid #fff;border-left:1px solid #fff;border-right:1px solid #aca899;border-bottom:1px solid #aca899;"></div>
<div class="a t " style="left:439px;top:985px;color:#000;font-size:12px;"><span class="e" style="letter-spacing:-1.00px">Run/Prog</span></div>
<div class="a t " style="left:438px;top:988px;color:#1010b0;font-size:7px;font-weight:bold;"><span class="e" style="letter-spacing:0.00px">9</span></div>
<div class="a" style="left:491px;top:982px;width:50px;height:16px;background:#efebe0;border-top:1px solid #fff;border-left:1px solid #fff;border-right:1px solid #aca899;border-bottom:1px solid #aca899;"></div>
<div class="a t " style="left:496px;top:985px;color:#000;font-size:12px;"><span class="e" style="letter-spacing:-1.00px">PLC</span><span class="c" style="width:24px">读取</span><svg class="a" style="left:0;top:-2px;overflow:visible" width="42" height="16" fill="#000" shape-rendering="crispEdges"><use href="#g70" x="18" y="0"/><use href="#g71" x="30" y="0"/></svg></div>
<div class="a t " style="left:492px;top:988px;color:#1010b0;font-size:7px;font-weight:bold;"><span class="e" style="letter-spacing:-1.00px">11</span></div>
<div class="a" style="left:541px;top:982px;width:50px;height:16px;background:#efebe0;border-top:1px solid #fff;border-left:1px solid #fff;border-right:1px solid #aca899;border-bottom:1px solid #aca899;"></div>
<div class="a t " style="left:546px;top:985px;color:#000;font-size:12px;"><span class="e" style="letter-spacing:-1.00px">PLC</span><span class="c" style="width:24px">写入</span><svg class="a" style="left:0;top:-2px;overflow:visible" width="42" height="16" fill="#000" shape-rendering="crispEdges"><use href="#g72" x="18" y="0"/><use href="#g73" x="30" y="0"/></svg></div>
<div class="a t " style="left:542px;top:988px;color:#1010b0;font-size:7px;font-weight:bold;"><span class="e" style="letter-spacing:-1.00px">12</span></div>
<div class="a t " style="left:4px;top:968px;color:#000;font-size:12px;"><span class="e" style="letter-spacing:-1.00px">Shift</span></div>
<div class="a t " style="left:10px;top:985px;color:#000;font-size:12px;"><span class="e" style="letter-spacing:-1.00px">Ctrl</span></div>
<svg class="a" style="left:0;top:940px" width="600" height="45" shape-rendering="crispEdges"><rect x="47" y="15" width="10" height="1" fill="#000"/><rect x="57" y="10" width="1" height="11" fill="#000"/><rect x="67" y="10" width="1" height="11" fill="#000"/><rect x="67" y="15" width="11" height="1" fill="#000"/><rect x="99" y="10" width="1" height="6" fill="#000"/><rect x="99" y="15" width="8" height="1" fill="#000"/><rect x="107" y="10" width="1" height="11" fill="#000"/><rect x="117" y="10" width="1" height="11" fill="#000"/><rect x="117" y="15" width="8" height="1" fill="#000"/><rect x="125" y="10" width="1" height="6" fill="#000"/><rect x="341" y="15" width="43" height="1" fill="#000"/><rect x="355" y="28" width="1" height="10" fill="#000"/><path d="M352 31L355.5 27L359 31" stroke="#000" fill="none" shape-rendering="auto"/><rect x="367" y="27" width="1" height="10" fill="#000"/><path d="M364 34L367.5 38L371 34" stroke="#000" fill="none" shape-rendering="auto"/></svg>
<div class="a" style="left:0px;top:998px;width:1400px;height:1px;background:#aca899;"></div>
<div class="a" style="left:0px;top:999px;width:1400px;height:1px;background:#fff;"></div>
<div class="a t " style="left:2px;top:1006px;color:#000;font-size:12px;"><span class="c" style="width:24px">就绪</span><svg class="a" style="left:0;top:-2px;overflow:visible" width="24" height="16" fill="#000" shape-rendering="crispEdges"><use href="#g74" x="0" y="0"/><use href="#g75" x="12" y="0"/></svg></div>
<div class="a" style="left:1238px;top:1003px;width:14px;height:16px;background:#fff;border:1px solid #a0a0a0;"></div>
<div class="a t " style="left:1239px;top:1007px;color:#000;font-size:12px;"><span class="c" style="width:12px">矩</span><svg class="a" style="left:0;top:-2px;overflow:visible" width="12" height="16" fill="#000" shape-rendering="crispEdges"><use href="#g76" x="0" y="0"/></svg></div>
<div class="a" style="left:1252px;top:1000px;width:148px;height:19px;background:#f6f8fc;"></div>
<svg class="a" style="left:1253px;top:1000px" width="147" height="19"><g transform="rotate(-10 10 9)"><rect x="2.5" y="1.5" width="15" height="15" rx="3.5" fill="#e2501e" stroke="#f08050"/></g><path d="M13.5 5.5Q12 4 9.5 4.5Q6.5 5 7 7.5Q7.5 9 10 9.5Q13 10 12.5 12.5Q12 14.5 9 14Q6.5 13.5 6 12" stroke="#fff" stroke-width="2.2" fill="none"/><g fill="#4a7cc0"><rect x="24" y="5" width="12" height="2"/><rect x="24" y="5" width="2" height="7"/><rect x="34" y="5" width="2" height="7"/><rect x="24" y="10" width="12" height="2"/><rect x="29" y="1" width="2" height="15"/></g><path d="M50 2.5A6.5 6.5 0 1 0 55 12.5A5.5 5.5 0 0 1 50 2.5Z" fill="#4a80c8"/><circle cx="69" cy="6.5" r="1.8" fill="none" stroke="#4a7cc0" stroke-width="1.2"/><path d="M75 11.5L73.5 15" stroke="#4a7cc0" stroke-width="2.2"/><rect x="82.5" y="3.5" width="16" height="11" fill="#fff" stroke="#4a7cc0" stroke-width="1.6"/><g fill="#4a7cc0"><rect x="84" y="6" width="13" height="1"/><rect x="84" y="9" width="13" height="1"/><rect x="84" y="12" width="13" height="1"/><rect x="87" y="5" width="1" height="9"/><rect x="90" y="5" width="1" height="9"/><rect x="93" y="5" width="1" height="9"/></g><circle cx="111" cy="6" r="3" fill="#a0a0a0"/><path d="M106 15Q106 10 111 10Q116 10 116 15Z" fill="#a0a0a0"/><path d="M126 14L133 7" stroke="#4a7cc0" stroke-width="3"/><path d="M131 4A3.5 3.5 0 1 0 137 8L134.5 7.5L133.5 5Z" fill="#4a7cc0"/></svg>
<div class="a" style="left:0px;top:1020px;width:1400px;height:30px;background:linear-gradient(#3168d5 0,#4993e6 2px,#2157d7 5px,#2663e0 18px,#2055d0 27px,#1941a5 30px);"></div>
<div class="a" style="left:0;top:1020px;width:97px;height:30px;border-radius:0 10px 10px 0;background:linear-gradient(#3a8a38 0,#6cc068 2px,#4aa846 6px,#3c9a3a 16px,#3a9438 24px,#2a7a28 30px);box-shadow:1px 0 2px #1a3a8a"></div>
<svg class="a" style="left:10px;top:1026px" width="20" height="18"><path d="M2 3Q5 1 9 3L8 9Q4 7 1 9Z" fill="#f05a28"/><path d="M10 3Q14 5 18 3L17 9Q13 11 9 9Z" fill="#7cbb00"/><path d="M1 10Q4 8 8 10L7 16Q3 14 0 16Z" fill="#00a1f1"/><path d="M9 10Q13 12 17 10L16 16Q12 18 8 16Z" fill="#ffbb00"/></svg>
<div class="a t " style="left:38px;top:1031px;color:#fff;font-size:12px;transform:skewX(-14deg) scale(1.06,1.1);transform-origin:0 12px;-webkit-text-stroke:0;"><span class="c" style="width:38px">开始</span><svg class="a" style="left:0;top:-4px;overflow:visible" width="38" height="20" fill="#fff" shape-rendering="crispEdges"><use href="#g77" x="0" y="0"/><use href="#g78" x="19" y="0"/></svg></div>
<svg class="a" style="left:108px;top:1026px" width="18" height="17"><rect x="1.5" y="1.5" width="14" height="13" rx="3" fill="#cfe8ff" stroke="#1850b0"/><path d="M5 12L12 5M9 4H12V7" stroke="#1040a0" stroke-width="1.6" fill="none"/><path d="M4 5Q4 3 6 3" stroke="#3070d0" fill="none"/></svg>
<svg class="a" style="left:131px;top:1026px" width="18" height="17" shape-rendering="crispEdges"><rect x="1" y="1" width="15" height="15" fill="#2050a0"/><rect x="2" y="2" width="13" height="13" fill="#a8d8f0"/><rect x="4" y="4" width="9" height="6" fill="#fff"/><rect x="5" y="11" width="7" height="2" fill="#6090c0"/><rect x="1" y="1" width="2" height="2" fill="#fff"/><rect x="14" y="14" width="2" height="2" fill="#fff"/></svg>
<svg class="a" style="left:154px;top:1026px" width="18" height="17"><ellipse cx="8.5" cy="9" rx="7.5" ry="6.5" fill="#3080e0" stroke="#fff" stroke-width="1"/><ellipse cx="8.5" cy="10" rx="5" ry="3.5" fill="#ffe8b0"/><circle cx="6.5" cy="9.5" r="1" fill="#000"/><circle cx="10.5" cy="9.5" r="1" fill="#000"/><path d="M2 13Q8.5 17 15 13" stroke="#fff" stroke-width="1.5" fill="none"/></svg>
<div class="a t " style="left:183px;top:1025px;color:#c0d8ff;font-size:12px;"><span class="e" style="letter-spacing:-1.00px">»</span></div>
<div class="a" style="left:198px;top:1024px;width:160px;height:23px;border-radius:3px;background:#1e4fb8;border:1px solid #143c96;box-shadow:inset 1px 1px 1px #0d2e80"></div>
<svg class="a" style="left:209px;top:1028px" width="16" height="16" viewBox="0 0 16 16">
<rect x="0" y="0" width="16" height="16" fill="#0000c0"/>
<rect x="1" y="1" width="13" height="14" fill="#101010"/>
<rect x="1" y="1" width="12" height="13" fill="#b8b0b0"/>
<rect x="2" y="2" width="2" height="11" fill="#d04040"/><rect x="5" y="3" width="2" height="10" fill="#a03030"/>
<rect x="8" y="2" width="2" height="11" fill="#e0e0e0"/><rect x="10" y="3" width="2" height="9" fill="#c04848"/>
</svg>
<div class="a t " style="left:229px;top:1030px;color:#fff;font-size:12px;"><span class="e" style="letter-spacing:-1.00px">FPWIN GR - [</span><span class="c" style="width:24px">中断</span><span class="e" style="letter-spacing:-1.00px">...</span><svg class="a" style="left:0;top:-2px;overflow:visible" width="114" height="16" fill="#fff" shape-rendering="crispEdges"><use href="#g43" x="72" y="0"/><use href="#g44" x="84" y="0"/></svg></div>
<div class="a" style="left:359px;top:1024px;width:156px;height:23px;border-radius:3px;background:linear-gradient(#4c8df5,#3a7cf0 3px,#3378ee 20px,#2a68da);border:1px solid #2a5cc8"></div>
<svg class="a" style="left:368px;top:1027px" width="18" height="16"><path d="M1.5 3.5H6.5L8 5H15.5V13.5H1.5Z" fill="#e8b830" stroke="#a87810"/><path d="M1.5 13.5L3.5 7.5H17L15.5 13.5Z" fill="#ffe070" stroke="#b88818"/></svg>
<div class="a t " style="left:388px;top:1030px;color:#fff;font-size:12px;"><span class="e" style="letter-spacing:-1.00px">E:\</span><span class="c" style="width:24px">资料</span><svg class="a" style="left:0;top:-2px;overflow:visible" width="42" height="16" fill="#fff" shape-rendering="crispEdges"><use href="#g79" x="18" y="0"/><use href="#g80" x="30" y="0"/></svg></div>
<div class="a" style="left:519px;top:1024px;width:156px;height:23px;border-radius:3px;background:linear-gradient(#4c8df5,#3a7cf0 3px,#3378ee 20px,#2a68da);border:1px solid #2a5cc8"></div>
<svg class="a" style="left:529px;top:1026px" width="16" height="18"><path d="M1.5 1.5H10L14.5 6V16.5H1.5Z" fill="#fff" stroke="#909090"/><path d="M10 1.5V6H14.5" fill="#ddd" stroke="#909090"/><path d="M3 14Q6 6 7 3Q8 6 12 11Q7 10 3 14Z" fill="none" stroke="#d01818" stroke-width="1.8"/><rect x="0" y="2" width="9" height="4" fill="#d01818"/></svg>
<div class="a t " style="left:548px;top:1030px;color:#fff;font-size:12px;"><span class="e" style="letter-spacing:-1.00px">fp0r_users_f475-...</span></div>
<div class="a" style="left:679px;top:1024px;width:156px;height:23px;border-radius:3px;background:linear-gradient(#4c8df5,#3a7cf0 3px,#3378ee 20px,#2a68da);border:1px solid #2a5cc8"></div>
<svg class="a" style="left:688px;top:1027px" width="18" height="16"><path d="M1.5 3.5H6.5L8 5H15.5V13.5H1.5Z" fill="#e8b830" stroke="#a87810"/><path d="M1.5 13.5L3.5 7.5H17L15.5 13.5Z" fill="#ffe070" stroke="#b88818"/></svg>
<div class="a t " style="left:708px;top:1030px;color:#fff;font-size:12px;"><span class="e" style="letter-spacing:-1.00px">E:\</span><span class="c" style="width:24px">资料</span><span class="e" style="letter-spacing:-1.00px">\fpx</span><svg class="a" style="left:0;top:-2px;overflow:visible" width="66" height="16" fill="#fff" shape-rendering="crispEdges"><use href="#g79" x="18" y="0"/><use href="#g80" x="30" y="0"/></svg></div>
<div class="a" style="left:1342px;top:1020px;width:58px;height:30px;background:linear-gradient(#1ca0f0 0,#18a0f0 2px,#0f8ce8 6px,#1090e8 26px,#0a78d8 30px);border-left:1px solid #1040a0"></div>
<div class="a" style="left:1333px;top:1026px;width:17px;height:17px;border-radius:50%;background:radial-gradient(circle at 40% 40%,#6ab8ff,#1a70d8);border:1px solid #80c0ff"></div>
<svg class="a" style="left:1337px;top:1029px" width="10" height="11"><path d="M7 1L3 5.5L7 10" stroke="#fff" stroke-width="2.2" fill="none"/></svg>
<div class="a t " style="left:1360px;top:1030px;color:#fff;font-size:12px;"><span class="e" style="letter-spacing:-1.00px">0:15</span></div>
<div class="a" style="left:385px;top:348px;width:630px;height:325px;border-radius:7px 7px 0 0;background:#0842d8;"></div>
<div class="a" style="left:385px;top:348px;width:630px;height:29px;border-radius:7px 7px 0 0;background:linear-gradient(#0048b8 0,#0048b8 1px,#3399ff 1px,#3399ff 3px,#0a62f0 4px,#0058e8 6px,#0050e0 12px,#0050e5 16px,#0058f8 19px,#0066f0 22px,#0066ff 26px,#0044c8 27px,#002a90 29px)"></div>
<div class="a" style="left:388px;top:377px;width:624px;height:293px;background:#efebe0;"></div>
<div class="a" style="left:388px;top:377px;width:624px;height:1px;background:#e4eeff;"></div>
<div class="a t " style="left:392px;top:360px;color:#fff;font-size:13px;font-weight:bold;"><span class="e" style="letter-spacing:0.00px">PLC</span><span class="c" style="width:98px">系统寄存器设置</span><span class="e" style="letter-spacing:0.00px"> - </span><span class="c" style="width:56px">中断测试</span><span class="e" style="letter-spacing:0.00px">.fp</span><svg class="a" style="left:0;top:-2px;overflow:visible" width="226" height="16" fill="#fff" shape-rendering="crispEdges"><use href="#g81" x="24" y="0"/><use href="#g82" x="38" y="0"/><use href="#g83" x="52" y="0"/><use href="#g84" x="66" y="0"/><use href="#g85" x="80" y="0"/><use href="#g86" x="94" y="0"/><use href="#g87" x="108" y="0"/><use href="#g0" x="146" y="0"/><use href="#g1" x="160" y="0"/><use href="#g2" x="174" y="0"/><use href="#g3" x="188" y="0"/></svg></div>
<div class="a" style="left:990px;top:353px;width:21px;height:21px;border:1px solid #fff;border-radius:3px;background:linear-gradient(135deg,#e88a68,#d84a20 50%,#c83810)"><svg class="a" style="left:4px;top:4px" width="12" height="12"><path d="M1.5 1.5L10.5 10.5M10.5 1.5L1.5 10.5" stroke="#fff" stroke-width="2"/></svg></div>
<div class="a" style="left:395px;top:389px;width:205px;height:239px;background:#fff;border-top:1px solid #aca899;border-left:1px solid #aca899;border-right:1px solid #fff;border-bottom:1px solid #fff;box-shadow:inset 1px 1px 0 #716f64"></div>
<div class="a t " style="left:397px;top:392px;color:#000;font-size:12px;"><span class="c" style="width:24px">保持</span><span class="e" style="letter-spacing:-1.00px">/</span><span class="c" style="width:36px">非保持</span><span class="e" style="letter-spacing:-1.00px">1</span><svg class="a" style="left:0;top:-2px;overflow:visible" width="72" height="16" fill="#000" shape-rendering="crispEdges"><use href="#g88" x="0" y="0"/><use href="#g89" x="12" y="0"/><use href="#g90" x="30" y="0"/><use href="#g88" x="42" y="0"/><use href="#g89" x="54" y="0"/></svg></div>
<div class="a t " style="left:397px;top:404px;color:#000;font-size:12px;"><span class="c" style="width:24px">保持</span><span class="e" style="letter-spacing:-1.00px">/</span><span class="c" style="width:36px">非保持</span><span class="e" style="letter-spacing:-1.00px">2</span><svg class="a" style="left:0;top:-2px;overflow:visible" width="72" height="16" fill="#000" shape-rendering="crispEdges"><use href="#g88" x="0" y="0"/><use href="#g89" x="12" y="0"/><use href="#g90" x="30" y="0"/><use href="#g88" x="42" y="0"/><use href="#g89" x="54" y="0"/></svg></div>
<div class="a t " style="left:397px;top:416px;color:#000;font-size:12px;"><span class="c" style="width:60px">异常时运行</span><svg class="a" style="left:0;top:-2px;overflow:visible" width="60" height="16" fill="#000" shape-rendering="crispEdges"><use href="#g91" x="0" y="0"/><use href="#g92" x="12" y="0"/><use href="#g93" x="24" y="0"/><use href="#g94" x="36" y="0"/><use href="#g54" x="48" y="0"/></svg></div>
<div class="a t " style="left:397px;top:428px;color:#000;font-size:12px;"><span class="c" style="width:48px">时间设置</span><svg class="a" style="left:0;top:-2px;overflow:visible" width="48" height="16" fill="#000" shape-rendering="crispEdges"><use href="#g93" x="0" y="0"/><use href="#g95" x="12" y="0"/><use href="#g96" x="24" y="0"/><use href="#g97" x="36" y="0"/></svg></div>
<div class="a t " style="left:397px;top:440px;color:#000;font-size:12px;"><span class="e" style="letter-spacing:-1.00px">PC-link W0-0</span></div>
<div class="a t " style="left:397px;top:452px;color:#000;font-size:12px;"><span class="e" style="letter-spacing:-1.00px">PC-link W0-1</span></div>
<div class="a t " style="left:397px;top:464px;color:#000;font-size:12px;"><span class="c" style="width:84px">主单元输入设置</span><span class="e" style="letter-spacing:-1.00px">1(HSC)</span><svg class="a" style="left:0;top:-2px;overflow:visible" width="120" height="16" fill="#000" shape-rendering="crispEdges"><use href="#g98" x="0" y="0"/><use href="#g99" x="12" y="0"/><use href="#g100" x="24" y="0"/><use href="#g101" x="36" y="0"/><use href="#g73" x="48" y="0"/><use href="#g96" x="60" y="0"/><use href="#g97" x="72" y="0"/></svg></div>
<div class="a t " style="left:397px;top:476px;color:#000;font-size:12px;"><span class="c" style="width:84px">主单元输入设置</span><span class="e" style="letter-spacing:-1.00px">2(HSC/PLS)</span><svg class="a" style="left:0;top:-2px;overflow:visible" width="144" height="16" fill="#000" shape-rendering="crispEdges"><use href="#g98" x="0" y="0"/><use href="#g99" x="12" y="0"/><use href="#g100" x="24" y="0"/><use href="#g101" x="36" y="0"/><use href="#g73" x="48" y="0"/><use href="#g96" x="60" y="0"/><use href="#g97" x="72" y="0"/></svg></div>
<div class="a t " style="left:397px;top:488px;color:#000;font-size:12px;"><span class="c" style="width:84px">主单元输出设置</span><span class="e" style="letter-spacing:-1.00px">(PLS/PWM)</span><svg class="a" style="left:0;top:-2px;overflow:visible" width="138" height="16" fill="#000" shape-rendering="crispEdges"><use href="#g98" x="0" y="0"/><use href="#g99" x="12" y="0"/><use href="#g100" x="24" y="0"/><use href="#g101" x="36" y="0"/><use href="#g102" x="48" y="0"/><use href="#g96" x="60" y="0"/><use href="#g97" x="72" y="0"/></svg></div>
<div class="a" style="left:397px;top:498px;width:201px;height:12px;background:#316ac5;"></div>
<div class="a t " style="left:397px;top:500px;color:#fff;font-size:12px;"><span class="c" style="width:24px">中断</span><span class="e" style="letter-spacing:-1.00px">/</span><span class="c" style="width:72px">脉冲捕捉设置</span><svg class="a" style="left:0;top:-2px;overflow:visible" width="102" height="16" fill="#fff" shape-rendering="crispEdges"><use href="#g43" x="0" y="0"/><use href="#g44" x="12" y="0"/><use href="#g103" x="30" y="0"/><use href="#g104" x="42" y="0"/><use href="#g105" x="54" y="0"/><use href="#g106" x="66" y="0"/><use href="#g96" x="78" y="0"/><use href="#g97" x="90" y="0"/></svg></div>
<div class="a t " style="left:397px;top:512px;color:#000;font-size:12px;"><span class="c" style="width:84px">中断触发沿设置</span><svg class="a" style="left:0;top:-2px;overflow:visible" width="84" height="16" fill="#000" shape-rendering="crispEdges"><use href="#g43" x="0" y="0"/><use href="#g44" x="12" y="0"/><use href="#g107" x="24" y="0"/><use href="#g108" x="36" y="0"/><use href="#g109" x="48" y="0"/><use href="#g96" x="60" y="0"/><use href="#g97" x="72" y="0"/></svg></div>
<div class="a t " style="left:397px;top:524px;color:#000;font-size:12px;"><span class="e" style="letter-spacing:-1.00px">CPU</span><span class="c" style="width:96px">输入时间常数设置</span><span class="e" style="letter-spacing:-1.00px">1</span><svg class="a" style="left:0;top:-2px;overflow:visible" width="120" height="16" fill="#000" shape-rendering="crispEdges"><use href="#g101" x="18" y="0"/><use href="#g73" x="30" y="0"/><use href="#g93" x="42" y="0"/><use href="#g95" x="54" y="0"/><use href="#g92" x="66" y="0"/><use href="#g110" x="78" y="0"/><use href="#g96" x="90" y="0"/><use href="#g97" x="102" y="0"/></svg></div>
<div class="a t " style="left:397px;top:536px;color:#000;font-size:12px;"><span class="e" style="letter-spacing:-1.00px">CPU</span><span class="c" style="width:96px">输入时间常数设置</span><span class="e" style="letter-spacing:-1.00px">2</span><svg class="a" style="left:0;top:-2px;overflow:visible" width="120" height="16" fill="#000" shape-rendering="crispEdges"><use href="#g101" x="18" y="0"/><use href="#g73" x="30" y="0"/><use href="#g93" x="42" y="0"/><use href="#g95" x="54" y="0"/><use href="#g92" x="66" y="0"/><use href="#g110" x="78" y="0"/><use href="#g96" x="90" y="0"/><use href="#g97" x="102" y="0"/></svg></div>
<div class="a t " style="left:397px;top:548px;color:#000;font-size:12px;"><span class="e" style="letter-spacing:-1.00px">CPU</span><span class="c" style="width:96px">输入时间常数设置</span><span class="e" style="letter-spacing:-1.00px">3</span><svg class="a" style="left:0;top:-2px;overflow:visible" width="120" height="16" fill="#000" shape-rendering="crispEdges"><use href="#g101" x="18" y="0"/><use href="#g73" x="30" y="0"/><use href="#g93" x="42" y="0"/><use href="#g95" x="54" y="0"/><use href="#g92" x="66" y="0"/><use href="#g110" x="78" y="0"/><use href="#g96" x="90" y="0"/><use href="#g97" x="102" y="0"/></svg></div>
<div class="a t " style="left:397px;top:560px;color:#000;font-size:12px;"><span class="e" style="letter-spacing:-1.00px">CPU</span><span class="c" style="width:96px">输入时间常数设置</span><span class="e" style="letter-spacing:-1.00px">4</span><svg class="a" style="left:0;top:-2px;overflow:visible" width="120" height="16" fill="#000" shape-rendering="crispEdges"><use href="#g101" x="18" y="0"/><use href="#g73" x="30" y="0"/><use href="#g93" x="42" y="0"/><use href="#g95" x="54" y="0"/><use href="#g92" x="66" y="0"/><use href="#g110" x="78" y="0"/><use href="#g96" x="90" y="0"/><use href="#g97" x="102" y="0"/></svg></div>
<div class="a t " style="left:397px;top:572px;color:#000;font-size:12px;"><span class="c" style="width:60px">编程口设置</span><svg class="a" style="left:0;top:-2px;overflow:visible" width="60" height="16" fill="#000" shape-rendering="crispEdges"><use href="#g13" x="0" y="0"/><use href="#g111" x="12" y="0"/><use href="#g32" x="24" y="0"/><use href="#g96" x="36" y="0"/><use href="#g97" x="48" y="0"/></svg></div>
<div class="a t " style="left:397px;top:584px;color:#000;font-size:12px;"><span class="e" style="letter-spacing:-1.00px">COM1</span><span class="c" style="width:36px">口设置</span><svg class="a" style="left:0;top:-2px;overflow:visible" width="60" height="16" fill="#000" shape-rendering="crispEdges"><use href="#g32" x="24" y="0"/><use href="#g96" x="36" y="0"/><use href="#g97" x="48" y="0"/></svg></div>
<div class="a t " style="left:397px;top:596px;color:#000;font-size:12px;"><span class="e" style="letter-spacing:-1.00px">COM2</span><span class="c" style="width:36px">口设置</span><svg class="a" style="left:0;top:-2px;overflow:visible" width="60" height="16" fill="#000" shape-rendering="crispEdges"><use href="#g32" x="24" y="0"/><use href="#g96" x="36" y="0"/><use href="#g97" x="48" y="0"/></svg></div>
<div class="a" style="left:604px;top:388px;width:401px;height:240px;border:1px solid #aca899;box-shadow:inset 1px 1px 0 #fff,1px 1px 0 #fff"></div>
<div class="a" style="left:615px;top:409px;width:364px;height:89px;border:1px solid #d0d0bf;border-radius:3px"></div>
<div class="a" style="left:622px;top:403px;width:144px;height:12px;background:#efebe0;"></div>
<div class="a t " style="left:624px;top:405px;color:#000;font-size:12px;"><span class="e" style="letter-spacing:-1.00px">No.403 </span><span class="c" style="width:96px">脉冲捕捉输入设置</span><svg class="a" style="left:0;top:-2px;overflow:visible" width="138" height="16" fill="#000" shape-rendering="crispEdges"><use href="#g103" x="42" y="0"/><use href="#g104" x="54" y="0"/><use href="#g105" x="66" y="0"/><use href="#g106" x="78" y="0"/><use href="#g101" x="90" y="0"/><use href="#g73" x="102" y="0"/><use href="#g96" x="114" y="0"/><use href="#g97" x="126" y="0"/></svg></div>
<div class="a" style="left:615px;top:516px;width:364px;height:92px;border:1px solid #d0d0bf;border-radius:3px"></div>
<div class="a" style="left:622px;top:510px;width:132px;height:12px;background:#efebe0;"></div>
<div class="a t " style="left:624px;top:512px;color:#000;font-size:12px;"><span class="e" style="letter-spacing:-1.00px">No.404 </span><span class="c" style="width:84px">中断输入的设置</span><svg class="a" style="left:0;top:-2px;overflow:visible" width="126" height="16" fill="#000" shape-rendering="crispEdges"><use href="#g43" x="42" y="0"/><use href="#g44" x="54" y="0"/><use href="#g101" x="66" y="0"/><use href="#g73" x="78" y="0"/><use href="#g112" x="90" y="0"/><use href="#g96" x="102" y="0"/><use href="#g97" x="114" y="0"/></svg></div>
<div class="a t " style="left:666px;top:442px;color:#000;font-size:12px;"><span class="c" style="width:60px">主单元输入</span><svg class="a" style="left:0;top:-2px;overflow:visible" width="60" height="16" fill="#000" shape-rendering="crispEdges"><use href="#g98" x="0" y="0"/><use href="#g99" x="12" y="0"/><use href="#g100" x="24" y="0"/><use href="#g101" x="36" y="0"/><use href="#g73" x="48" y="0"/></svg></div>
<div class="a t " style="left:729px;top:478px;color:#000;font-size:12px;"><span class="c" style="width:180px">按下的触点被设置为脉冲捕捉输入</span><span class="e" style="letter-spacing:-1.00px">.</span><svg class="a" style="left:0;top:-2px;overflow:visible" width="186" height="16" fill="#000" shape-rendering="crispEdges"><use href="#g113" x="0" y="0"/><use href="#g114" x="12" y="0"/><use href="#g112" x="24" y="0"/><use href="#g107" x="36" y="0"/><use href="#g115" x="48" y="0"/><use href="#g116" x="60" y="0"/><use href="#g96" x="72" y="0"/><use href="#g97" x="84" y="0"/><use href="#g117" x="96" y="0"/><use href="#g103" x="108" y="0"/><use href="#g104" x="120" y="0"/><use href="#g105" x="132" y="0"/><use href="#g106" x="144" y="0"/><use href="#g101" x="156" y="0"/><use href="#g73" x="168" y="0"/></svg></div>
<div class="a t " style="left:666px;top:550px;color:#000;font-size:12px;"><span class="c" style="width:60px">主单元输入</span><svg class="a" style="left:0;top:-2px;overflow:visible" width="60" height="16" fill="#000" shape-rendering="crispEdges"><use href="#g98" x="0" y="0"/><use href="#g99" x="12" y="0"/><use href="#g100" x="24" y="0"/><use href="#g101" x="36" y="0"/><use href="#g73" x="48" y="0"/></svg></div>
<div class="a t " style="left:729px;top:586px;color:#000;font-size:12px;"><span class="c" style="width:156px">按下的触点被设置为中断输入</span><span class="e" style="letter-spacing:-1.00px">.</span><svg class="a" style="left:0;top:-2px;overflow:visible" width="162" height="16" fill="#000" shape-rendering="crispEdges"><use href="#g113" x="0" y="0"/><use href="#g114" x="12" y="0"/><use href="#g112" x="24" y="0"/><use href="#g107" x="36" y="0"/><use href="#g115" x="48" y="0"/><use href="#g116" x="60" y="0"/><use href="#g96" x="72" y="0"/><use href="#g97" x="84" y="0"/><use href="#g117" x="96" y="0"/><use href="#g43" x="108" y="0"/><use href="#g44" x="120" y="0"/><use href="#g101" x="132" y="0"/><use href="#g73" x="144" y="0"/></svg></div>
<div class="a" style="left:732px;top:435px;width:28px;height:20px;background:#efebe0;border-top:1px solid #fff;border-left:1px solid #fff;border-right:1px solid #716f64;border-bottom:1px solid #716f64;box-shadow:inset -1px -1px 0 #aca899"></div>
<div class="a t " style="left:740px;top:440px;color:#000;font-size:12px;"><span class="e" style="letter-spacing:-1.00px">X0</span></div>
<div class="a" style="left:762px;top:435px;width:28px;height:20px;background:#efebe0;border-top:1px solid #fff;border-left:1px solid #fff;border-right:1px solid #716f64;border-bottom:1px solid #716f64;box-shadow:inset -1px -1px 0 #aca899"></div>
<div class="a t " style="left:770px;top:440px;color:#000;font-size:12px;"><span class="e" style="letter-spacing:-1.00px">X1</span></div>
<div class="a" style="left:792px;top:435px;width:28px;height:20px;background:#efebe0;border-top:1px solid #fff;border-left:1px solid #fff;border-right:1px solid #716f64;border-bottom:1px solid #716f64;box-shadow:inset -1px -1px 0 #aca899"></div>
<div class="a t " style="left:800px;top:440px;color:#000;font-size:12px;"><span class="e" style="letter-spacing:-1.00px">X2</span></div>
<div class="a" style="left:822px;top:435px;width:28px;height:20px;background:#efebe0;border-top:1px solid #fff;border-left:1px solid #fff;border-right:1px solid #716f64;border-bottom:1px solid #716f64;box-shadow:inset -1px -1px 0 #aca899"></div>
<div class="a t " style="left:830px;top:440px;color:#000;font-size:12px;"><span class="e" style="letter-spacing:-1.00px">X3</span></div>
<div class="a" style="left:852px;top:435px;width:28px;height:20px;background:#efebe0;border-top:1px solid #fff;border-left:1px solid #fff;border-right:1px solid #716f64;border-bottom:1px solid #716f64;box-shadow:inset -1px -1px 0 #aca899"></div>
<div class="a t " style="left:860px;top:440px;color:#000;font-size:12px;"><span class="e" style="letter-spacing:-1.00px">X4</span></div>
<div class="a" style="left:882px;top:435px;width:28px;height:20px;background:#efebe0;border-top:1px solid #fff;border-left:1px solid #fff;border-right:1px solid #716f64;border-bottom:1px solid #716f64;box-shadow:inset -1px -1px 0 #aca899"></div>
<div class="a t " style="left:890px;top:440px;color:#000;font-size:12px;"><span class="e" style="letter-spacing:-1.00px">X5</span></div>
<div class="a" style="left:912px;top:435px;width:28px;height:20px;background:#efebe0;border-top:1px solid #fff;border-left:1px solid #fff;border-right:1px solid #716f64;border-bottom:1px solid #716f64;box-shadow:inset -1px -1px 0 #aca899"></div>
<div class="a t " style="left:920px;top:440px;color:#000;font-size:12px;"><span class="e" style="letter-spacing:-1.00px">X6</span></div>
<div class="a" style="left:942px;top:435px;width:28px;height:20px;background:#efebe0;border-top:1px solid #fff;border-left:1px solid #fff;border-right:1px solid #716f64;border-bottom:1px solid #716f64;box-shadow:inset -1px -1px 0 #aca899"></div>
<div class="a t " style="left:950px;top:440px;color:#000;font-size:12px;"><span class="e" style="letter-spacing:-1.00px">X7</span></div>
<div class="a" style="left:732px;top:543px;width:28px;height:20px;background:#f4f3ee;border-top:2px solid #716f64;border-left:2px solid #716f64;border-right:1px solid #fff;border-bottom:1px solid #fff"></div>
<div class="a t " style="left:740px;top:548px;color:#000;font-size:12px;"><span class="e" style="letter-spacing:-1.00px">X0</span></div>
<div class="a" style="left:762px;top:543px;width:28px;height:20px;background:#efebe0;border-top:1px solid #fff;border-left:1px solid #fff;border-right:1px solid #716f64;border-bottom:1px solid #716f64;box-shadow:inset -1px -1px 0 #aca899"></div>
<div class="a t " style="left:770px;top:548px;color:#000;font-size:12px;"><span class="e" style="letter-spacing:-1.00px">X1</span></div>
<div class="a" style="left:792px;top:543px;width:28px;height:20px;background:#efebe0;border-top:1px solid #fff;border-left:1px solid #fff;border-right:1px solid #716f64;border-bottom:1px solid #716f64;box-shadow:inset -1px -1px 0 #aca899"></div>
<div class="a t " style="left:800px;top:548px;color:#000;font-size:12px;"><span class="e" style="letter-spacing:-1.00px">X2</span></div>
<div class="a" style="left:822px;top:543px;width:28px;height:20px;background:#efebe0;border-top:1px solid #fff;border-left:1px solid #fff;border-right:1px solid #716f64;border-bottom:1px solid #716f64;box-shadow:inset -1px -1px 0 #aca899"></div>
<div class="a t " style="left:830px;top:548px;color:#000;font-size:12px;"><span class="e" style="letter-spacing:-1.00px">X3</span></div>
<div class="a" style="left:852px;top:543px;width:28px;height:20px;background:#efebe0;border-top:1px solid #fff;border-left:1px solid #fff;border-right:1px solid #716f64;border-bottom:1px solid #716f64;box-shadow:inset -1px -1px 0 #aca899"></div>
<div class="a t " style="left:860px;top:548px;color:#000;font-size:12px;"><span class="e" style="letter-spacing:-1.00px">X4</span></div>
<div class="a" style="left:882px;top:543px;width:28px;height:20px;background:#efebe0;border-top:1px solid #fff;border-left:1px solid #fff;border-right:1px solid #716f64;border-bottom:1px solid #716f64;box-shadow:inset -1px -1px 0 #aca899"></div>
<div class="a t " style="left:890px;top:548px;color:#000;font-size:12px;"><span class="e" style="letter-spacing:-1.00px">X5</span></div>
<div class="a" style="left:912px;top:543px;width:28px;height:20px;background:#efebe0;border-top:1px solid #fff;border-left:1px solid #fff;border-right:1px solid #716f64;border-bottom:1px solid #716f64;box-shadow:inset -1px -1px 0 #aca899"></div>
<div class="a t " style="left:920px;top:548px;color:#000;font-size:12px;"><span class="e" style="letter-spacing:-1.00px">X6</span></div>
<div class="a" style="left:942px;top:543px;width:28px;height:20px;background:#efebe0;border-top:1px solid #fff;border-left:1px solid #fff;border-right:1px solid #716f64;border-bottom:1px solid #716f64;box-shadow:inset -1px -1px 0 #aca899"></div>
<div class="a t " style="left:950px;top:548px;color:#000;font-size:12px;"><span class="e" style="letter-spacing:-1.00px">X7</span></div>
<div class="a" style="left:595px;top:638px;width:75px;height:22px;background:#efebe0;border-top:1px solid #fff;border-left:1px solid #fff;border-right:1px solid #716f64;border-bottom:1px solid #716f64;box-shadow:inset -1px -1px 0 #aca899"></div>
<div class="a" style="left:595px;top:638px;width:75px;height:22px;border:1px solid #000"></div>
<div class="a t " style="left:626px;top:643px;color:#000;font-size:12px;"><span class="e" style="letter-spacing:-1.00px">OK</span></div>
<div class="a" style="left:676px;top:638px;width:75px;height:22px;background:#efebe0;border-top:1px solid #fff;border-left:1px solid #fff;border-right:1px solid #716f64;border-bottom:1px solid #716f64;box-shadow:inset -1px -1px 0 #aca899"></div>
<div class="a t " style="left:692px;top:643px;color:#000;font-size:12px;"><span class="c" style="width:24px">取消</span><span class="e" style="letter-spacing:-1.00px">(C)</span><svg class="a" style="left:0;top:-2px;overflow:visible" width="42" height="16" fill="#000" shape-rendering="crispEdges"><use href="#g71" x="0" y="0"/><use href="#g118" x="12" y="0"/></svg></div>
<div class="a" style="left:754px;top:638px;width:75px;height:22px;background:#efebe0;border-top:1px solid #fff;border-left:1px solid #fff;border-right:1px solid #716f64;border-bottom:1px solid #716f64;box-shadow:inset -1px -1px 0 #aca899"></div>
<div class="a t " style="left:761px;top:643px;color:#000;font-size:12px;"><span class="e" style="letter-spacing:-1.00px">PLC</span><span class="c" style="width:24px">读出</span><span class="e" style="letter-spacing:-1.00px">(R)</span><svg class="a" style="left:0;top:-2px;overflow:visible" width="60" height="16" fill="#000" shape-rendering="crispEdges"><use href="#g70" x="18" y="0"/><use href="#g102" x="30" y="0"/></svg></div>
<div class="a" style="left:834px;top:638px;width:75px;height:22px;background:#efebe0;border-top:1px solid #fff;border-left:1px solid #fff;border-right:1px solid #716f64;border-bottom:1px solid #716f64;box-shadow:inset -1px -1px 0 #aca899"></div>
<div class="a t " style="left:844px;top:643px;color:#000;font-size:12px;"><span class="c" style="width:36px">初始化</span><span class="e" style="letter-spacing:-1.00px">(I)</span><svg class="a" style="left:0;top:-2px;overflow:visible" width="54" height="16" fill="#000" shape-rendering="crispEdges"><use href="#g119" x="0" y="0"/><use href="#g120" x="12" y="0"/><use href="#g121" x="24" y="0"/></svg></div>
<div class="a" style="left:930px;top:638px;width:75px;height:22px;background:#efebe0;border-top:1px solid #fff;border-left:1px solid #fff;border-right:1px solid #716f64;border-bottom:1px solid #716f64;box-shadow:inset -1px -1px 0 #aca899"></div>
<div class="a t " style="left:946px;top:643px;color:#000;font-size:12px;"><span class="c" style="width:24px">帮助</span><span class="e" style="letter-spacing:-1.00px">(H)</span><svg class="a" style="left:0;top:-2px;overflow:visible" width="42" height="16" fill="#000" shape-rendering="crispEdges"><use href="#g33" x="0" y="0"/><use href="#g34" x="12" y="0"/></svg></div>
<svg width="0" height="0" style="position:absolute"><defs><path id="g0" d="M5 0h2v1h-2zM5 1h2v1h-2zM1 2h10v1h-10zM1 3h2v1h-2zM5 3h2v1h-2zM9 3h2v1h-2zM1 4h2v1h-2zM5 4h2v1h-2zM9 4h2v1h-2zM1 5h2v1h-2zM5 5h2v1h-2zM9 5h2v1h-2zM1 6h10v1h-10zM1 7h2v1h-2zM5 7h2v1h-2zM9 7h2v1h-2zM5 8h2v1h-2zM5 9h2v1h-2zM5 10h2v1h-2z"/><path id="g1" d="M3 0h2v1h-2zM9 0h3v1h-3zM0 1h10v1h-10zM0 2h6v1h-6zM7 2h2v1h-2zM0 3h2v1h-2zM3 3h2v1h-2zM7 3h2v1h-2zM0 4h12v1h-12zM0 5h5v1h-5zM7 5h4v1h-4zM0 6h6v1h-6zM7 6h4v1h-4zM0 7h11v1h-11zM0 8h2v1h-2zM3 8h2v1h-2zM7 8h4v1h-4zM0 9h8v1h-8zM9 9h2v1h-2zM5 10h2v1h-2zM9 10h2v1h-2z"/><path id="g2" d="M0 0h8v1h-8zM10 0h2v1h-2zM1 1h3v1h-3zM6 1h6v1h-6zM2 2h10v1h-10zM0 3h12v1h-12zM1 4h11v1h-11zM2 5h10v1h-10zM2 6h10v1h-10zM0 7h3v1h-3zM4 7h2v1h-2zM8 7h4v1h-4zM1 8h6v1h-6zM10 8h2v1h-2zM1 9h3v1h-3zM6 9h2v1h-2zM10 9h2v1h-2zM1 10h2v1h-2zM8 10h4v1h-4z"/><path id="g3" d="M1 0h2v1h-2zM7 0h4v1h-4zM2 1h2v1h-2zM7 1h2v1h-2zM10 1h2v1h-2zM3 2h9v1h-9zM7 3h2v1h-2zM0 4h9v1h-9zM2 5h2v1h-2zM5 5h4v1h-4zM2 6h2v1h-2zM5 6h4v1h-4zM2 7h2v1h-2zM5 7h2v1h-2zM8 7h4v1h-4zM2 8h2v1h-2zM5 8h7v1h-7zM2 9h4v1h-4zM9 9h3v1h-3zM2 10h2v1h-2zM10 10h2v1h-2z"/><path id="g4" d="M2 0h2v1h-2zM7 0h2v1h-2zM2 1h10v1h-10zM1 2h4v1h-4zM6 2h4v1h-4zM0 3h2v1h-2zM5 3h2v1h-2zM9 3h2v1h-2zM3 4h2v1h-2zM8 4h2v1h-2zM2 5h10v1h-10zM1 6h3v1h-3zM8 6h2v1h-2zM0 7h4v1h-4zM5 7h2v1h-2zM8 7h2v1h-2zM2 8h2v1h-2zM6 8h4v1h-4zM2 9h2v1h-2zM8 9h2v1h-2zM2 10h2v1h-2zM7 10h3v1h-3z"/><path id="g5" d="M2 0h8v1h-8zM2 1h2v1h-2zM8 1h2v1h-2zM2 2h8v1h-8zM0 4h12v1h-12zM4 5h2v1h-2zM3 6h7v1h-7zM8 7h2v1h-2zM8 8h2v1h-2zM5 9h2v1h-2zM8 9h2v1h-2zM6 10h3v1h-3z"/><path id="g6" d="M2 0h2v1h-2zM5 0h2v1h-2zM9 0h2v1h-2zM2 1h2v1h-2zM6 1h4v1h-4zM2 2h2v1h-2zM5 2h6v1h-6zM0 3h6v1h-6zM7 3h4v1h-4zM2 4h2v1h-2zM5 4h6v1h-6zM1 5h8v1h-8zM1 6h11v1h-11zM0 7h4v1h-4zM6 7h3v1h-3zM10 7h2v1h-2zM2 8h2v1h-2zM5 8h4v1h-4zM10 8h2v1h-2zM2 9h4v1h-4zM7 9h4v1h-4zM2 10h2v1h-2zM7 10h2v1h-2z"/><path id="g7" d="M1 0h7v1h-7zM10 0h2v1h-2zM2 1h2v1h-2zM5 1h2v1h-2zM9 1h2v1h-2zM2 2h2v1h-2zM5 2h2v1h-2zM8 2h2v1h-2zM2 3h2v1h-2zM5 3h2v1h-2zM10 3h2v1h-2zM0 4h8v1h-8zM9 4h2v1h-2zM2 5h2v1h-2zM5 5h2v1h-2zM8 5h2v1h-2zM2 6h2v1h-2zM5 6h4v1h-4zM2 7h2v1h-2zM5 7h2v1h-2zM10 7h2v1h-2zM2 8h2v1h-2zM5 8h2v1h-2zM9 8h2v1h-2zM1 9h2v1h-2zM5 9h2v1h-2zM8 9h2v1h-2zM0 10h2v1h-2zM5 10h4v1h-4z"/><path id="g8" d="M1 0h11v1h-11zM1 1h2v1h-2zM4 1h2v1h-2zM10 1h2v1h-2zM1 2h2v1h-2zM4 2h8v1h-8zM1 3h5v1h-5zM7 3h2v1h-2zM10 3h2v1h-2zM1 4h3v1h-3zM5 4h3v1h-3zM10 4h2v1h-2zM1 5h2v1h-2zM4 5h2v1h-2zM7 5h2v1h-2zM10 5h2v1h-2zM1 6h6v1h-6zM8 6h4v1h-4zM1 7h2v1h-2zM6 7h2v1h-2zM10 7h2v1h-2zM1 8h2v1h-2zM5 8h2v1h-2zM10 8h2v1h-2zM1 9h2v1h-2zM6 9h2v1h-2zM10 9h2v1h-2zM1 10h11v1h-11z"/><path id="g9" d="M2 0h2v1h-2zM7 0h2v1h-2zM2 1h10v1h-10zM1 2h2v1h-2zM4 2h2v1h-2zM10 2h2v1h-2zM1 3h11v1h-11zM0 4h6v1h-6zM2 5h10v1h-10zM1 6h2v1h-2zM4 6h8v1h-8zM0 7h12v1h-12zM4 8h8v1h-8zM2 9h10v1h-10zM0 10h3v1h-3zM4 10h2v1h-2zM9 10h3v1h-3z"/><path id="g10" d="M2 0h2v1h-2zM6 0h5v1h-5zM0 1h8v1h-8zM9 1h2v1h-2zM1 2h2v1h-2zM6 2h5v1h-5zM1 3h3v1h-3zM0 4h4v1h-4zM5 4h7v1h-7zM0 5h8v1h-8zM9 5h2v1h-2zM2 6h2v1h-2zM6 6h5v1h-5zM2 7h9v1h-9zM0 8h4v1h-4zM6 8h2v1h-2zM9 8h3v1h-3zM2 9h9v1h-9zM2 10h2v1h-2zM9 10h2v1h-2z"/><path id="g11" d="M4 0h1v1h-1zM5 1h1v1h-1zM0 2h11v1h-11zM3 3h1v1h-1zM7 3h1v1h-1zM3 4h1v1h-1zM7 4h1v1h-1zM3 5h1v1h-1zM7 5h1v1h-1zM4 6h1v1h-1zM6 6h1v1h-1zM4 7h1v1h-1zM6 7h1v1h-1zM5 8h1v1h-1zM3 9h2v1h-2zM6 9h2v1h-2zM0 10h3v1h-3zM8 10h3v1h-3z"/><path id="g12" d="M3 0h1v1h-1zM7 0h1v1h-1zM3 1h1v1h-1zM5 1h1v1h-1zM7 1h1v1h-1zM2 2h1v1h-1zM5 2h1v1h-1zM7 2h1v1h-1zM2 3h1v1h-1zM4 3h6v1h-6zM1 4h3v1h-3zM7 4h1v1h-1zM0 5h1v1h-1zM2 5h1v1h-1zM7 5h1v1h-1zM2 6h1v1h-1zM4 6h7v1h-7zM2 7h1v1h-1zM7 7h1v1h-1zM2 8h1v1h-1zM7 8h1v1h-1zM2 9h1v1h-1zM7 9h1v1h-1zM2 10h1v1h-1zM7 10h1v1h-1z"/><path id="g13" d="M2 0h1v1h-1zM7 0h1v1h-1zM2 1h1v1h-1zM4 1h7v1h-7zM1 2h1v1h-1zM4 2h1v1h-1zM10 2h1v1h-1zM1 3h1v1h-1zM3 3h8v1h-8zM0 4h3v1h-3zM4 4h1v1h-1zM2 5h1v1h-1zM4 5h7v1h-7zM1 6h1v1h-1zM4 6h1v1h-1zM6 6h1v1h-1zM8 6h1v1h-1zM10 6h1v1h-1zM0 7h11v1h-11zM4 8h1v1h-1zM6 8h1v1h-1zM8 8h1v1h-1zM10 8h1v1h-1zM2 9h3v1h-3zM6 9h1v1h-1zM8 9h1v1h-1zM10 9h1v1h-1zM0 10h2v1h-2zM4 10h1v1h-1zM9 10h2v1h-2z"/><path id="g14" d="M2 0h1v1h-1zM6 0h4v1h-4zM0 1h5v1h-5zM6 1h1v1h-1zM9 1h1v1h-1zM1 2h1v1h-1zM6 2h4v1h-4zM1 3h2v1h-2zM0 4h1v1h-1zM2 4h1v1h-1zM5 4h6v1h-6zM0 5h5v1h-5zM6 5h1v1h-1zM9 5h1v1h-1zM2 6h1v1h-1zM6 6h2v1h-2zM9 6h1v1h-1zM2 7h3v1h-3zM6 7h1v1h-1zM8 7h2v1h-2zM0 8h3v1h-3zM6 8h1v1h-1zM9 8h2v1h-2zM2 9h1v1h-1zM4 9h6v1h-6zM2 10h1v1h-1zM9 10h1v1h-1z"/><path id="g15" d="M4 0h1v1h-1zM3 1h1v1h-1zM0 2h10v1h-10zM0 3h1v1h-1zM9 3h1v1h-1zM0 4h1v1h-1zM3 4h4v1h-4zM9 4h1v1h-1zM0 5h1v1h-1zM3 5h1v1h-1zM6 5h1v1h-1zM9 5h1v1h-1zM0 6h1v1h-1zM3 6h1v1h-1zM6 6h1v1h-1zM9 6h1v1h-1zM0 7h1v1h-1zM3 7h4v1h-4zM9 7h1v1h-1zM0 8h1v1h-1zM9 8h1v1h-1zM0 9h1v1h-1zM9 9h1v1h-1zM0 10h1v1h-1zM7 10h3v1h-3z"/><path id="g16" d="M2 0h7v1h-7zM2 1h1v1h-1zM8 1h1v1h-1zM2 2h7v1h-7zM10 2h1v1h-1zM2 3h1v1h-1zM10 3h1v1h-1zM3 4h8v1h-8zM7 5h1v1h-1zM0 6h11v1h-11zM3 7h1v1h-1zM7 7h1v1h-1zM4 8h1v1h-1zM7 8h1v1h-1zM4 9h1v1h-1zM7 9h1v1h-1zM6 10h2v1h-2z"/><path id="g17" d="M5 0h1v1h-1zM0 1h11v1h-11zM3 2h1v1h-1zM5 2h1v1h-1zM7 2h1v1h-1zM2 3h1v1h-1zM5 3h1v1h-1zM8 3h1v1h-1zM0 4h11v1h-11zM2 5h1v1h-1zM8 5h1v1h-1zM2 6h7v1h-7zM2 7h1v1h-1zM8 7h1v1h-1zM2 8h7v1h-7zM0 10h11v1h-11z"/><path id="g18" d="M2 0h1v1h-1zM6 0h1v1h-1zM8 0h1v1h-1zM2 1h1v1h-1zM6 1h1v1h-1zM9 1h1v1h-1zM0 2h11v1h-11zM2 3h1v1h-1zM6 3h1v1h-1zM2 4h1v1h-1zM4 4h1v1h-1zM6 4h1v1h-1zM9 4h1v1h-1zM2 5h2v1h-2zM6 5h1v1h-1zM9 5h1v1h-1zM1 6h2v1h-2zM6 6h1v1h-1zM8 6h1v1h-1zM0 7h1v1h-1zM2 7h1v1h-1zM7 7h1v1h-1zM2 8h1v1h-1zM6 8h2v1h-2zM10 8h1v1h-1zM2 9h1v1h-1zM5 9h1v1h-1zM8 9h1v1h-1zM10 9h1v1h-1zM0 10h3v1h-3zM4 10h1v1h-1zM9 10h2v1h-2z"/><path id="g19" d="M1 0h1v1h-1zM6 0h1v1h-1zM2 1h1v1h-1zM7 1h1v1h-1zM0 2h1v1h-1zM4 2h7v1h-7zM1 3h1v1h-1zM3 3h1v1h-1zM7 3h1v1h-1zM3 4h1v1h-1zM7 4h1v1h-1zM2 5h1v1h-1zM7 5h1v1h-1zM2 6h1v1h-1zM5 6h5v1h-5zM0 7h2v1h-2zM7 7h1v1h-1zM1 8h1v1h-1zM7 8h1v1h-1zM1 9h1v1h-1zM7 9h1v1h-1zM1 10h1v1h-1zM4 10h7v1h-7z"/><path id="g20" d="M3 0h7v1h-7zM0 1h3v1h-3zM6 1h1v1h-1zM8 1h1v1h-1zM0 2h1v1h-1zM2 2h1v1h-1zM4 2h1v1h-1zM7 2h1v1h-1zM1 3h3v1h-3zM6 3h1v1h-1zM8 3h1v1h-1zM0 4h6v1h-6zM7 4h1v1h-1zM9 4h2v1h-2zM2 5h2v1h-2zM7 5h1v1h-1zM1 6h2v1h-2zM4 6h6v1h-6zM0 7h1v1h-1zM2 7h1v1h-1zM7 7h1v1h-1zM0 8h1v1h-1zM2 8h1v1h-1zM4 8h7v1h-7zM2 9h1v1h-1zM7 9h1v1h-1zM2 10h1v1h-1zM7 10h1v1h-1z"/><path id="g21" d="M1 0h1v1h-1zM5 0h5v1h-5zM2 1h1v1h-1zM5 1h1v1h-1zM9 1h1v1h-1zM0 2h4v1h-4zM5 2h1v1h-1zM7 2h1v1h-1zM9 2h1v1h-1zM3 3h1v1h-1zM5 3h1v1h-1zM7 3h1v1h-1zM9 3h1v1h-1zM2 4h1v1h-1zM5 4h1v1h-1zM7 4h1v1h-1zM9 4h1v1h-1zM1 5h3v1h-3zM5 5h1v1h-1zM7 5h1v1h-1zM9 5h1v1h-1zM0 6h1v1h-1zM2 6h1v1h-1zM5 6h1v1h-1zM7 6h1v1h-1zM9 6h1v1h-1zM2 7h1v1h-1zM7 7h1v1h-1zM2 8h1v1h-1zM6 8h2v1h-2zM10 8h1v1h-1zM2 9h1v1h-1zM5 9h1v1h-1zM7 9h1v1h-1zM10 9h1v1h-1zM2 10h1v1h-1zM4 10h1v1h-1zM8 10h3v1h-3z"/><path id="g22" d="M1 0h10v1h-10zM1 1h1v1h-1zM4 1h1v1h-1zM10 1h1v1h-1zM1 2h1v1h-1zM4 2h5v1h-5zM10 2h1v1h-1zM1 3h1v1h-1zM3 3h2v1h-2zM7 3h1v1h-1zM10 3h1v1h-1zM1 4h2v1h-2zM5 4h2v1h-2zM10 4h1v1h-1zM1 5h1v1h-1zM4 5h1v1h-1zM7 5h1v1h-1zM10 5h1v1h-1zM1 6h3v1h-3zM5 6h1v1h-1zM8 6h3v1h-3zM1 7h1v1h-1zM6 7h1v1h-1zM10 7h1v1h-1zM1 8h1v1h-1zM5 8h1v1h-1zM10 8h1v1h-1zM1 9h1v1h-1zM6 9h1v1h-1zM10 9h1v1h-1zM1 10h10v1h-10z"/><path id="g23" d="M5 0h1v1h-1zM5 1h1v1h-1zM1 2h10v1h-10zM4 3h1v1h-1zM3 4h1v1h-1zM7 4h1v1h-1zM2 5h2v1h-2zM7 5h1v1h-1zM1 6h1v1h-1zM3 6h1v1h-1zM5 6h5v1h-5zM3 7h1v1h-1zM7 7h1v1h-1zM3 8h1v1h-1zM7 8h1v1h-1zM3 9h1v1h-1zM7 9h1v1h-1zM3 10h8v1h-8z"/><path id="g24" d="M2 0h1v1h-1zM6 0h1v1h-1zM8 0h1v1h-1zM2 1h1v1h-1zM6 1h1v1h-1zM9 1h1v1h-1zM1 2h1v1h-1zM6 2h4v1h-4zM1 3h1v1h-1zM4 3h3v1h-3zM0 4h3v1h-3zM6 4h5v1h-5zM2 5h1v1h-1zM4 5h3v1h-3zM1 6h1v1h-1zM6 6h1v1h-1zM9 6h1v1h-1zM0 7h4v1h-4zM6 7h1v1h-1zM8 7h1v1h-1zM4 8h1v1h-1zM7 8h1v1h-1zM10 8h1v1h-1zM2 9h2v1h-2zM6 9h1v1h-1zM8 9h1v1h-1zM10 9h1v1h-1zM0 10h2v1h-2zM4 10h2v1h-2zM9 10h2v1h-2z"/><path id="g25" d="M1 0h1v1h-1zM4 0h7v1h-7zM2 1h1v1h-1zM4 1h1v1h-1zM7 1h1v1h-1zM10 1h1v1h-1zM4 2h1v1h-1zM6 2h3v1h-3zM10 2h1v1h-1zM0 3h3v1h-3zM4 3h1v1h-1zM7 3h1v1h-1zM10 3h1v1h-1zM2 4h1v1h-1zM4 4h7v1h-7zM2 5h1v1h-1zM4 5h1v1h-1zM10 5h1v1h-1zM2 6h1v1h-1zM4 6h1v1h-1zM6 6h3v1h-3zM10 6h1v1h-1zM2 7h1v1h-1zM4 7h1v1h-1zM6 7h1v1h-1zM8 7h1v1h-1zM10 7h1v1h-1zM2 8h3v1h-3zM6 8h3v1h-3zM10 8h1v1h-1zM2 9h1v1h-1zM4 9h1v1h-1zM10 9h1v1h-1zM3 10h1v1h-1zM8 10h3v1h-3z"/><path id="g26" d="M1 0h1v1h-1zM7 0h1v1h-1zM9 0h1v1h-1zM2 1h1v1h-1zM7 1h1v1h-1zM10 1h1v1h-1zM3 2h8v1h-8zM7 3h1v1h-1zM0 4h3v1h-3zM4 4h4v1h-4zM2 5h1v1h-1zM5 5h1v1h-1zM7 5h1v1h-1zM2 6h1v1h-1zM5 6h1v1h-1zM7 6h1v1h-1zM2 7h1v1h-1zM5 7h1v1h-1zM8 7h1v1h-1zM10 7h1v1h-1zM2 8h1v1h-1zM5 8h2v1h-2zM8 8h1v1h-1zM10 8h1v1h-1zM2 9h3v1h-3zM9 9h2v1h-2zM2 10h1v1h-1zM10 10h1v1h-1z"/><path id="g27" d="M1 1h9v1h-9zM5 2h1v1h-1zM5 3h1v1h-1zM5 4h1v1h-1zM5 5h1v1h-1zM5 6h1v1h-1zM5 7h1v1h-1zM5 8h1v1h-1zM0 9h11v1h-11z"/><path id="g28" d="M2 0h7v1h-7zM2 1h1v1h-1zM8 1h1v1h-1zM2 2h7v1h-7zM2 3h1v1h-1zM8 3h1v1h-1zM2 4h7v1h-7zM2 5h1v1h-1zM8 5h1v1h-1zM2 6h7v1h-7zM2 7h1v1h-1zM8 7h1v1h-1zM0 8h11v1h-11zM3 9h1v1h-1zM7 9h1v1h-1zM0 10h3v1h-3zM8 10h3v1h-3z"/><path id="g29" d="M1 0h1v1h-1zM5 0h1v1h-1zM7 0h1v1h-1zM2 1h1v1h-1zM5 1h1v1h-1zM7 1h1v1h-1zM2 2h1v1h-1zM5 2h5v1h-5zM4 3h1v1h-1zM7 3h1v1h-1zM0 4h3v1h-3zM4 4h7v1h-7zM2 5h1v1h-1zM6 5h1v1h-1zM8 5h1v1h-1zM2 6h1v1h-1zM6 6h1v1h-1zM8 6h1v1h-1zM10 6h1v1h-1zM2 7h1v1h-1zM5 7h1v1h-1zM8 7h1v1h-1zM10 7h1v1h-1zM2 8h1v1h-1zM4 8h1v1h-1zM9 8h2v1h-2zM1 9h1v1h-1zM3 9h1v1h-1zM0 10h1v1h-1zM4 10h7v1h-7z"/><path id="g30" d="M5 0h6v1h-6zM0 1h5v1h-5zM7 1h1v1h-1zM2 2h1v1h-1zM5 2h6v1h-6zM2 3h1v1h-1zM5 3h1v1h-1zM10 3h1v1h-1zM2 4h1v1h-1zM5 4h1v1h-1zM7 4h1v1h-1zM10 4h1v1h-1zM2 5h1v1h-1zM5 5h1v1h-1zM7 5h1v1h-1zM10 5h1v1h-1zM2 6h1v1h-1zM5 6h1v1h-1zM7 6h1v1h-1zM10 6h1v1h-1zM2 7h4v1h-4zM7 7h1v1h-1zM10 7h1v1h-1zM0 8h2v1h-2zM7 8h2v1h-2zM6 9h1v1h-1zM9 9h1v1h-1zM4 10h2v1h-2zM10 10h1v1h-1z"/><path id="g31" d="M6 0h1v1h-1zM1 1h10v1h-10zM1 2h1v1h-1zM3 2h1v1h-1zM8 2h1v1h-1zM10 2h1v1h-1zM2 3h1v1h-1zM5 3h1v1h-1zM9 3h1v1h-1zM1 4h10v1h-10zM2 5h1v1h-1zM5 5h1v1h-1zM9 5h1v1h-1zM2 6h1v1h-1zM4 6h6v1h-6zM2 7h3v1h-3zM7 7h1v1h-1zM9 7h1v1h-1zM2 8h1v1h-1zM5 8h2v1h-2zM9 8h1v1h-1zM2 9h1v1h-1zM4 9h1v1h-1zM7 9h1v1h-1zM9 9h1v1h-1zM2 10h8v1h-8z"/><path id="g32" d="M1 1h9v1h-9zM1 2h1v1h-1zM9 2h1v1h-1zM1 3h1v1h-1zM9 3h1v1h-1zM1 4h1v1h-1zM9 4h1v1h-1zM1 5h1v1h-1zM9 5h1v1h-1zM1 6h1v1h-1zM9 6h1v1h-1zM1 7h1v1h-1zM9 7h1v1h-1zM1 8h9v1h-9zM1 9h1v1h-1zM9 9h1v1h-1z"/><path id="g33" d="M3 0h1v1h-1zM1 1h5v1h-5zM7 1h4v1h-4zM3 2h1v1h-1zM7 2h1v1h-1zM10 2h1v1h-1zM1 3h5v1h-5zM7 3h1v1h-1zM9 3h1v1h-1zM3 4h1v1h-1zM7 4h1v1h-1zM10 4h1v1h-1zM0 5h6v1h-6zM7 5h4v1h-4zM2 6h1v1h-1zM5 6h1v1h-1zM7 6h1v1h-1zM1 7h9v1h-9zM2 8h1v1h-1zM5 8h1v1h-1zM9 8h1v1h-1zM2 9h1v1h-1zM5 9h1v1h-1zM8 9h2v1h-2zM5 10h1v1h-1z"/><path id="g34" d="M7 0h1v1h-1zM1 1h4v1h-4zM7 1h1v1h-1zM1 2h1v1h-1zM4 2h1v1h-1zM7 2h1v1h-1zM1 3h1v1h-1zM4 3h1v1h-1zM6 3h5v1h-5zM1 4h4v1h-4zM7 4h1v1h-1zM10 4h1v1h-1zM1 5h1v1h-1zM4 5h1v1h-1zM7 5h1v1h-1zM10 5h1v1h-1zM1 6h4v1h-4zM7 6h1v1h-1zM10 6h1v1h-1zM1 7h1v1h-1zM4 7h1v1h-1zM7 7h1v1h-1zM10 7h1v1h-1zM1 8h1v1h-1zM3 8h4v1h-4zM10 8h1v1h-1zM0 9h3v1h-3zM6 9h1v1h-1zM8 9h1v1h-1zM10 9h1v1h-1zM5 10h1v1h-1zM9 10h1v1h-1z"/><path id="g35" d="M1 0h1v1h-1zM5 0h1v1h-1zM9 0h1v1h-1zM2 1h1v1h-1zM6 1h1v1h-1zM8 1h1v1h-1zM5 2h5v1h-5zM5 3h1v1h-1zM9 3h1v1h-1zM0 4h3v1h-3zM5 4h1v1h-1zM9 4h1v1h-1zM2 5h1v1h-1zM5 5h5v1h-5zM2 6h1v1h-1zM6 6h1v1h-1zM8 6h1v1h-1zM2 7h1v1h-1zM4 7h1v1h-1zM6 7h1v1h-1zM8 7h1v1h-1zM2 8h2v1h-2zM6 8h1v1h-1zM8 8h1v1h-1zM10 8h1v1h-1zM2 9h1v1h-1zM5 9h1v1h-1zM8 9h1v1h-1zM10 9h1v1h-1zM4 10h1v1h-1zM8 10h3v1h-3z"/><path id="g36" d="M6 0h5v1h-5zM0 1h4v1h-4zM6 1h1v1h-1zM10 1h1v1h-1zM0 2h1v1h-1zM3 2h1v1h-1zM6 2h1v1h-1zM10 2h1v1h-1zM0 3h1v1h-1zM3 3h1v1h-1zM6 3h5v1h-5zM0 4h4v1h-4zM6 4h1v1h-1zM10 4h1v1h-1zM0 5h1v1h-1zM3 5h1v1h-1zM6 5h1v1h-1zM10 5h1v1h-1zM0 6h1v1h-1zM3 6h1v1h-1zM6 6h5v1h-5zM0 7h4v1h-4zM6 7h1v1h-1zM10 7h1v1h-1zM5 8h1v1h-1zM10 8h1v1h-1zM4 9h1v1h-1zM8 9h1v1h-1zM10 9h1v1h-1zM2 10h2v1h-2zM9 10h1v1h-1z"/><path id="g37" d="M1 0h1v1h-1zM8 0h3v1h-3zM2 1h1v1h-1zM4 1h4v1h-4zM10 1h1v1h-1zM2 2h1v1h-1zM5 2h1v1h-1zM7 2h1v1h-1zM9 2h1v1h-1zM5 3h6v1h-6zM0 4h3v1h-3zM4 4h1v1h-1zM7 4h1v1h-1zM2 5h9v1h-9zM2 6h1v1h-1zM7 6h1v1h-1zM2 7h1v1h-1zM4 7h1v1h-1zM7 7h1v1h-1zM10 7h1v1h-1zM2 8h1v1h-1zM4 8h7v1h-7zM1 9h1v1h-1zM3 9h1v1h-1zM0 10h1v1h-1zM4 10h7v1h-7z"/><path id="g38" d="M2 0h1v1h-1zM7 0h1v1h-1zM2 1h1v1h-1zM4 1h7v1h-7zM0 2h5v1h-5zM10 2h1v1h-1zM2 3h1v1h-1zM6 3h1v1h-1zM8 3h1v1h-1zM2 4h1v1h-1zM5 4h1v1h-1zM9 4h1v1h-1zM2 5h3v1h-3zM10 5h1v1h-1zM1 6h2v1h-2zM5 6h5v1h-5zM0 7h1v1h-1zM2 7h1v1h-1zM7 7h1v1h-1zM2 8h1v1h-1zM7 8h1v1h-1zM2 9h1v1h-1zM7 9h1v1h-1zM0 10h3v1h-3zM4 10h7v1h-7z"/><path id="g39" d="M0 1h11v1h-11zM5 2h1v1h-1zM5 3h1v1h-1zM2 4h1v1h-1zM5 4h1v1h-1zM2 5h1v1h-1zM5 5h5v1h-5zM2 6h1v1h-1zM5 6h1v1h-1zM2 7h1v1h-1zM5 7h1v1h-1zM2 8h1v1h-1zM5 8h1v1h-1zM2 9h1v1h-1zM5 9h1v1h-1zM0 10h11v1h-11z"/><path id="g40" d="M4 0h1v1h-1zM6 0h1v1h-1zM1 1h1v1h-1zM4 1h1v1h-1zM6 1h1v1h-1zM1 2h1v1h-1zM4 2h1v1h-1zM6 2h5v1h-5zM1 3h1v1h-1zM4 3h1v1h-1zM6 3h1v1h-1zM1 4h1v1h-1zM4 4h2v1h-2zM8 4h1v1h-1zM1 5h1v1h-1zM4 5h1v1h-1zM9 5h1v1h-1zM4 6h1v1h-1zM1 7h9v1h-9zM1 8h1v1h-1zM4 8h1v1h-1zM6 8h1v1h-1zM9 8h1v1h-1zM1 9h1v1h-1zM4 9h1v1h-1zM6 9h1v1h-1zM9 9h1v1h-1zM0 10h11v1h-11z"/><path id="g41" d="M5 0h1v1h-1zM5 1h1v1h-1zM0 2h11v1h-11zM4 3h3v1h-3zM3 4h1v1h-1zM5 4h1v1h-1zM7 4h1v1h-1zM3 5h1v1h-1zM5 5h1v1h-1zM7 5h1v1h-1zM2 6h1v1h-1zM5 6h1v1h-1zM8 6h1v1h-1zM1 7h1v1h-1zM5 7h1v1h-1zM9 7h1v1h-1zM0 8h1v1h-1zM3 8h5v1h-5zM10 8h1v1h-1zM5 9h1v1h-1zM5 10h1v1h-1z"/><path id="g42" d="M1 0h1v1h-1zM7 0h1v1h-1zM2 1h1v1h-1zM7 1h1v1h-1zM0 2h5v1h-5zM7 2h4v1h-4zM7 3h1v1h-1zM0 4h1v1h-1zM3 4h1v1h-1zM7 4h1v1h-1zM1 5h1v1h-1zM3 5h1v1h-1zM5 5h5v1h-5zM1 6h1v1h-1zM3 6h1v1h-1zM5 6h1v1h-1zM9 6h1v1h-1zM2 7h1v1h-1zM5 7h1v1h-1zM9 7h1v1h-1zM2 8h2v1h-2zM5 8h1v1h-1zM9 8h1v1h-1zM0 9h2v1h-2zM5 9h1v1h-1zM9 9h1v1h-1zM5 10h5v1h-5z"/><path id="g43" d="M5 0h1v1h-1zM5 1h1v1h-1zM1 2h9v1h-9zM1 3h1v1h-1zM5 3h1v1h-1zM9 3h1v1h-1zM1 4h1v1h-1zM5 4h1v1h-1zM9 4h1v1h-1zM1 5h1v1h-1zM5 5h1v1h-1zM9 5h1v1h-1zM1 6h9v1h-9zM1 7h1v1h-1zM5 7h1v1h-1zM9 7h1v1h-1zM5 8h1v1h-1zM5 9h1v1h-1zM5 10h1v1h-1z"/><path id="g44" d="M3 0h1v1h-1zM9 0h2v1h-2zM0 1h2v1h-2zM3 1h1v1h-1zM5 1h1v1h-1zM7 1h2v1h-2zM0 2h1v1h-1zM2 2h3v1h-3zM7 2h1v1h-1zM0 3h1v1h-1zM3 3h1v1h-1zM7 3h1v1h-1zM0 4h6v1h-6zM7 4h4v1h-4zM0 5h1v1h-1zM2 5h2v1h-2zM7 5h1v1h-1zM9 5h1v1h-1zM0 6h2v1h-2zM3 6h2v1h-2zM7 6h1v1h-1zM9 6h1v1h-1zM0 7h2v1h-2zM3 7h1v1h-1zM5 7h1v1h-1zM7 7h1v1h-1zM9 7h1v1h-1zM0 8h1v1h-1zM3 8h1v1h-1zM7 8h1v1h-1zM9 8h1v1h-1zM0 9h5v1h-5zM6 9h1v1h-1zM9 9h1v1h-1zM5 10h1v1h-1zM9 10h1v1h-1z"/><path id="g45" d="M3 0h1v1h-1zM10 0h1v1h-1zM1 1h1v1h-1zM3 1h1v1h-1zM8 1h1v1h-1zM10 1h1v1h-1zM1 2h6v1h-6zM8 2h1v1h-1zM10 2h1v1h-1zM0 3h1v1h-1zM3 3h1v1h-1zM8 3h1v1h-1zM10 3h1v1h-1zM0 4h7v1h-7zM8 4h1v1h-1zM10 4h1v1h-1zM3 5h1v1h-1zM8 5h1v1h-1zM10 5h1v1h-1zM1 6h6v1h-6zM8 6h1v1h-1zM10 6h1v1h-1zM1 7h1v1h-1zM3 7h1v1h-1zM6 7h1v1h-1zM8 7h1v1h-1zM10 7h1v1h-1zM1 8h1v1h-1zM3 8h1v1h-1zM6 8h1v1h-1zM10 8h1v1h-1zM1 9h1v1h-1zM3 9h1v1h-1zM5 9h2v1h-2zM10 9h1v1h-1zM3 10h1v1h-1zM8 10h3v1h-3z"/><path id="g46" d="M1 0h1v1h-1zM4 0h7v1h-7zM2 1h1v1h-1zM7 1h1v1h-1zM5 2h5v1h-5zM0 3h3v1h-3zM6 3h1v1h-1zM9 3h1v1h-1zM2 4h1v1h-1zM6 4h1v1h-1zM9 4h1v1h-1zM2 5h1v1h-1zM4 5h7v1h-7zM2 6h1v1h-1zM2 7h1v1h-1zM4 7h6v1h-6zM2 8h2v1h-2zM5 8h1v1h-1zM9 8h1v1h-1zM2 9h1v1h-1zM5 9h1v1h-1zM9 9h1v1h-1zM5 10h5v1h-5z"/><path id="g47" d="M3 0h1v1h-1zM2 1h9v1h-9zM2 2h1v1h-1zM10 2h1v1h-1zM1 3h1v1h-1zM10 3h1v1h-1zM0 4h1v1h-1zM2 4h5v1h-5zM10 4h1v1h-1zM2 5h1v1h-1zM6 5h1v1h-1zM10 5h1v1h-1zM2 6h1v1h-1zM6 6h1v1h-1zM10 6h1v1h-1zM2 7h5v1h-5zM10 7h1v1h-1zM2 8h1v1h-1zM6 8h1v1h-1zM10 8h1v1h-1zM10 9h1v1h-1zM8 10h2v1h-2z"/><path id="g48" d="M2 0h1v1h-1zM7 0h1v1h-1zM2 1h1v1h-1zM4 1h7v1h-7zM0 2h4v1h-4zM5 2h1v1h-1zM9 2h1v1h-1zM2 3h1v1h-1zM6 3h1v1h-1zM8 3h1v1h-1zM2 4h1v1h-1zM4 4h7v1h-7zM2 5h2v1h-2zM7 5h1v1h-1zM1 6h2v1h-2zM4 6h7v1h-7zM0 7h1v1h-1zM2 7h1v1h-1zM6 7h1v1h-1zM9 7h1v1h-1zM2 8h1v1h-1zM5 8h2v1h-2zM8 8h1v1h-1zM2 9h1v1h-1zM7 9h1v1h-1zM9 9h1v1h-1zM0 10h3v1h-3zM4 10h3v1h-3zM10 10h1v1h-1z"/><path id="g49" d="M1 0h1v1h-1zM4 0h6v1h-6zM2 1h1v1h-1zM6 1h1v1h-1zM8 1h1v1h-1zM2 2h1v1h-1zM4 2h7v1h-7zM4 3h1v1h-1zM7 3h1v1h-1zM10 3h1v1h-1zM0 4h3v1h-3zM4 4h7v1h-7zM2 5h1v1h-1zM4 5h1v1h-1zM7 5h1v1h-1zM10 5h1v1h-1zM2 6h1v1h-1zM4 6h7v1h-7zM2 7h1v1h-1zM4 7h1v1h-1zM7 7h1v1h-1zM10 7h1v1h-1zM2 8h1v1h-1zM4 8h1v1h-1zM7 8h1v1h-1zM9 8h2v1h-2zM1 9h1v1h-1zM3 9h1v1h-1zM0 10h1v1h-1zM4 10h7v1h-7z"/><path id="g50" d="M9 4h1v1h-1zM0 5h11v1h-11z"/><path id="g51" d="M1 0h1v1h-1zM6 0h1v1h-1zM2 1h1v1h-1zM6 1h1v1h-1zM2 2h1v1h-1zM5 2h6v1h-6zM5 3h1v1h-1zM9 3h1v1h-1zM2 4h1v1h-1zM4 4h1v1h-1zM7 4h1v1h-1zM2 5h1v1h-1zM7 5h1v1h-1zM0 6h2v1h-2zM7 6h1v1h-1zM1 7h1v1h-1zM6 7h1v1h-1zM8 7h1v1h-1zM1 8h1v1h-1zM6 8h1v1h-1zM8 8h1v1h-1zM1 9h1v1h-1zM5 9h1v1h-1zM9 9h1v1h-1zM3 10h2v1h-2zM10 10h1v1h-1z"/><path id="g52" d="M3 6h2v1h-2zM3 7h2v1h-2zM4 8h1v1h-1zM3 9h1v1h-1z"/><path id="g53" d="M2 0h1v1h-1zM6 0h1v1h-1zM2 1h1v1h-1zM6 1h1v1h-1zM0 2h9v1h-9zM2 3h1v1h-1zM6 3h1v1h-1zM8 3h1v1h-1zM2 4h1v1h-1zM4 4h1v1h-1zM6 4h1v1h-1zM8 4h1v1h-1zM2 5h2v1h-2zM5 5h2v1h-2zM8 5h1v1h-1zM1 6h2v1h-2zM6 6h1v1h-1zM8 6h1v1h-1zM0 7h1v1h-1zM2 7h1v1h-1zM5 7h4v1h-4zM10 7h1v1h-1zM2 8h1v1h-1zM5 8h1v1h-1zM8 8h1v1h-1zM10 8h1v1h-1zM0 9h1v1h-1zM2 9h1v1h-1zM4 9h1v1h-1zM8 9h1v1h-1zM10 9h1v1h-1zM1 10h1v1h-1zM3 10h1v1h-1zM9 10h2v1h-2z"/><path id="g54" d="M2 0h1v1h-1zM5 0h5v1h-5zM1 1h1v1h-1zM0 2h1v1h-1zM3 3h1v1h-1zM2 4h1v1h-1zM4 4h7v1h-7zM1 5h2v1h-2zM8 5h1v1h-1zM0 6h1v1h-1zM2 6h1v1h-1zM8 6h1v1h-1zM2 7h1v1h-1zM8 7h1v1h-1zM2 8h1v1h-1zM8 8h1v1h-1zM2 9h1v1h-1zM8 9h1v1h-1zM2 10h1v1h-1zM6 10h3v1h-3z"/><path id="g55" d="M3 0h8v1h-8zM2 1h1v1h-1zM4 1h1v1h-1zM8 1h1v1h-1zM1 2h1v1h-1zM4 2h7v1h-7zM0 3h1v1h-1zM3 3h2v1h-2zM8 3h1v1h-1zM2 4h1v1h-1zM4 4h1v1h-1zM6 4h5v1h-5zM1 5h2v1h-2zM4 5h1v1h-1zM6 5h1v1h-1zM10 5h1v1h-1zM0 6h1v1h-1zM2 6h1v1h-1zM4 6h1v1h-1zM6 6h5v1h-5zM2 7h1v1h-1zM4 7h1v1h-1zM6 7h1v1h-1zM10 7h1v1h-1zM2 8h1v1h-1zM4 8h1v1h-1zM6 8h5v1h-5zM2 9h1v1h-1zM4 9h1v1h-1zM6 9h1v1h-1zM10 9h1v1h-1zM2 10h2v1h-2zM6 10h5v1h-5z"/><path id="g56" d="M5 0h6v1h-6zM0 1h5v1h-5zM7 1h1v1h-1zM2 2h1v1h-1zM7 2h1v1h-1zM2 3h1v1h-1zM6 3h2v1h-2zM1 4h3v1h-3zM6 4h3v1h-3zM2 5h1v1h-1zM5 5h1v1h-1zM7 5h1v1h-1zM9 5h1v1h-1zM2 6h1v1h-1zM5 6h1v1h-1zM7 6h1v1h-1zM10 6h1v1h-1zM2 7h3v1h-3zM7 7h1v1h-1zM10 7h1v1h-1zM0 8h2v1h-2zM7 8h1v1h-1zM7 9h1v1h-1zM7 10h1v1h-1z"/><path id="g57" d="M1 0h1v1h-1zM6 0h1v1h-1zM1 1h1v1h-1zM6 1h1v1h-1zM1 2h1v1h-1zM6 2h1v1h-1zM9 2h1v1h-1zM1 3h1v1h-1zM6 3h1v1h-1zM8 3h1v1h-1zM1 4h4v1h-4zM6 4h2v1h-2zM1 5h1v1h-1zM6 5h1v1h-1zM1 6h1v1h-1zM6 6h1v1h-1zM1 7h1v1h-1zM6 7h1v1h-1zM1 8h1v1h-1zM3 8h2v1h-2zM6 8h1v1h-1zM10 8h1v1h-1zM1 9h2v1h-2zM6 9h1v1h-1zM10 9h1v1h-1zM1 10h1v1h-1zM7 10h4v1h-4z"/><path id="g58" d="M2 0h1v1h-1zM7 0h1v1h-1zM0 1h5v1h-5zM8 1h1v1h-1zM1 2h1v1h-1zM5 2h6v1h-6zM1 3h2v1h-2zM6 3h1v1h-1zM9 3h1v1h-1zM0 4h1v1h-1zM2 4h1v1h-1zM5 4h1v1h-1zM10 4h1v1h-1zM0 5h5v1h-5zM6 5h1v1h-1zM9 5h1v1h-1zM2 6h1v1h-1zM6 6h1v1h-1zM9 6h1v1h-1zM2 7h3v1h-3zM7 7h2v1h-2zM0 8h3v1h-3zM8 8h1v1h-1zM2 9h1v1h-1zM7 9h1v1h-1zM9 9h1v1h-1zM2 10h1v1h-1zM5 10h2v1h-2zM10 10h1v1h-1z"/><path id="g59" d="M3 0h1v1h-1zM6 0h1v1h-1zM3 1h1v1h-1zM7 1h1v1h-1zM2 2h1v1h-1zM2 3h1v1h-1zM4 3h7v1h-7zM1 4h2v1h-2zM0 5h1v1h-1zM2 5h1v1h-1zM5 5h1v1h-1zM9 5h1v1h-1zM2 6h1v1h-1zM6 6h1v1h-1zM9 6h1v1h-1zM2 7h1v1h-1zM6 7h1v1h-1zM8 7h1v1h-1zM2 8h1v1h-1zM8 8h1v1h-1zM2 9h1v1h-1zM7 9h1v1h-1zM2 10h1v1h-1zM4 10h7v1h-7z"/><path id="g60" d="M5 0h1v1h-1zM1 1h10v1h-10zM1 2h1v1h-1zM10 2h1v1h-1zM0 3h1v1h-1zM3 3h5v1h-5zM9 3h1v1h-1zM6 4h1v1h-1zM5 5h1v1h-1zM0 6h11v1h-11zM5 7h1v1h-1zM5 8h1v1h-1zM5 9h1v1h-1zM3 10h3v1h-3z"/><path id="g61" d="M2 0h1v1h-1zM6 0h1v1h-1zM2 1h1v1h-1zM6 1h1v1h-1zM9 1h2v1h-2zM0 2h5v1h-5zM6 2h3v1h-3zM2 3h1v1h-1zM6 3h1v1h-1zM10 3h1v1h-1zM2 4h1v1h-1zM4 4h1v1h-1zM6 4h5v1h-5zM2 5h2v1h-2zM1 6h2v1h-2zM6 6h5v1h-5zM0 7h1v1h-1zM2 7h1v1h-1zM6 7h1v1h-1zM10 7h1v1h-1zM2 8h1v1h-1zM6 8h5v1h-5zM2 9h1v1h-1zM6 9h1v1h-1zM10 9h1v1h-1zM0 10h3v1h-3zM6 10h5v1h-5z"/><path id="g62" d="M5 0h1v1h-1zM5 1h1v1h-1zM4 2h1v1h-1zM6 2h1v1h-1zM3 3h1v1h-1zM7 3h1v1h-1zM2 4h1v1h-1zM5 4h1v1h-1zM8 4h1v1h-1zM0 5h2v1h-2zM6 5h1v1h-1zM9 5h2v1h-2zM2 6h7v1h-7zM7 7h1v1h-1zM4 8h1v1h-1zM6 8h1v1h-1zM5 9h1v1h-1zM6 10h1v1h-1z"/><path id="g63" d="M2 0h1v1h-1zM7 0h1v1h-1zM0 1h4v1h-4zM5 1h5v1h-5zM1 2h1v1h-1zM7 2h1v1h-1zM1 3h2v1h-2zM4 3h7v1h-7zM0 4h1v1h-1zM2 4h1v1h-1zM6 4h1v1h-1zM0 5h4v1h-4zM5 5h5v1h-5zM2 6h1v1h-1zM9 6h1v1h-1zM2 7h3v1h-3zM6 7h1v1h-1zM8 7h1v1h-1zM0 8h3v1h-3zM7 8h1v1h-1zM2 9h1v1h-1zM8 9h1v1h-1zM2 10h1v1h-1zM8 10h1v1h-1z"/><path id="g64" d="M2 0h1v1h-1zM6 0h1v1h-1zM2 1h1v1h-1zM6 1h4v1h-4zM0 2h6v1h-6zM8 2h1v1h-1zM2 3h1v1h-1zM5 3h5v1h-5zM2 4h1v1h-1zM4 4h2v1h-2zM7 4h1v1h-1zM9 4h1v1h-1zM2 5h2v1h-2zM5 5h1v1h-1zM7 5h1v1h-1zM9 5h1v1h-1zM1 6h2v1h-2zM4 6h7v1h-7zM0 7h1v1h-1zM2 7h1v1h-1zM7 7h1v1h-1zM2 8h1v1h-1zM6 8h1v1h-1zM8 8h1v1h-1zM2 9h1v1h-1zM5 9h1v1h-1zM9 9h1v1h-1zM0 10h3v1h-3zM4 10h1v1h-1zM10 10h1v1h-1z"/><path id="g65" d="M5 0h1v1h-1zM0 1h11v1h-11zM2 2h1v1h-1zM4 2h1v1h-1zM6 2h1v1h-1zM8 2h1v1h-1zM2 3h1v1h-1zM5 3h1v1h-1zM8 3h1v1h-1zM2 4h1v1h-1zM4 4h1v1h-1zM6 4h1v1h-1zM8 4h1v1h-1zM2 5h7v1h-7zM5 6h1v1h-1zM1 7h9v1h-9zM1 8h1v1h-1zM4 8h1v1h-1zM7 8h1v1h-1zM9 8h1v1h-1zM1 9h1v1h-1zM3 9h5v1h-5zM9 9h1v1h-1zM1 10h1v1h-1zM8 10h2v1h-2z"/><path id="g66" d="M2 0h1v1h-1zM8 0h1v1h-1zM3 1h1v1h-1zM7 1h1v1h-1zM1 2h9v1h-9zM5 3h1v1h-1zM5 4h1v1h-1zM0 5h10v1h-10zM5 6h1v1h-1zM4 7h1v1h-1zM6 7h1v1h-1zM3 8h1v1h-1zM7 8h1v1h-1zM2 9h1v1h-1zM8 9h1v1h-1zM0 10h2v1h-2zM9 10h2v1h-2z"/><path id="g67" d="M1 0h1v1h-1zM5 0h6v1h-6zM2 1h1v1h-1zM10 1h1v1h-1zM0 2h1v1h-1zM6 2h1v1h-1zM10 2h1v1h-1zM0 3h1v1h-1zM6 3h1v1h-1zM10 3h1v1h-1zM0 4h1v1h-1zM2 4h7v1h-7zM10 4h1v1h-1zM0 5h1v1h-1zM5 5h2v1h-2zM10 5h1v1h-1zM0 6h1v1h-1zM4 6h1v1h-1zM6 6h1v1h-1zM10 6h1v1h-1zM0 7h1v1h-1zM3 7h1v1h-1zM6 7h1v1h-1zM10 7h1v1h-1zM0 8h1v1h-1zM2 8h1v1h-1zM6 8h1v1h-1zM10 8h1v1h-1zM0 9h1v1h-1zM5 9h2v1h-2zM10 9h1v1h-1zM0 10h1v1h-1zM8 10h3v1h-3z"/><path id="g68" d="M3 0h1v1h-1zM7 0h2v1h-2zM0 1h1v1h-1zM3 1h1v1h-1zM7 1h1v1h-1zM9 1h1v1h-1zM1 2h1v1h-1zM3 2h1v1h-1zM7 2h1v1h-1zM1 3h1v1h-1zM3 3h8v1h-8zM3 4h1v1h-1zM7 4h1v1h-1zM3 5h1v1h-1zM7 5h1v1h-1zM2 6h2v1h-2zM6 6h1v1h-1zM8 6h1v1h-1zM0 7h2v1h-2zM3 7h1v1h-1zM6 7h1v1h-1zM8 7h1v1h-1zM3 8h1v1h-1zM5 8h1v1h-1zM9 8h1v1h-1zM3 9h1v1h-1zM5 9h1v1h-1zM9 9h1v1h-1zM3 10h2v1h-2zM10 10h1v1h-1z"/><path id="g69" d="M5 0h1v1h-1zM0 1h11v1h-11zM5 2h1v1h-1zM4 3h1v1h-1zM6 3h1v1h-1zM2 4h3v1h-3zM7 4h2v1h-2zM0 5h2v1h-2zM5 5h1v1h-1zM9 5h2v1h-2zM3 7h1v1h-1zM5 7h1v1h-1zM9 7h1v1h-1zM1 8h1v1h-1zM3 8h1v1h-1zM6 8h1v1h-1zM8 8h1v1h-1zM10 8h1v1h-1zM1 9h1v1h-1zM3 9h1v1h-1zM8 9h1v1h-1zM10 9h1v1h-1zM0 10h1v1h-1zM4 10h5v1h-5z"/><path id="g70" d="M1 0h1v1h-1zM7 0h1v1h-1zM2 1h1v1h-1zM5 1h5v1h-5zM7 2h1v1h-1zM0 3h3v1h-3zM4 3h7v1h-7zM2 4h1v1h-1zM6 4h1v1h-1zM8 4h1v1h-1zM10 4h1v1h-1zM2 5h1v1h-1zM5 5h1v1h-1zM7 5h2v1h-2zM2 6h1v1h-1zM6 6h1v1h-1zM8 6h1v1h-1zM2 7h1v1h-1zM4 7h7v1h-7zM2 8h2v1h-2zM7 8h2v1h-2zM2 9h1v1h-1zM6 9h1v1h-1zM9 9h1v1h-1zM4 10h2v1h-2zM10 10h1v1h-1z"/><path id="g71" d="M0 0h6v1h-6zM1 1h1v1h-1zM4 1h1v1h-1zM6 1h5v1h-5zM1 2h1v1h-1zM4 2h1v1h-1zM6 2h1v1h-1zM10 2h1v1h-1zM1 3h4v1h-4zM6 3h1v1h-1zM10 3h1v1h-1zM1 4h1v1h-1zM4 4h1v1h-1zM7 4h1v1h-1zM9 4h1v1h-1zM1 5h4v1h-4zM7 5h1v1h-1zM9 5h1v1h-1zM1 6h1v1h-1zM4 6h1v1h-1zM8 6h1v1h-1zM1 7h1v1h-1zM4 7h2v1h-2zM8 7h1v1h-1zM0 8h5v1h-5zM7 8h1v1h-1zM9 8h1v1h-1zM4 9h1v1h-1zM6 9h1v1h-1zM9 9h1v1h-1zM4 10h2v1h-2zM10 10h1v1h-1z"/><path id="g72" d="M1 0h10v1h-10zM1 1h1v1h-1zM10 1h1v1h-1zM0 2h1v1h-1zM3 2h1v1h-1zM9 2h1v1h-1zM3 3h6v1h-6zM3 4h1v1h-1zM3 5h7v1h-7zM9 6h1v1h-1zM1 7h7v1h-7zM9 7h1v1h-1zM9 8h1v1h-1zM6 9h1v1h-1zM8 9h1v1h-1zM7 10h1v1h-1z"/><path id="g73" d="M3 0h2v1h-2zM5 1h1v1h-1zM5 2h1v1h-1zM5 3h1v1h-1zM4 4h1v1h-1zM6 4h1v1h-1zM4 5h1v1h-1zM6 5h1v1h-1zM3 6h1v1h-1zM7 6h1v1h-1zM3 7h1v1h-1zM7 7h1v1h-1zM2 8h1v1h-1zM8 8h1v1h-1zM1 9h1v1h-1zM9 9h1v1h-1zM0 10h1v1h-1zM10 10h1v1h-1z"/><path id="g74" d="M3 0h1v1h-1zM7 0h1v1h-1zM0 1h6v1h-6zM7 1h1v1h-1zM9 1h1v1h-1zM7 2h1v1h-1zM10 2h1v1h-1zM1 3h10v1h-10zM1 4h1v1h-1zM4 4h1v1h-1zM6 4h1v1h-1zM8 4h1v1h-1zM1 5h4v1h-4zM6 5h1v1h-1zM8 5h1v1h-1zM3 6h1v1h-1zM6 6h1v1h-1zM8 6h1v1h-1zM1 7h1v1h-1zM3 7h2v1h-2zM6 7h1v1h-1zM8 7h1v1h-1zM10 7h1v1h-1zM1 8h1v1h-1zM3 8h1v1h-1zM5 8h2v1h-2zM8 8h1v1h-1zM10 8h1v1h-1zM0 9h1v1h-1zM3 9h1v1h-1zM6 9h1v1h-1zM8 9h1v1h-1zM10 9h1v1h-1zM2 10h2v1h-2zM5 10h1v1h-1zM9 10h2v1h-2z"/><path id="g75" d="M2 0h1v1h-1zM7 0h1v1h-1zM2 1h1v1h-1zM5 1h4v1h-4zM10 1h1v1h-1zM1 2h1v1h-1zM4 2h1v1h-1zM7 2h1v1h-1zM9 2h1v1h-1zM1 3h1v1h-1zM3 3h1v1h-1zM5 3h6v1h-6zM0 4h3v1h-3zM7 4h1v1h-1zM2 5h1v1h-1zM6 5h5v1h-5zM1 6h1v1h-1zM5 6h2v1h-2zM10 6h1v1h-1zM0 7h4v1h-4zM6 7h5v1h-5zM4 8h1v1h-1zM6 8h1v1h-1zM10 8h1v1h-1zM2 9h2v1h-2zM6 9h5v1h-5zM0 10h2v1h-2zM6 10h1v1h-1zM10 10h1v1h-1z"/><path id="g76" d="M1 0h1v1h-1zM1 1h1v1h-1zM6 1h5v1h-5zM1 2h6v1h-6zM0 3h1v1h-1zM3 3h1v1h-1zM6 3h1v1h-1zM3 4h1v1h-1zM6 4h5v1h-5zM0 5h7v1h-7zM10 5h1v1h-1zM3 6h1v1h-1zM6 6h1v1h-1zM10 6h1v1h-1zM2 7h1v1h-1zM4 7h1v1h-1zM6 7h5v1h-5zM2 8h1v1h-1zM4 8h1v1h-1zM6 8h1v1h-1zM1 9h1v1h-1zM4 9h1v1h-1zM6 9h1v1h-1zM0 10h1v1h-1zM6 10h5v1h-5z"/><path id="g77" d="M1 0h13v1h-13zM4 1h1v1h-1zM10 1h1v1h-1zM4 2h1v1h-1zM10 2h1v1h-1zM4 3h1v1h-1zM10 3h1v1h-1zM4 4h1v1h-1zM10 4h1v1h-1zM4 5h1v1h-1zM10 5h1v1h-1zM0 6h15v1h-15zM4 7h1v1h-1zM10 7h1v1h-1zM4 8h1v1h-1zM10 8h1v1h-1zM4 9h1v1h-1zM10 9h1v1h-1zM4 10h1v1h-1zM10 10h1v1h-1zM3 11h1v1h-1zM10 11h1v1h-1zM3 12h1v1h-1zM10 12h1v1h-1zM2 13h1v1h-1zM10 13h1v1h-1zM1 14h1v1h-1zM10 14h1v1h-1z"/><path id="g78" d="M3 0h1v1h-1zM10 0h1v1h-1zM3 1h1v1h-1zM10 1h1v1h-1zM3 2h1v1h-1zM9 2h1v1h-1zM0 3h6v1h-6zM9 3h1v1h-1zM12 3h1v1h-1zM2 4h1v1h-1zM5 4h1v1h-1zM8 4h1v1h-1zM13 4h1v1h-1zM2 5h1v1h-1zM5 5h1v1h-1zM7 5h8v1h-8zM2 6h1v1h-1zM5 6h1v1h-1zM8 6h1v1h-1zM14 6h1v1h-1zM2 7h1v1h-1zM5 7h1v1h-1zM1 8h1v1h-1zM4 8h1v1h-1zM8 8h6v1h-6zM2 9h1v1h-1zM4 9h1v1h-1zM8 9h1v1h-1zM13 9h1v1h-1zM3 10h1v1h-1zM8 10h1v1h-1zM13 10h1v1h-1zM2 11h1v1h-1zM4 11h1v1h-1zM8 11h1v1h-1zM13 11h1v1h-1zM1 12h1v1h-1zM5 12h1v1h-1zM8 12h1v1h-1zM13 12h1v1h-1zM0 13h1v1h-1zM8 13h6v1h-6zM8 14h1v1h-1zM13 14h1v1h-1z"/><path id="g79" d="M1 0h1v1h-1zM4 0h1v1h-1zM2 1h1v1h-1zM4 1h7v1h-7zM0 2h2v1h-2zM3 2h1v1h-1zM6 2h1v1h-1zM9 2h1v1h-1zM1 3h1v1h-1zM5 3h1v1h-1zM7 3h1v1h-1zM1 4h1v1h-1zM4 4h1v1h-1zM8 4h2v1h-2zM2 5h7v1h-7zM2 6h1v1h-1zM8 6h1v1h-1zM2 7h1v1h-1zM5 7h1v1h-1zM8 7h1v1h-1zM2 8h1v1h-1zM5 8h1v1h-1zM8 8h1v1h-1zM4 9h1v1h-1zM6 9h1v1h-1zM1 10h3v1h-3zM7 10h3v1h-3z"/><path id="g80" d="M2 0h1v1h-1zM8 0h1v1h-1zM0 1h1v1h-1zM2 1h1v1h-1zM4 1h2v1h-2zM8 1h1v1h-1zM1 2h3v1h-3zM6 2h1v1h-1zM8 2h1v1h-1zM2 3h1v1h-1zM8 3h1v1h-1zM0 4h6v1h-6zM8 4h1v1h-1zM2 5h1v1h-1zM6 5h1v1h-1zM8 5h1v1h-1zM2 6h2v1h-2zM8 6h3v1h-3zM1 7h2v1h-2zM4 7h5v1h-5zM0 8h1v1h-1zM2 8h1v1h-1zM8 8h1v1h-1zM2 9h1v1h-1zM8 9h1v1h-1zM2 10h1v1h-1zM8 10h1v1h-1z"/><path id="g81" d="M7 0h4v1h-4zM1 1h7v1h-7zM4 2h2v1h-2zM8 2h2v1h-2zM2 3h7v1h-7zM5 4h2v1h-2zM4 5h2v1h-2zM8 5h2v1h-2zM1 6h10v1h-10zM5 7h2v1h-2zM9 7h2v1h-2zM3 8h6v1h-6zM2 9h2v1h-2zM5 9h2v1h-2zM8 9h2v1h-2zM1 10h2v1h-2zM4 10h3v1h-3zM9 10h2v1h-2z"/><path id="g82" d="M2 0h2v1h-2zM7 0h2v1h-2zM2 1h10v1h-10zM1 2h2v1h-2zM6 2h2v1h-2zM1 3h6v1h-6zM9 3h2v1h-2zM0 4h12v1h-12zM2 5h2v1h-2zM6 5h6v1h-6zM1 6h2v1h-2zM6 6h4v1h-4zM0 7h5v1h-5zM6 7h4v1h-4zM6 8h6v1h-6zM2 9h5v1h-5zM8 9h4v1h-4zM0 10h3v1h-3zM4 10h2v1h-2zM8 10h4v1h-4z"/><path id="g83" d="M5 0h2v1h-2zM0 1h12v1h-12zM0 2h2v1h-2zM5 2h2v1h-2zM10 2h2v1h-2zM0 3h12v1h-12zM3 4h2v1h-2zM7 4h2v1h-2zM0 5h12v1h-12zM8 6h2v1h-2zM2 7h5v1h-5zM8 7h2v1h-2zM2 8h2v1h-2zM5 8h2v1h-2zM8 8h2v1h-2zM2 9h5v1h-5zM8 9h2v1h-2zM6 10h4v1h-4z"/><path id="g84" d="M4 0h2v1h-2zM0 1h12v1h-12zM3 2h2v1h-2zM2 3h9v1h-9zM2 4h2v1h-2zM8 4h2v1h-2zM1 5h3v1h-3zM7 5h2v1h-2zM0 6h12v1h-12zM2 7h2v1h-2zM7 7h2v1h-2zM2 8h2v1h-2zM7 8h2v1h-2zM2 9h2v1h-2zM7 9h2v1h-2zM2 10h2v1h-2zM5 10h4v1h-4z"/><path id="g85" d="M1 0h10v1h-10zM1 1h2v1h-2zM4 1h4v1h-4zM9 1h2v1h-2zM1 2h2v1h-2zM4 2h4v1h-4zM9 2h2v1h-2zM1 3h10v1h-10zM5 4h2v1h-2zM8 4h2v1h-2zM0 5h12v1h-12zM3 6h2v1h-2zM7 6h2v1h-2zM0 7h12v1h-12zM1 8h2v1h-2zM4 8h4v1h-4zM9 8h2v1h-2zM1 9h2v1h-2zM4 9h4v1h-4zM9 9h2v1h-2zM1 10h10v1h-10z"/><path id="g86" d="M1 0h2v1h-2zM5 0h5v1h-5zM2 1h2v1h-2zM5 1h2v1h-2zM8 1h2v1h-2zM5 2h2v1h-2zM8 2h2v1h-2zM4 3h2v1h-2zM8 3h4v1h-4zM0 4h4v1h-4zM2 5h9v1h-9zM2 6h2v1h-2zM5 6h2v1h-2zM9 6h2v1h-2zM2 7h2v1h-2zM6 7h4v1h-4zM2 8h3v1h-3zM7 8h2v1h-2zM2 9h2v1h-2zM6 9h4v1h-4zM3 10h4v1h-4zM9 10h3v1h-3z"/><path id="g87" d="M1 0h10v1h-10zM1 1h2v1h-2zM4 1h4v1h-4zM9 1h2v1h-2zM1 2h10v1h-10zM5 3h2v1h-2zM0 4h12v1h-12zM2 5h2v1h-2zM8 5h2v1h-2zM2 6h8v1h-8zM2 7h2v1h-2zM8 7h2v1h-2zM2 8h8v1h-8zM2 9h2v1h-2zM8 9h2v1h-2zM0 10h12v1h-12z"/><path id="g88" d="M3 0h1v1h-1zM5 0h5v1h-5zM3 1h1v1h-1zM5 1h1v1h-1zM9 1h1v1h-1zM2 2h1v1h-1zM5 2h1v1h-1zM9 2h1v1h-1zM2 3h1v1h-1zM5 3h5v1h-5zM1 4h2v1h-2zM7 4h1v1h-1zM0 5h1v1h-1zM2 5h1v1h-1zM4 5h7v1h-7zM2 6h1v1h-1zM7 6h1v1h-1zM2 7h1v1h-1zM6 7h3v1h-3zM2 8h1v1h-1zM5 8h1v1h-1zM7 8h1v1h-1zM9 8h1v1h-1zM2 9h1v1h-1zM4 9h1v1h-1zM7 9h1v1h-1zM10 9h1v1h-1zM2 10h1v1h-1zM7 10h1v1h-1z"/><path id="g89" d="M2 0h1v1h-1zM7 0h1v1h-1zM2 1h1v1h-1zM5 1h5v1h-5zM0 2h5v1h-5zM7 2h1v1h-1zM2 3h1v1h-1zM7 3h1v1h-1zM2 4h1v1h-1zM4 4h7v1h-7zM2 5h2v1h-2zM8 5h1v1h-1zM1 6h2v1h-2zM4 6h7v1h-7zM0 7h1v1h-1zM2 7h1v1h-1zM5 7h1v1h-1zM8 7h1v1h-1zM2 8h1v1h-1zM6 8h1v1h-1zM8 8h1v1h-1zM2 9h1v1h-1zM8 9h1v1h-1zM0 10h3v1h-3zM7 10h2v1h-2z"/><path id="g90" d="M4 0h1v1h-1zM6 0h1v1h-1zM4 1h1v1h-1zM6 1h1v1h-1zM0 2h5v1h-5zM6 2h5v1h-5zM4 3h1v1h-1zM6 3h1v1h-1zM4 4h1v1h-1zM6 4h1v1h-1zM1 5h4v1h-4zM6 5h4v1h-4zM4 6h1v1h-1zM6 6h1v1h-1zM4 7h1v1h-1zM6 7h1v1h-1zM0 8h5v1h-5zM6 8h5v1h-5zM4 9h1v1h-1zM6 9h1v1h-1zM4 10h1v1h-1zM6 10h1v1h-1z"/><path id="g91" d="M2 0h7v1h-7zM2 1h1v1h-1zM8 1h1v1h-1zM2 2h7v1h-7zM2 3h1v1h-1zM10 3h1v1h-1zM2 4h9v1h-9zM3 5h1v1h-1zM7 5h1v1h-1zM3 6h1v1h-1zM7 6h1v1h-1zM0 7h11v1h-11zM3 8h1v1h-1zM7 8h1v1h-1zM2 9h1v1h-1zM7 9h1v1h-1zM1 10h1v1h-1zM7 10h1v1h-1z"/><path id="g92" d="M2 0h1v1h-1zM5 0h1v1h-1zM8 0h1v1h-1zM1 1h10v1h-10zM1 2h1v1h-1zM10 2h1v1h-1zM0 3h1v1h-1zM3 3h6v1h-6zM10 3h1v1h-1zM3 4h1v1h-1zM8 4h1v1h-1zM3 5h6v1h-6zM5 6h1v1h-1zM2 7h8v1h-8zM2 8h1v1h-1zM5 8h1v1h-1zM9 8h1v1h-1zM2 9h1v1h-1zM5 9h1v1h-1zM8 9h2v1h-2zM5 10h1v1h-1z"/><path id="g93" d="M8 0h1v1h-1zM0 1h4v1h-4zM8 1h1v1h-1zM0 2h1v1h-1zM3 2h8v1h-8zM0 3h1v1h-1zM3 3h1v1h-1zM8 3h1v1h-1zM0 4h1v1h-1zM3 4h1v1h-1zM5 4h1v1h-1zM8 4h1v1h-1zM0 5h4v1h-4zM6 5h1v1h-1zM8 5h1v1h-1zM0 6h1v1h-1zM3 6h1v1h-1zM6 6h1v1h-1zM8 6h1v1h-1zM0 7h1v1h-1zM3 7h1v1h-1zM8 7h1v1h-1zM0 8h1v1h-1zM3 8h1v1h-1zM8 8h1v1h-1zM0 9h4v1h-4zM8 9h1v1h-1zM6 10h3v1h-3z"/><path id="g94" d="M1 0h1v1h-1zM5 0h5v1h-5zM2 1h1v1h-1zM2 2h1v1h-1zM4 3h7v1h-7zM0 4h3v1h-3zM6 4h1v1h-1zM2 5h1v1h-1zM6 5h1v1h-1zM8 5h1v1h-1zM2 6h1v1h-1zM5 6h1v1h-1zM9 6h1v1h-1zM2 7h1v1h-1zM4 7h5v1h-5zM10 7h1v1h-1zM2 8h1v1h-1zM5 8h1v1h-1zM10 8h1v1h-1zM1 9h1v1h-1zM3 9h1v1h-1zM0 10h1v1h-1zM4 10h7v1h-7z"/><path id="g95" d="M2 0h1v1h-1zM5 0h6v1h-6zM3 1h1v1h-1zM10 1h1v1h-1zM1 2h1v1h-1zM10 2h1v1h-1zM1 3h1v1h-1zM4 3h4v1h-4zM10 3h1v1h-1zM1 4h1v1h-1zM4 4h1v1h-1zM7 4h1v1h-1zM10 4h1v1h-1zM1 5h1v1h-1zM4 5h4v1h-4zM10 5h1v1h-1zM1 6h1v1h-1zM4 6h1v1h-1zM7 6h1v1h-1zM10 6h1v1h-1zM1 7h1v1h-1zM4 7h1v1h-1zM7 7h1v1h-1zM10 7h1v1h-1zM1 8h1v1h-1zM4 8h4v1h-4zM10 8h1v1h-1zM1 9h1v1h-1zM10 9h1v1h-1zM1 10h1v1h-1zM8 10h3v1h-3z"/><path id="g96" d="M1 0h1v1h-1zM5 0h4v1h-4zM2 1h1v1h-1zM5 1h1v1h-1zM8 1h1v1h-1zM5 2h1v1h-1zM8 2h1v1h-1zM4 3h1v1h-1zM8 3h3v1h-3zM0 4h3v1h-3zM2 5h1v1h-1zM4 5h6v1h-6zM2 6h1v1h-1zM5 6h1v1h-1zM9 6h1v1h-1zM2 7h1v1h-1zM6 7h1v1h-1zM8 7h1v1h-1zM2 8h2v1h-2zM7 8h1v1h-1zM2 9h1v1h-1zM6 9h1v1h-1zM8 9h1v1h-1zM3 10h3v1h-3zM9 10h2v1h-2z"/><path id="g97" d="M1 0h9v1h-9zM1 1h1v1h-1zM4 1h1v1h-1zM6 1h1v1h-1zM9 1h1v1h-1zM1 2h9v1h-9zM5 3h1v1h-1zM0 4h11v1h-11zM2 5h1v1h-1zM8 5h1v1h-1zM2 6h7v1h-7zM2 7h1v1h-1zM8 7h1v1h-1zM2 8h7v1h-7zM2 9h1v1h-1zM8 9h1v1h-1zM0 10h11v1h-11z"/><path id="g98" d="M4 0h1v1h-1zM5 1h1v1h-1zM0 2h11v1h-11zM5 3h1v1h-1zM5 4h1v1h-1zM5 5h1v1h-1zM1 6h9v1h-9zM5 7h1v1h-1zM5 8h1v1h-1zM5 9h1v1h-1zM0 10h11v1h-11z"/><path id="g99" d="M3 0h1v1h-1zM7 0h1v1h-1zM4 1h1v1h-1zM6 1h1v1h-1zM1 2h9v1h-9zM1 3h1v1h-1zM5 3h1v1h-1zM9 3h1v1h-1zM1 4h9v1h-9zM1 5h1v1h-1zM5 5h1v1h-1zM9 5h1v1h-1zM1 6h9v1h-9zM5 7h1v1h-1zM0 8h11v1h-11zM5 9h1v1h-1zM5 10h1v1h-1z"/><path id="g100" d="M2 1h8v1h-8zM1 4h10v1h-10zM4 5h1v1h-1zM7 5h1v1h-1zM4 6h1v1h-1zM7 6h1v1h-1zM3 7h1v1h-1zM7 7h1v1h-1zM3 8h1v1h-1zM7 8h1v1h-1zM10 8h1v1h-1zM2 9h1v1h-1zM7 9h1v1h-1zM10 9h1v1h-1zM1 10h1v1h-1zM8 10h3v1h-3z"/><path id="g101" d="M1 0h1v1h-1zM7 0h1v1h-1zM1 1h1v1h-1zM6 1h1v1h-1zM8 1h1v1h-1zM0 2h4v1h-4zM5 2h1v1h-1zM9 2h1v1h-1zM1 3h1v1h-1zM4 3h1v1h-1zM6 3h3v1h-3zM10 3h1v1h-1zM0 4h1v1h-1zM2 4h1v1h-1zM0 5h7v1h-7zM10 5h1v1h-1zM2 6h1v1h-1zM4 6h1v1h-1zM6 6h1v1h-1zM8 6h1v1h-1zM10 6h1v1h-1zM2 7h5v1h-5zM8 7h1v1h-1zM10 7h1v1h-1zM0 8h3v1h-3zM4 8h1v1h-1zM6 8h1v1h-1zM8 8h1v1h-1zM10 8h1v1h-1zM2 9h1v1h-1zM4 9h3v1h-3zM8 9h1v1h-1zM10 9h1v1h-1zM2 10h1v1h-1zM4 10h1v1h-1zM6 10h1v1h-1zM9 10h2v1h-2z"/><path id="g102" d="M5 0h1v1h-1zM1 1h1v1h-1zM5 1h1v1h-1zM9 1h1v1h-1zM1 2h1v1h-1zM5 2h1v1h-1zM9 2h1v1h-1zM1 3h1v1h-1zM5 3h1v1h-1zM9 3h1v1h-1zM1 4h9v1h-9zM5 5h1v1h-1zM0 6h1v1h-1zM5 6h1v1h-1zM10 6h1v1h-1zM0 7h1v1h-1zM5 7h1v1h-1zM10 7h1v1h-1zM0 8h1v1h-1zM5 8h1v1h-1zM10 8h1v1h-1zM0 9h1v1h-1zM5 9h1v1h-1zM10 9h1v1h-1zM0 10h11v1h-11z"/><path id="g103" d="M1 0h3v1h-3zM7 0h1v1h-1zM1 1h1v1h-1zM3 1h1v1h-1zM8 1h1v1h-1zM1 2h1v1h-1zM3 2h1v1h-1zM5 2h3v1h-3zM1 3h3v1h-3zM7 3h1v1h-1zM10 3h1v1h-1zM1 4h1v1h-1zM3 4h3v1h-3zM7 4h1v1h-1zM9 4h1v1h-1zM1 5h1v1h-1zM3 5h1v1h-1zM5 5h1v1h-1zM7 5h2v1h-2zM1 6h3v1h-3zM5 6h1v1h-1zM7 6h1v1h-1zM9 6h1v1h-1zM1 7h1v1h-1zM3 7h1v1h-1zM5 7h1v1h-1zM7 7h1v1h-1zM9 7h1v1h-1zM1 8h1v1h-1zM3 8h2v1h-2zM7 8h1v1h-1zM10 8h1v1h-1zM0 9h1v1h-1zM3 9h1v1h-1zM7 9h1v1h-1zM10 9h1v1h-1zM0 10h1v1h-1zM2 10h2v1h-2zM6 10h2v1h-2z"/><path id="g104" d="M1 0h1v1h-1zM7 0h1v1h-1zM2 1h1v1h-1zM7 1h1v1h-1zM2 2h1v1h-1zM4 2h7v1h-7zM4 3h1v1h-1zM7 3h1v1h-1zM10 3h1v1h-1zM2 4h1v1h-1zM4 4h1v1h-1zM7 4h1v1h-1zM10 4h1v1h-1zM2 5h1v1h-1zM4 5h1v1h-1zM7 5h1v1h-1zM10 5h1v1h-1zM0 6h2v1h-2zM4 6h7v1h-7zM1 7h1v1h-1zM4 7h1v1h-1zM7 7h1v1h-1zM10 7h1v1h-1zM1 8h1v1h-1zM7 8h1v1h-1zM1 9h1v1h-1zM7 9h1v1h-1zM7 10h1v1h-1z"/><path id="g105" d="M2 0h1v1h-1zM7 0h1v1h-1zM9 0h1v1h-1zM2 1h1v1h-1zM7 1h1v1h-1zM10 1h1v1h-1zM0 2h11v1h-11zM2 3h1v1h-1zM7 3h1v1h-1zM2 4h1v1h-1zM4 4h7v1h-7zM2 5h3v1h-3zM7 5h1v1h-1zM10 5h1v1h-1zM1 6h2v1h-2zM4 6h7v1h-7zM0 7h1v1h-1zM2 7h1v1h-1zM4 7h1v1h-1zM7 7h1v1h-1zM10 7h1v1h-1zM2 8h1v1h-1zM4 8h7v1h-7zM2 9h1v1h-1zM4 9h1v1h-1zM7 9h1v1h-1zM10 9h1v1h-1zM0 10h3v1h-3zM4 10h1v1h-1zM7 10h1v1h-1zM9 10h2v1h-2z"/><path id="g106" d="M2 0h1v1h-1zM5 0h5v1h-5zM2 1h1v1h-1zM5 1h1v1h-1zM9 1h1v1h-1zM0 2h6v1h-6zM9 2h1v1h-1zM2 3h1v1h-1zM5 3h1v1h-1zM9 3h1v1h-1zM2 4h1v1h-1zM4 4h6v1h-6zM2 5h2v1h-2zM7 5h1v1h-1zM1 6h2v1h-2zM5 6h1v1h-1zM7 6h1v1h-1zM0 7h1v1h-1zM2 7h1v1h-1zM5 7h1v1h-1zM7 7h4v1h-4zM2 8h1v1h-1zM5 8h1v1h-1zM7 8h1v1h-1zM2 9h1v1h-1zM4 9h1v1h-1zM6 9h2v1h-2zM0 10h4v1h-4zM7 10h4v1h-4z"/><path id="g107" d="M1 0h1v1h-1zM8 0h1v1h-1zM1 1h4v1h-4zM8 1h1v1h-1zM0 2h1v1h-1zM3 2h1v1h-1zM8 2h1v1h-1zM0 3h5v1h-5zM6 3h5v1h-5zM0 4h1v1h-1zM2 4h1v1h-1zM4 4h1v1h-1zM6 4h1v1h-1zM8 4h1v1h-1zM10 4h1v1h-1zM0 5h5v1h-5zM6 5h1v1h-1zM8 5h1v1h-1zM10 5h1v1h-1zM0 6h1v1h-1zM2 6h1v1h-1zM4 6h1v1h-1zM6 6h5v1h-5zM0 7h5v1h-5zM8 7h1v1h-1zM0 8h1v1h-1zM2 8h1v1h-1zM4 8h1v1h-1zM8 8h1v1h-1zM10 8h1v1h-1zM0 9h1v1h-1zM2 9h1v1h-1zM4 9h1v1h-1zM8 9h3v1h-3zM0 10h1v1h-1zM3 10h2v1h-2zM6 10h3v1h-3zM10 10h1v1h-1z"/><path id="g108" d="M2 0h1v1h-1zM5 0h1v1h-1zM8 0h1v1h-1zM2 1h1v1h-1zM5 1h1v1h-1zM9 1h1v1h-1zM1 2h1v1h-1zM5 2h1v1h-1zM1 3h10v1h-10zM4 4h1v1h-1zM4 5h5v1h-5zM4 6h1v1h-1zM8 6h1v1h-1zM3 7h1v1h-1zM5 7h1v1h-1zM7 7h1v1h-1zM2 8h1v1h-1zM6 8h1v1h-1zM1 9h1v1h-1zM5 9h1v1h-1zM7 9h2v1h-2zM0 10h1v1h-1zM3 10h2v1h-2zM9 10h2v1h-2z"/><path id="g109" d="M1 0h1v1h-1zM5 0h4v1h-4zM2 1h1v1h-1zM5 1h1v1h-1zM8 1h1v1h-1zM0 2h1v1h-1zM5 2h1v1h-1zM8 2h1v1h-1zM1 3h1v1h-1zM3 3h1v1h-1zM5 3h1v1h-1zM8 3h1v1h-1zM3 4h2v1h-2zM9 4h2v1h-2zM2 5h1v1h-1zM2 6h1v1h-1zM4 6h6v1h-6zM0 7h2v1h-2zM4 7h1v1h-1zM9 7h1v1h-1zM1 8h1v1h-1zM4 8h1v1h-1zM9 8h1v1h-1zM1 9h1v1h-1zM4 9h1v1h-1zM9 9h1v1h-1zM1 10h1v1h-1zM4 10h6v1h-6z"/><path id="g110" d="M0 0h1v1h-1zM3 0h1v1h-1zM5 0h1v1h-1zM7 0h1v1h-1zM1 1h1v1h-1zM3 1h2v1h-2zM7 1h1v1h-1zM0 2h6v1h-6zM7 2h4v1h-4zM2 3h2v1h-2zM6 3h2v1h-2zM9 3h1v1h-1zM1 4h1v1h-1zM3 4h2v1h-2zM7 4h1v1h-1zM9 4h1v1h-1zM0 5h1v1h-1zM3 5h1v1h-1zM5 5h1v1h-1zM7 5h1v1h-1zM9 5h1v1h-1zM0 6h6v1h-6zM7 6h1v1h-1zM9 6h1v1h-1zM2 7h1v1h-1zM4 7h1v1h-1zM7 7h1v1h-1zM9 7h1v1h-1zM1 8h2v1h-2zM4 8h1v1h-1zM8 8h1v1h-1zM3 9h1v1h-1zM7 9h1v1h-1zM9 9h1v1h-1zM0 10h3v1h-3zM4 10h3v1h-3zM10 10h1v1h-1z"/><path id="g111" d="M3 0h1v1h-1zM5 0h5v1h-5zM0 1h3v1h-3zM5 1h1v1h-1zM9 1h1v1h-1zM2 2h1v1h-1zM5 2h1v1h-1zM9 2h1v1h-1zM0 3h4v1h-4zM5 3h5v1h-5zM2 4h1v1h-1zM2 5h2v1h-2zM5 5h5v1h-5zM1 6h2v1h-2zM4 6h1v1h-1zM7 6h1v1h-1zM1 7h2v1h-2zM5 7h5v1h-5zM0 8h1v1h-1zM2 8h1v1h-1zM7 8h1v1h-1zM2 9h1v1h-1zM7 9h1v1h-1zM2 10h1v1h-1zM4 10h7v1h-7z"/><path id="g112" d="M3 0h1v1h-1zM7 0h1v1h-1zM2 1h1v1h-1zM7 1h1v1h-1zM1 2h4v1h-4zM6 2h5v1h-5zM1 3h1v1h-1zM4 3h2v1h-2zM10 3h1v1h-1zM1 4h1v1h-1zM4 4h1v1h-1zM10 4h1v1h-1zM1 5h4v1h-4zM6 5h1v1h-1zM10 5h1v1h-1zM1 6h1v1h-1zM4 6h1v1h-1zM7 6h1v1h-1zM10 6h1v1h-1zM1 7h1v1h-1zM4 7h1v1h-1zM7 7h1v1h-1zM10 7h1v1h-1zM1 8h1v1h-1zM4 8h1v1h-1zM10 8h1v1h-1zM1 9h4v1h-4zM10 9h1v1h-1zM1 10h1v1h-1zM4 10h1v1h-1zM8 10h2v1h-2z"/><path id="g113" d="M2 0h1v1h-1zM7 0h1v1h-1zM2 1h1v1h-1zM8 1h1v1h-1zM0 2h11v1h-11zM2 3h1v1h-1zM5 3h1v1h-1zM7 3h1v1h-1zM10 3h1v1h-1zM2 4h1v1h-1zM4 4h1v1h-1zM7 4h1v1h-1zM2 5h2v1h-2zM5 5h6v1h-6zM1 6h2v1h-2zM6 6h1v1h-1zM9 6h1v1h-1zM0 7h1v1h-1zM2 7h1v1h-1zM5 7h2v1h-2zM9 7h1v1h-1zM2 8h1v1h-1zM7 8h2v1h-2zM2 9h1v1h-1zM6 9h1v1h-1zM8 9h1v1h-1zM0 10h3v1h-3zM4 10h2v1h-2zM9 10h2v1h-2z"/><path id="g114" d="M0 1h11v1h-11zM5 2h1v1h-1zM5 3h1v1h-1zM5 4h2v1h-2zM5 5h1v1h-1zM7 5h1v1h-1zM5 6h1v1h-1zM8 6h1v1h-1zM5 7h1v1h-1zM8 7h1v1h-1zM5 8h1v1h-1zM5 9h1v1h-1zM5 10h1v1h-1z"/><path id="g115" d="M5 0h1v1h-1zM5 1h1v1h-1zM5 2h5v1h-5zM5 3h1v1h-1zM2 4h7v1h-7zM2 5h1v1h-1zM8 5h1v1h-1zM2 6h1v1h-1zM8 6h1v1h-1zM2 7h7v1h-7zM1 9h1v1h-1zM3 9h1v1h-1zM6 9h1v1h-1zM9 9h1v1h-1zM0 10h1v1h-1zM4 10h1v1h-1zM7 10h1v1h-1zM10 10h1v1h-1z"/><path id="g116" d="M1 0h1v1h-1zM8 0h1v1h-1zM2 1h1v1h-1zM8 1h1v1h-1zM0 2h11v1h-11zM3 3h1v1h-1zM5 3h1v1h-1zM8 3h1v1h-1zM10 3h1v1h-1zM2 4h1v1h-1zM4 4h2v1h-2zM8 4h1v1h-1zM1 5h3v1h-3zM5 5h6v1h-6zM0 6h1v1h-1zM2 6h1v1h-1zM4 6h2v1h-2zM7 6h1v1h-1zM9 6h1v1h-1zM2 7h1v1h-1zM5 7h1v1h-1zM7 7h1v1h-1zM9 7h1v1h-1zM2 8h1v1h-1zM5 8h1v1h-1zM8 8h1v1h-1zM2 9h1v1h-1zM4 9h1v1h-1zM7 9h1v1h-1zM9 9h1v1h-1zM2 10h2v1h-2zM5 10h2v1h-2zM10 10h1v1h-1z"/><path id="g117" d="M2 0h1v1h-1zM5 0h1v1h-1zM3 1h1v1h-1zM5 1h1v1h-1zM5 2h1v1h-1zM1 3h9v1h-9zM5 4h1v1h-1zM9 4h1v1h-1zM5 5h2v1h-2zM9 5h1v1h-1zM4 6h1v1h-1zM7 6h1v1h-1zM9 6h1v1h-1zM4 7h1v1h-1zM7 7h1v1h-1zM9 7h1v1h-1zM3 8h1v1h-1zM9 8h1v1h-1zM2 9h1v1h-1zM6 9h1v1h-1zM9 9h1v1h-1zM1 10h1v1h-1zM7 10h2v1h-2z"/><path id="g118" d="M1 0h1v1h-1zM4 0h1v1h-1zM7 0h1v1h-1zM10 0h1v1h-1zM2 1h1v1h-1zM5 1h1v1h-1zM7 1h1v1h-1zM9 1h1v1h-1zM0 2h1v1h-1zM7 2h1v1h-1zM1 3h1v1h-1zM3 3h1v1h-1zM5 3h6v1h-6zM3 4h1v1h-1zM5 4h1v1h-1zM10 4h1v1h-1zM2 5h1v1h-1zM5 5h6v1h-6zM2 6h1v1h-1zM5 6h1v1h-1zM10 6h1v1h-1zM0 7h2v1h-2zM5 7h6v1h-6zM1 8h1v1h-1zM5 8h1v1h-1zM10 8h1v1h-1zM1 9h1v1h-1zM5 9h1v1h-1zM10 9h1v1h-1zM1 10h1v1h-1zM5 10h1v1h-1zM9 10h2v1h-2z"/><path id="g119" d="M1 0h1v1h-1zM2 1h1v1h-1zM5 1h6v1h-6zM0 2h5v1h-5zM7 2h1v1h-1zM10 2h1v1h-1zM3 3h1v1h-1zM7 3h1v1h-1zM10 3h1v1h-1zM2 4h1v1h-1zM7 4h1v1h-1zM10 4h1v1h-1zM1 5h2v1h-2zM4 5h1v1h-1zM7 5h1v1h-1zM10 5h1v1h-1zM0 6h1v1h-1zM2 6h2v1h-2zM7 6h1v1h-1zM10 6h1v1h-1zM2 7h1v1h-1zM4 7h1v1h-1zM7 7h1v1h-1zM10 7h1v1h-1zM2 8h1v1h-1zM6 8h1v1h-1zM10 8h1v1h-1zM2 9h1v1h-1zM5 9h1v1h-1zM10 9h1v1h-1zM2 10h1v1h-1zM4 10h1v1h-1zM8 10h2v1h-2z"/><path id="g120" d="M2 0h1v1h-1zM7 0h1v1h-1zM2 1h1v1h-1zM7 1h1v1h-1zM0 2h5v1h-5zM6 2h1v1h-1zM9 2h1v1h-1zM2 3h1v1h-1zM4 3h1v1h-1zM6 3h1v1h-1zM10 3h1v1h-1zM2 4h1v1h-1zM4 4h7v1h-7zM1 5h1v1h-1zM4 5h1v1h-1zM1 6h1v1h-1zM3 6h1v1h-1zM6 6h5v1h-5zM2 7h2v1h-2zM6 7h1v1h-1zM10 7h1v1h-1zM2 8h1v1h-1zM4 8h1v1h-1zM6 8h1v1h-1zM10 8h1v1h-1zM1 9h1v1h-1zM4 9h1v1h-1zM6 9h5v1h-5zM0 10h1v1h-1zM6 10h1v1h-1zM10 10h1v1h-1z"/><path id="g121" d="M3 0h1v1h-1zM6 0h1v1h-1zM3 1h1v1h-1zM6 1h1v1h-1zM2 2h1v1h-1zM6 2h1v1h-1zM9 2h1v1h-1zM2 3h1v1h-1zM6 3h1v1h-1zM8 3h1v1h-1zM1 4h2v1h-2zM6 4h2v1h-2zM0 5h1v1h-1zM2 5h1v1h-1zM6 5h1v1h-1zM2 6h1v1h-1zM5 6h2v1h-2zM2 7h1v1h-1zM4 7h1v1h-1zM6 7h1v1h-1zM2 8h1v1h-1zM6 8h1v1h-1zM10 8h1v1h-1zM2 9h1v1h-1zM6 9h1v1h-1zM10 9h1v1h-1zM2 10h1v1h-1zM7 10h4v1h-4z"/></defs></svg>
</body></html>
